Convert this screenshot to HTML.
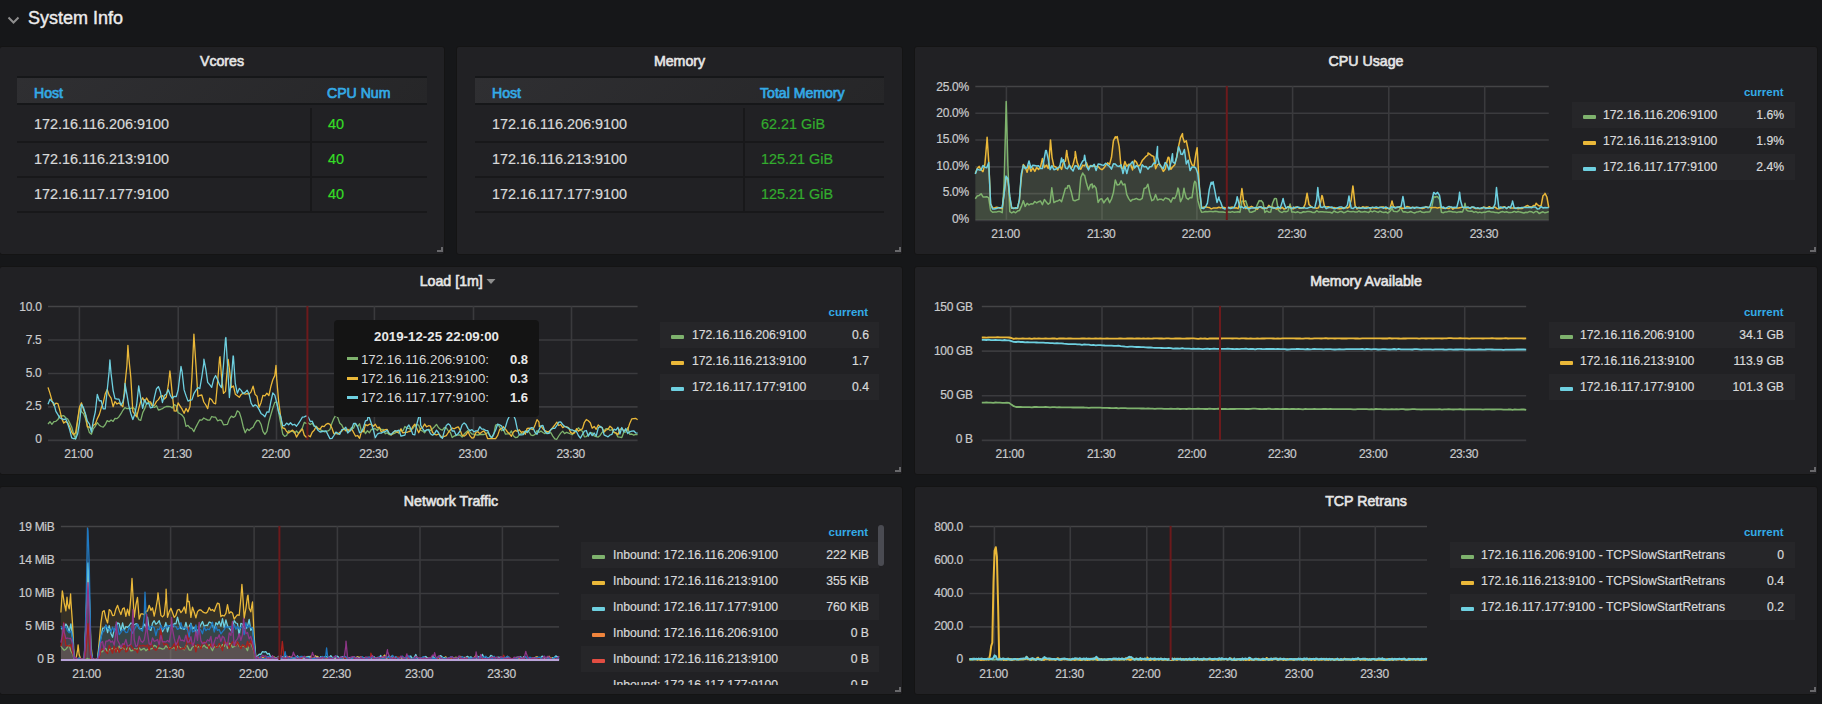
<!DOCTYPE html><html><head><meta charset="utf-8"><style>
*{box-sizing:border-box;margin:0;padding:0}
html,body{width:1822px;height:704px;overflow:hidden;background:#161719;font-family:"Liberation Sans",sans-serif;color:#d8d9da}
.abs{position:absolute}
.panel{position:absolute;background:#212124;border-radius:3px;border:1px solid #141414}
.ptitle{position:absolute;left:0;right:0;text-align:center;font-size:14.2px;font-weight:normal;color:#e6e6e6;-webkit-text-stroke:0.6px #e6e6e6;white-space:nowrap;top:6px;line-height:17px}
.rz{position:absolute;right:1px;bottom:2px;width:6px;height:5px;border-right:2px solid #68686b;border-bottom:2px solid #68686b}
.lbl{position:absolute;font-size:12px;color:#c9cacc;white-space:nowrap;line-height:14px;letter-spacing:-0.3px;-webkit-text-stroke:0.2px #c9cacc}
.yl{text-align:right}
.xl{text-align:center;width:60px}
.leg{position:absolute;font-size:12.2px;color:#d8d9da;white-space:nowrap;-webkit-text-stroke:0.2px #d8d9da}
.lrow{position:absolute;left:0;height:26px;line-height:26px}
.lrow.bg{background:#262629}
.mk{position:absolute;height:4px;top:12.5px;width:13px;border-radius:1px}
.cur{position:absolute;font-size:11.5px;font-weight:bold;color:#34aae6;line-height:14px}
.tbl{position:absolute;font-size:14.4px;color:#d8d9da;-webkit-text-stroke:0.2px currentColor}
</style></head><body>

<svg class="abs" style="left:0;top:0" width="30" height="40"><path d="M8.5,17.5 L13.5,22.5 L18.5,17.5" fill="none" stroke="#8e8e8e" stroke-width="2"/></svg>
<div class="abs" style="left:28px;top:7px;font-size:18px;line-height:22px;color:#ececec;-webkit-text-stroke:0.4px #ececec">System Info</div>
<div class="panel" style="left:-1px;top:46px;width:446px;height:209px">
<div class="ptitle">Vcores</div>
<div class="rz"></div></div>
<div class="abs" style="left:17px;top:76px;width:410px;height:2px;background:#161719"></div>
<div class="abs" style="left:17px;top:78px;width:410px;height:25px;background:linear-gradient(135deg,#2f2f32,#262628)"></div>
<div class="abs" style="left:17px;top:103px;width:410px;height:2px;background:#161719"></div>
<div class="tbl" style="left:34px;top:85px;color:#34aae6;font-weight:normal;font-size:14.1px;line-height:16px;-webkit-text-stroke:0.7px #34aae6">Host</div>
<div class="tbl" style="left:327px;top:85px;color:#34aae6;font-weight:normal;font-size:14.1px;line-height:16px;-webkit-text-stroke:0.7px #34aae6">CPU Num</div>
<div class="tbl" style="left:34px;top:116.0px;line-height:16px">172.16.116.206:9100</div>
<div class="tbl" style="left:328px;top:116px;line-height:16px;color:#35de26">40</div>
<div class="abs" style="left:17px;top:141px;width:410px;height:2px;background:#18181a"></div>
<div class="tbl" style="left:34px;top:151.0px;line-height:16px">172.16.116.213:9100</div>
<div class="tbl" style="left:328px;top:151px;line-height:16px;color:#35de26">40</div>
<div class="abs" style="left:17px;top:176px;width:410px;height:2px;background:#18181a"></div>
<div class="tbl" style="left:34px;top:186.0px;line-height:16px">172.16.117.177:9100</div>
<div class="tbl" style="left:328px;top:186px;line-height:16px;color:#35de26">40</div>
<div class="abs" style="left:17px;top:211px;width:410px;height:2px;background:#18181a"></div>
<div class="abs" style="left:310px;top:108px;width:2px;height:104px;background:#18181a"></div>
<div class="panel" style="left:456px;top:46px;width:447px;height:209px">
<div class="ptitle">Memory</div>
<div class="rz"></div></div>
<div class="abs" style="left:475px;top:76px;width:409px;height:2px;background:#161719"></div>
<div class="abs" style="left:475px;top:78px;width:409px;height:25px;background:linear-gradient(135deg,#2f2f32,#262628)"></div>
<div class="abs" style="left:475px;top:103px;width:409px;height:2px;background:#161719"></div>
<div class="tbl" style="left:492px;top:85px;color:#34aae6;font-weight:normal;font-size:14.1px;line-height:16px;-webkit-text-stroke:0.7px #34aae6">Host</div>
<div class="tbl" style="left:760px;top:85px;color:#34aae6;font-weight:normal;font-size:14.1px;line-height:16px;-webkit-text-stroke:0.7px #34aae6">Total Memory</div>
<div class="tbl" style="left:492px;top:116.0px;line-height:16px">172.16.116.206:9100</div>
<div class="tbl" style="left:761px;top:116px;line-height:16px;color:#33ac2e">62.21 GiB</div>
<div class="abs" style="left:475px;top:141px;width:409px;height:2px;background:#18181a"></div>
<div class="tbl" style="left:492px;top:151.0px;line-height:16px">172.16.116.213:9100</div>
<div class="tbl" style="left:761px;top:151px;line-height:16px;color:#33ac2e">125.21 GiB</div>
<div class="abs" style="left:475px;top:176px;width:409px;height:2px;background:#18181a"></div>
<div class="tbl" style="left:492px;top:186.0px;line-height:16px">172.16.117.177:9100</div>
<div class="tbl" style="left:761px;top:186px;line-height:16px;color:#33ac2e">125.21 GiB</div>
<div class="abs" style="left:475px;top:211px;width:409px;height:2px;background:#18181a"></div>
<div class="abs" style="left:743px;top:108px;width:2px;height:104px;background:#18181a"></div>
<div class="panel" style="left:914px;top:46px;width:904px;height:209px">
<div class="ptitle">CPU Usage</div>
<div class="rz"></div></div>
<svg class="abs" style="left:0;top:0" width="1822" height="704"><line x1="975.3" y1="86.50" x2="1548.8" y2="86.50" stroke="#444446" stroke-width="1.6"/><line x1="975.3" y1="113.28" x2="1548.8" y2="113.28" stroke="#3b3b3e" stroke-width="1.6"/><line x1="975.3" y1="140.06" x2="1548.8" y2="140.06" stroke="#3b3b3e" stroke-width="1.6"/><line x1="975.3" y1="166.84" x2="1548.8" y2="166.84" stroke="#3b3b3e" stroke-width="1.6"/><line x1="975.3" y1="193.62" x2="1548.8" y2="193.62" stroke="#3b3b3e" stroke-width="1.6"/><line x1="975.3" y1="220.40" x2="1548.8" y2="220.40" stroke="#3b3b3e" stroke-width="1.6"/><line x1="1006.40" y1="86.1" x2="1006.40" y2="220.0" stroke="#3a3a3d" stroke-width="1.6"/><line x1="1102.00" y1="86.1" x2="1102.00" y2="220.0" stroke="#3a3a3d" stroke-width="1.6"/><line x1="1196.90" y1="86.1" x2="1196.90" y2="220.0" stroke="#3a3a3d" stroke-width="1.6"/><line x1="1292.60" y1="86.1" x2="1292.60" y2="220.0" stroke="#3a3a3d" stroke-width="1.6"/><line x1="1388.80" y1="86.1" x2="1388.80" y2="220.0" stroke="#3a3a3d" stroke-width="1.6"/><line x1="1484.70" y1="86.1" x2="1484.70" y2="220.0" stroke="#3a3a3d" stroke-width="1.6"/></svg>
<div class="lbl yl" style="left:888.8px;width:80px;top:79.6px">25.0%</div>
<div class="lbl yl" style="left:888.8px;width:80px;top:106.0px">20.0%</div>
<div class="lbl yl" style="left:888.8px;width:80px;top:132.4px">15.0%</div>
<div class="lbl yl" style="left:888.8px;width:80px;top:158.9px">10.0%</div>
<div class="lbl yl" style="left:888.8px;width:80px;top:185.3px">5.0%</div>
<div class="lbl yl" style="left:888.8px;width:80px;top:211.7px">0%</div>
<div class="lbl xl" style="left:975.6px;top:226.5px">21:00</div>
<div class="lbl xl" style="left:1071.2px;top:226.5px">21:30</div>
<div class="lbl xl" style="left:1166.1px;top:226.5px">22:00</div>
<div class="lbl xl" style="left:1261.8px;top:226.5px">22:30</div>
<div class="lbl xl" style="left:1358.0px;top:226.5px">23:00</div>
<div class="lbl xl" style="left:1453.9px;top:226.5px">23:30</div>
<svg class="abs" style="left:0;top:0" width="1822" height="704"><path d="M975.3,198.7 L977.2,196.0 L979.1,195.5 L980.1,194.6 L981.1,193.7 L983.0,196.9 L984.9,197.1 L986.8,196.7 L988.7,197.9 L990.6,210.5 L992.6,212.3 L994.5,212.0 L996.4,212.1 L998.3,211.4 L1000.2,211.6 L1002.2,212.6 L1004.1,183.5 L1006.0,110.4 L1006.2,101.5 L1007.9,166.5 L1009.8,211.6 L1011.7,212.9 L1013.7,211.6 L1015.6,212.8 L1017.5,211.1 L1019.4,210.6 L1021.3,206.4 L1023.3,200.7 L1025.2,206.4 L1027.1,203.3 L1029.0,204.9 L1030.9,203.8 L1032.8,204.1 L1034.8,201.5 L1036.7,202.9 L1038.6,201.7 L1040.5,201.0 L1042.4,204.7 L1044.4,199.4 L1046.3,202.0 L1048.2,204.3 L1050.1,202.6 L1051.8,187.8 L1052.0,189.5 L1053.9,202.6 L1055.9,201.3 L1057.8,201.0 L1059.7,199.7 L1061.6,201.6 L1063.5,195.1 L1065.4,188.3 L1067.4,188.0 L1067.7,185.7 L1069.3,185.6 L1071.2,191.7 L1073.1,200.2 L1075.0,200.8 L1077.0,199.9 L1078.9,199.2 L1080.8,177.5 L1082.7,173.0 L1083.6,174.9 L1084.6,175.2 L1086.5,183.3 L1088.5,189.9 L1090.4,184.8 L1092.3,184.0 L1092.5,187.9 L1094.2,185.6 L1096.1,188.3 L1098.1,202.4 L1100.0,199.3 L1101.9,198.8 L1103.8,202.9 L1105.7,200.0 L1107.6,197.9 L1109.6,202.7 L1111.5,199.0 L1113.4,192.6 L1115.3,179.9 L1117.2,185.1 L1119.2,184.6 L1120.3,182.5 L1121.1,180.9 L1123.0,184.9 L1124.9,184.0 L1126.8,194.7 L1128.7,198.6 L1130.7,201.3 L1132.6,199.4 L1134.5,199.3 L1136.4,198.4 L1138.3,199.6 L1140.3,199.7 L1142.2,198.3 L1144.1,188.5 L1146.0,187.8 L1146.7,186.6 L1147.9,184.2 L1149.8,193.6 L1151.8,200.7 L1153.7,199.7 L1155.6,194.6 L1157.5,200.1 L1159.4,199.2 L1161.4,199.2 L1163.3,200.4 L1165.2,197.9 L1167.1,198.5 L1169.0,199.2 L1170.9,202.1 L1172.9,197.7 L1174.8,198.5 L1176.7,194.2 L1177.9,188.1 L1178.6,189.4 L1180.5,201.7 L1182.5,197.6 L1184.0,188.2 L1184.4,191.1 L1186.3,197.9 L1188.2,199.4 L1190.1,197.5 L1192.0,197.7 L1194.0,183.8 L1194.8,181.2 L1195.9,182.9 L1197.8,200.2 L1199.7,207.4 L1201.6,212.2 L1203.5,212.0 L1205.5,211.5 L1207.4,211.8 L1209.3,211.5 L1211.2,211.4 L1213.1,211.8 L1215.1,211.2 L1217.0,211.5 L1218.9,212.0 L1220.8,212.0 L1222.7,211.9 L1224.6,212.3 L1226.6,212.6 L1228.5,211.9 L1230.4,212.2 L1232.3,211.6 L1234.2,212.2 L1236.2,211.9 L1238.1,211.8 L1240.0,212.2 L1241.9,201.1 L1243.8,201.6 L1244.2,201.4 L1245.7,200.8 L1247.7,207.1 L1249.6,211.9 L1251.5,212.3 L1253.4,211.5 L1255.3,210.8 L1257.3,204.6 L1259.2,200.6 L1260.1,201.1 L1261.1,200.6 L1263.0,202.7 L1264.9,212.5 L1266.8,210.9 L1268.8,212.2 L1270.7,212.0 L1272.6,203.2 L1274.5,198.6 L1275.1,198.4 L1276.4,198.8 L1278.4,210.3 L1280.3,211.9 L1282.2,212.5 L1284.1,211.2 L1286.0,211.8 L1287.9,211.1 L1289.9,204.6 L1290.1,203.9 L1291.8,212.1 L1293.7,212.1 L1295.6,212.6 L1297.5,211.7 L1299.5,212.7 L1301.4,212.7 L1303.3,211.8 L1305.2,212.1 L1307.1,211.5 L1309.0,211.5 L1311.0,211.7 L1312.9,212.6 L1314.8,212.4 L1316.7,210.7 L1318.6,212.0 L1320.6,211.7 L1322.5,211.8 L1324.4,211.9 L1326.3,212.0 L1328.2,212.2 L1330.1,212.2 L1332.1,213.0 L1334.0,211.0 L1335.9,212.0 L1337.8,212.6 L1339.7,211.6 L1341.6,211.5 L1343.6,212.7 L1345.5,212.2 L1347.4,211.1 L1349.3,211.6 L1351.2,211.7 L1353.2,211.4 L1355.1,212.0 L1357.0,212.1 L1358.9,211.0 L1360.8,212.0 L1362.7,212.0 L1364.7,211.6 L1366.6,211.9 L1368.5,212.6 L1370.4,210.9 L1372.3,211.9 L1374.3,210.9 L1376.2,211.6 L1378.1,212.4 L1380.0,211.1 L1381.9,212.0 L1383.8,212.4 L1385.8,211.9 L1387.7,213.1 L1389.6,211.7 L1391.5,209.2 L1392.0,207.8 L1393.4,211.2 L1395.4,211.5 L1397.3,211.7 L1399.2,210.3 L1400.6,206.7 L1401.1,208.5 L1403.0,211.9 L1404.9,211.7 L1406.9,212.4 L1408.8,212.2 L1410.7,211.5 L1412.6,212.4 L1414.5,213.0 L1416.5,212.1 L1418.4,211.8 L1420.3,211.1 L1422.2,212.3 L1424.1,212.4 L1426.0,211.9 L1428.0,212.0 L1429.9,211.8 L1431.8,206.9 L1433.7,196.8 L1435.6,197.2 L1436.0,196.4 L1437.6,196.8 L1439.5,199.2 L1441.4,212.2 L1443.3,212.7 L1445.2,211.9 L1447.1,211.9 L1449.1,211.3 L1451.0,211.4 L1452.9,211.9 L1454.8,211.9 L1456.7,212.5 L1458.7,211.9 L1460.6,211.8 L1462.5,212.1 L1464.4,207.0 L1465.0,203.2 L1466.3,209.9 L1468.2,211.0 L1470.2,211.3 L1472.1,211.1 L1474.0,212.4 L1475.9,211.6 L1477.8,212.7 L1479.7,212.1 L1481.7,212.7 L1483.6,212.3 L1485.5,212.2 L1487.4,211.4 L1489.3,211.3 L1491.3,212.1 L1493.2,212.1 L1495.1,212.4 L1497.0,212.5 L1498.9,212.9 L1500.8,212.0 L1502.8,211.6 L1504.7,212.3 L1506.6,211.7 L1508.5,212.5 L1510.4,212.5 L1512.4,212.2 L1514.3,211.4 L1516.2,212.2 L1518.1,211.5 L1520.0,212.1 L1521.9,212.5 L1523.9,213.0 L1525.8,212.2 L1527.7,212.4 L1529.6,211.4 L1531.5,211.7 L1533.5,212.8 L1535.4,211.5 L1537.3,211.6 L1539.2,213.5 L1541.1,212.5 L1543.0,211.8 L1545.0,212.8 L1546.9,212.3 L1548.8,211.6 L1548.8,220.0 L975.3,220.0 Z" fill="rgba(126,178,109,0.1)" stroke="none"/><path d="M975.3,173.5 L977.2,168.6 L979.1,166.4 L981.1,170.0 L983.0,171.6 L984.9,164.0 L986.8,141.9 L987.1,137.2 L988.7,161.0 L990.6,204.0 L992.6,207.8 L994.5,207.9 L996.4,207.2 L998.3,207.6 L1000.2,208.3 L1002.2,208.4 L1004.1,193.6 L1006.0,177.4 L1007.9,179.7 L1009.8,198.0 L1011.7,208.2 L1013.7,208.1 L1015.6,208.4 L1017.5,208.3 L1019.4,199.7 L1021.3,177.6 L1023.3,164.6 L1025.2,166.9 L1027.1,172.3 L1029.0,165.6 L1030.9,171.3 L1032.8,167.9 L1034.8,171.4 L1036.7,167.4 L1038.6,169.5 L1040.5,166.8 L1042.4,158.6 L1044.4,167.5 L1046.3,165.1 L1048.2,168.4 L1050.1,146.3 L1050.5,139.9 L1052.0,157.3 L1053.9,166.3 L1055.9,167.0 L1057.8,170.0 L1059.7,165.8 L1061.6,169.4 L1063.5,162.2 L1065.4,161.2 L1066.7,150.4 L1067.4,155.9 L1069.3,164.6 L1071.2,168.8 L1073.1,164.5 L1075.0,156.9 L1075.3,151.5 L1077.0,162.1 L1078.9,166.8 L1080.8,169.2 L1082.7,165.1 L1084.6,165.9 L1086.5,162.7 L1088.5,168.1 L1090.4,165.6 L1092.3,165.7 L1094.2,166.3 L1096.1,166.5 L1098.1,166.6 L1100.0,168.6 L1101.9,169.7 L1103.8,168.1 L1105.7,165.4 L1107.6,162.9 L1109.6,164.4 L1111.5,157.3 L1113.4,140.9 L1115.3,136.7 L1115.8,138.1 L1117.2,136.5 L1119.2,146.6 L1121.1,167.8 L1123.0,168.8 L1124.9,161.6 L1126.8,166.2 L1128.7,164.3 L1130.7,164.5 L1132.6,169.9 L1134.5,160.3 L1136.4,162.1 L1138.3,166.3 L1140.3,164.8 L1142.2,160.6 L1144.1,158.4 L1146.0,156.3 L1147.9,155.0 L1148.0,153.0 L1149.8,154.1 L1151.8,155.8 L1153.7,156.4 L1155.6,168.7 L1157.5,164.6 L1159.4,163.7 L1161.4,167.4 L1163.3,171.4 L1165.2,169.1 L1167.1,161.0 L1168.1,157.2 L1169.0,157.5 L1170.9,169.3 L1172.9,166.6 L1174.8,164.8 L1176.7,156.6 L1178.6,146.1 L1180.5,137.6 L1182.5,133.6 L1182.7,137.1 L1184.4,142.2 L1186.3,140.8 L1188.2,149.9 L1190.1,159.8 L1192.0,164.8 L1194.0,166.2 L1195.9,153.4 L1197.1,147.7 L1197.8,159.6 L1199.7,191.5 L1201.6,208.0 L1203.5,207.2 L1205.5,206.8 L1207.4,207.3 L1209.3,207.5 L1211.2,208.9 L1213.1,208.1 L1215.1,208.1 L1217.0,208.0 L1218.9,207.3 L1220.8,207.9 L1222.7,207.2 L1224.6,207.6 L1226.6,207.9 L1228.5,207.6 L1230.4,207.4 L1232.3,207.1 L1234.2,208.0 L1236.2,207.8 L1238.1,208.6 L1240.0,202.5 L1241.9,188.5 L1242.0,189.1 L1243.8,202.9 L1245.7,208.5 L1247.7,207.6 L1249.6,207.5 L1251.5,206.3 L1253.4,207.5 L1255.3,208.2 L1257.3,209.3 L1259.2,206.8 L1261.1,207.6 L1263.0,208.7 L1264.9,207.6 L1266.8,208.7 L1268.8,205.4 L1270.7,207.0 L1272.6,207.3 L1274.5,207.8 L1276.4,209.1 L1278.4,207.8 L1280.3,208.7 L1282.2,207.3 L1284.1,209.1 L1286.0,208.3 L1287.9,206.9 L1289.9,206.6 L1291.8,208.4 L1293.7,208.7 L1295.6,207.1 L1297.5,207.1 L1299.5,208.3 L1301.4,208.1 L1303.3,208.1 L1305.2,204.0 L1307.0,193.7 L1307.1,193.3 L1309.0,204.5 L1311.0,206.4 L1312.9,207.7 L1314.8,207.8 L1316.7,208.3 L1318.6,207.8 L1320.6,202.5 L1321.9,195.4 L1322.5,196.6 L1324.4,206.2 L1326.3,207.1 L1328.2,206.8 L1330.1,207.5 L1332.1,208.1 L1334.0,207.6 L1335.9,207.9 L1337.8,208.4 L1339.7,208.8 L1341.6,208.6 L1343.6,207.7 L1345.5,207.6 L1347.4,208.0 L1349.3,206.8 L1351.2,199.7 L1352.9,185.9 L1353.2,188.0 L1355.1,205.5 L1357.0,208.9 L1358.9,207.2 L1360.8,208.1 L1362.7,206.8 L1364.7,207.5 L1366.6,207.0 L1368.5,207.2 L1370.4,209.0 L1372.3,207.2 L1374.3,208.1 L1376.2,208.2 L1378.1,208.0 L1380.0,207.2 L1381.9,207.1 L1383.8,207.0 L1385.8,208.7 L1387.7,208.1 L1389.6,209.2 L1391.5,203.1 L1392.0,200.9 L1393.4,206.4 L1395.4,207.5 L1397.3,207.5 L1399.2,207.0 L1401.1,208.2 L1403.0,208.2 L1404.9,208.2 L1406.9,206.6 L1408.8,207.0 L1410.7,207.8 L1412.6,207.5 L1414.5,207.6 L1416.5,207.6 L1418.4,207.8 L1420.3,207.9 L1422.2,208.5 L1424.1,208.1 L1426.0,206.6 L1428.0,207.3 L1429.9,207.6 L1431.8,207.8 L1433.7,207.6 L1435.6,207.5 L1437.6,208.1 L1439.5,207.6 L1441.4,207.5 L1443.3,208.2 L1445.2,208.2 L1447.1,208.3 L1449.1,208.4 L1451.0,207.1 L1452.9,209.2 L1454.8,207.9 L1456.7,208.1 L1458.7,208.1 L1460.6,207.6 L1462.5,207.0 L1464.4,207.6 L1466.3,207.8 L1468.2,208.1 L1470.2,207.8 L1472.1,207.1 L1474.0,207.9 L1475.9,208.4 L1477.8,208.5 L1479.7,208.4 L1481.7,208.6 L1483.6,207.0 L1485.5,207.5 L1487.4,207.8 L1489.3,206.7 L1491.3,208.1 L1493.2,207.2 L1495.1,207.2 L1497.0,208.7 L1498.9,208.7 L1500.8,208.3 L1502.8,207.1 L1504.7,206.8 L1506.6,208.5 L1508.5,207.0 L1510.4,207.9 L1512.4,207.9 L1514.3,208.0 L1516.2,207.9 L1518.1,208.8 L1520.0,208.3 L1521.9,208.5 L1523.9,207.4 L1525.8,206.3 L1527.7,205.5 L1529.6,206.8 L1531.5,207.1 L1533.5,205.6 L1535.4,205.3 L1536.1,203.2 L1537.3,204.5 L1539.2,206.0 L1541.1,205.6 L1543.0,195.7 L1545.0,194.0 L1545.0,193.3 L1546.9,197.0 L1548.8,207.7 L1548.8,220.0 L975.3,220.0 Z" fill="rgba(234,184,57,0.1)" stroke="none"/><path d="M975.3,174.1 L977.2,169.0 L979.1,169.9 L981.1,169.9 L983.0,165.5 L984.9,167.3 L986.8,167.7 L988.7,162.4 L990.6,203.5 L992.6,209.0 L994.5,209.1 L996.4,208.6 L998.3,207.8 L1000.2,207.7 L1002.2,207.5 L1004.1,194.1 L1006.0,176.1 L1007.9,178.7 L1009.8,196.4 L1011.7,207.8 L1013.7,208.6 L1015.6,207.7 L1017.5,208.1 L1019.4,200.0 L1021.3,173.9 L1023.3,165.3 L1025.2,168.7 L1027.1,167.5 L1029.0,161.0 L1030.9,168.0 L1032.8,165.3 L1034.8,165.6 L1036.7,165.9 L1038.6,165.7 L1040.5,168.6 L1042.4,168.5 L1044.4,157.5 L1045.7,150.5 L1046.3,150.4 L1048.2,159.1 L1050.1,169.6 L1052.0,165.7 L1053.9,169.8 L1055.9,169.0 L1057.8,167.8 L1059.7,166.8 L1061.6,157.9 L1062.0,161.9 L1063.5,159.7 L1065.4,167.8 L1067.4,168.8 L1069.3,165.2 L1071.2,168.7 L1073.1,170.9 L1075.0,165.7 L1077.0,165.9 L1078.9,169.3 L1080.8,164.7 L1082.7,161.0 L1083.9,160.4 L1084.6,155.2 L1086.5,166.2 L1088.5,170.0 L1090.4,165.7 L1092.3,166.6 L1094.2,164.3 L1096.1,170.6 L1098.1,164.1 L1100.0,164.3 L1101.9,165.0 L1103.8,165.2 L1105.7,163.3 L1107.6,164.9 L1109.6,166.5 L1111.5,169.1 L1113.4,163.8 L1115.3,164.1 L1117.2,166.0 L1119.2,166.4 L1121.1,164.8 L1123.0,173.6 L1124.9,165.9 L1126.8,173.5 L1128.7,166.1 L1130.7,163.8 L1132.6,161.5 L1134.5,168.0 L1136.4,165.5 L1138.3,166.9 L1140.3,172.7 L1142.2,164.7 L1144.1,166.7 L1146.0,166.4 L1147.9,169.2 L1149.8,166.7 L1151.8,166.4 L1153.7,163.1 L1155.6,163.2 L1157.5,146.5 L1157.5,157.0 L1159.4,164.5 L1161.4,166.7 L1163.3,168.7 L1165.2,162.4 L1167.1,164.7 L1169.0,169.9 L1170.9,162.5 L1172.5,153.7 L1172.9,162.0 L1174.8,163.5 L1176.7,157.6 L1178.6,146.7 L1180.5,151.9 L1180.8,154.1 L1182.5,154.5 L1184.4,149.5 L1186.3,163.9 L1188.2,160.2 L1190.1,170.6 L1192.0,166.9 L1194.0,167.0 L1195.9,168.2 L1197.8,173.4 L1199.7,190.6 L1201.6,208.1 L1203.5,208.6 L1205.5,206.8 L1207.4,203.1 L1209.3,189.4 L1211.2,182.3 L1212.0,184.2 L1213.1,181.8 L1215.1,192.2 L1217.0,202.4 L1218.9,197.0 L1219.0,198.8 L1220.8,202.5 L1222.7,208.0 L1224.6,208.9 L1226.6,208.4 L1228.5,207.5 L1230.4,208.5 L1232.3,208.0 L1234.2,207.2 L1236.2,202.4 L1237.2,196.7 L1238.1,200.3 L1240.0,207.6 L1241.9,206.7 L1243.8,208.3 L1245.7,206.6 L1247.7,208.5 L1249.6,208.8 L1251.5,207.9 L1253.4,207.9 L1255.3,207.5 L1257.3,208.0 L1259.2,207.2 L1261.1,206.8 L1263.0,208.1 L1264.9,208.5 L1266.8,207.9 L1268.8,207.1 L1270.7,207.1 L1272.6,207.9 L1274.5,208.3 L1276.4,207.7 L1278.4,207.0 L1280.3,208.1 L1282.2,201.9 L1283.1,198.4 L1284.1,203.3 L1286.0,208.1 L1287.9,206.8 L1289.9,207.6 L1291.8,208.6 L1293.7,207.1 L1295.6,207.9 L1297.5,207.0 L1299.5,207.5 L1301.4,208.1 L1303.3,207.5 L1305.2,208.0 L1307.1,208.2 L1309.0,207.6 L1311.0,207.1 L1312.9,207.6 L1314.8,207.7 L1316.7,199.5 L1317.8,187.5 L1318.6,196.2 L1320.6,207.0 L1322.5,207.4 L1324.4,206.3 L1326.3,208.7 L1328.2,207.7 L1330.1,207.3 L1332.1,207.1 L1334.0,208.7 L1335.9,208.4 L1337.8,207.7 L1339.7,207.0 L1341.6,206.9 L1343.6,208.6 L1345.5,207.6 L1347.4,205.1 L1349.0,195.9 L1349.3,198.3 L1351.2,208.1 L1353.2,208.5 L1355.1,206.9 L1357.0,207.8 L1358.9,207.9 L1360.8,208.2 L1362.7,207.7 L1364.7,208.2 L1366.6,208.3 L1368.5,207.7 L1370.4,207.8 L1372.3,207.4 L1374.3,207.6 L1376.2,206.9 L1378.1,207.7 L1380.0,207.5 L1381.9,207.5 L1383.8,208.2 L1385.8,206.9 L1387.7,208.0 L1389.6,208.7 L1391.5,206.8 L1393.4,207.2 L1395.4,208.0 L1397.3,207.0 L1399.2,207.0 L1401.1,206.3 L1402.9,196.6 L1403.0,196.7 L1404.9,208.3 L1406.9,208.1 L1408.8,208.0 L1410.7,208.2 L1412.6,207.3 L1414.5,208.2 L1416.5,207.3 L1418.4,207.5 L1420.3,208.0 L1422.2,207.5 L1424.1,207.2 L1426.0,206.9 L1428.0,207.8 L1429.9,206.5 L1431.8,200.6 L1433.7,192.4 L1435.6,194.1 L1436.0,193.9 L1437.6,192.4 L1439.5,195.4 L1441.4,207.4 L1443.3,206.9 L1445.2,208.6 L1447.1,207.4 L1449.1,206.4 L1451.0,207.1 L1452.9,207.6 L1454.8,207.3 L1456.7,207.6 L1458.7,199.8 L1459.6,192.3 L1460.6,200.8 L1462.5,207.3 L1464.4,207.5 L1466.3,207.2 L1468.2,207.1 L1470.2,208.4 L1472.1,206.9 L1474.0,207.1 L1475.9,208.4 L1477.8,207.8 L1479.7,208.6 L1481.7,207.8 L1483.6,207.4 L1485.5,208.4 L1487.4,208.2 L1489.3,208.2 L1491.3,208.1 L1493.2,208.2 L1495.1,203.6 L1496.5,187.5 L1497.0,192.8 L1498.9,208.2 L1500.8,207.0 L1502.8,208.0 L1504.7,207.1 L1506.6,208.5 L1508.5,206.7 L1510.4,207.9 L1512.4,202.2 L1512.5,201.0 L1514.3,208.1 L1516.2,208.4 L1518.1,207.5 L1520.0,208.0 L1521.9,207.4 L1523.9,207.6 L1525.8,207.5 L1527.7,207.6 L1529.6,207.2 L1531.5,207.7 L1533.5,206.9 L1535.4,207.0 L1537.3,208.9 L1539.2,208.8 L1541.1,206.6 L1543.0,207.9 L1545.0,207.5 L1546.9,207.7 L1548.8,207.5 L1548.8,220.0 L975.3,220.0 Z" fill="rgba(110,208,224,0.1)" stroke="none"/><path d="M975.3,198.7 L977.2,196.0 L979.1,195.5 L980.1,194.6 L981.1,193.7 L983.0,196.9 L984.9,197.1 L986.8,196.7 L988.7,197.9 L990.6,210.5 L992.6,212.3 L994.5,212.0 L996.4,212.1 L998.3,211.4 L1000.2,211.6 L1002.2,212.6 L1004.1,183.5 L1006.0,110.4 L1006.2,101.5 L1007.9,166.5 L1009.8,211.6 L1011.7,212.9 L1013.7,211.6 L1015.6,212.8 L1017.5,211.1 L1019.4,210.6 L1021.3,206.4 L1023.3,200.7 L1025.2,206.4 L1027.1,203.3 L1029.0,204.9 L1030.9,203.8 L1032.8,204.1 L1034.8,201.5 L1036.7,202.9 L1038.6,201.7 L1040.5,201.0 L1042.4,204.7 L1044.4,199.4 L1046.3,202.0 L1048.2,204.3 L1050.1,202.6 L1051.8,187.8 L1052.0,189.5 L1053.9,202.6 L1055.9,201.3 L1057.8,201.0 L1059.7,199.7 L1061.6,201.6 L1063.5,195.1 L1065.4,188.3 L1067.4,188.0 L1067.7,185.7 L1069.3,185.6 L1071.2,191.7 L1073.1,200.2 L1075.0,200.8 L1077.0,199.9 L1078.9,199.2 L1080.8,177.5 L1082.7,173.0 L1083.6,174.9 L1084.6,175.2 L1086.5,183.3 L1088.5,189.9 L1090.4,184.8 L1092.3,184.0 L1092.5,187.9 L1094.2,185.6 L1096.1,188.3 L1098.1,202.4 L1100.0,199.3 L1101.9,198.8 L1103.8,202.9 L1105.7,200.0 L1107.6,197.9 L1109.6,202.7 L1111.5,199.0 L1113.4,192.6 L1115.3,179.9 L1117.2,185.1 L1119.2,184.6 L1120.3,182.5 L1121.1,180.9 L1123.0,184.9 L1124.9,184.0 L1126.8,194.7 L1128.7,198.6 L1130.7,201.3 L1132.6,199.4 L1134.5,199.3 L1136.4,198.4 L1138.3,199.6 L1140.3,199.7 L1142.2,198.3 L1144.1,188.5 L1146.0,187.8 L1146.7,186.6 L1147.9,184.2 L1149.8,193.6 L1151.8,200.7 L1153.7,199.7 L1155.6,194.6 L1157.5,200.1 L1159.4,199.2 L1161.4,199.2 L1163.3,200.4 L1165.2,197.9 L1167.1,198.5 L1169.0,199.2 L1170.9,202.1 L1172.9,197.7 L1174.8,198.5 L1176.7,194.2 L1177.9,188.1 L1178.6,189.4 L1180.5,201.7 L1182.5,197.6 L1184.0,188.2 L1184.4,191.1 L1186.3,197.9 L1188.2,199.4 L1190.1,197.5 L1192.0,197.7 L1194.0,183.8 L1194.8,181.2 L1195.9,182.9 L1197.8,200.2 L1199.7,207.4 L1201.6,212.2 L1203.5,212.0 L1205.5,211.5 L1207.4,211.8 L1209.3,211.5 L1211.2,211.4 L1213.1,211.8 L1215.1,211.2 L1217.0,211.5 L1218.9,212.0 L1220.8,212.0 L1222.7,211.9 L1224.6,212.3 L1226.6,212.6 L1228.5,211.9 L1230.4,212.2 L1232.3,211.6 L1234.2,212.2 L1236.2,211.9 L1238.1,211.8 L1240.0,212.2 L1241.9,201.1 L1243.8,201.6 L1244.2,201.4 L1245.7,200.8 L1247.7,207.1 L1249.6,211.9 L1251.5,212.3 L1253.4,211.5 L1255.3,210.8 L1257.3,204.6 L1259.2,200.6 L1260.1,201.1 L1261.1,200.6 L1263.0,202.7 L1264.9,212.5 L1266.8,210.9 L1268.8,212.2 L1270.7,212.0 L1272.6,203.2 L1274.5,198.6 L1275.1,198.4 L1276.4,198.8 L1278.4,210.3 L1280.3,211.9 L1282.2,212.5 L1284.1,211.2 L1286.0,211.8 L1287.9,211.1 L1289.9,204.6 L1290.1,203.9 L1291.8,212.1 L1293.7,212.1 L1295.6,212.6 L1297.5,211.7 L1299.5,212.7 L1301.4,212.7 L1303.3,211.8 L1305.2,212.1 L1307.1,211.5 L1309.0,211.5 L1311.0,211.7 L1312.9,212.6 L1314.8,212.4 L1316.7,210.7 L1318.6,212.0 L1320.6,211.7 L1322.5,211.8 L1324.4,211.9 L1326.3,212.0 L1328.2,212.2 L1330.1,212.2 L1332.1,213.0 L1334.0,211.0 L1335.9,212.0 L1337.8,212.6 L1339.7,211.6 L1341.6,211.5 L1343.6,212.7 L1345.5,212.2 L1347.4,211.1 L1349.3,211.6 L1351.2,211.7 L1353.2,211.4 L1355.1,212.0 L1357.0,212.1 L1358.9,211.0 L1360.8,212.0 L1362.7,212.0 L1364.7,211.6 L1366.6,211.9 L1368.5,212.6 L1370.4,210.9 L1372.3,211.9 L1374.3,210.9 L1376.2,211.6 L1378.1,212.4 L1380.0,211.1 L1381.9,212.0 L1383.8,212.4 L1385.8,211.9 L1387.7,213.1 L1389.6,211.7 L1391.5,209.2 L1392.0,207.8 L1393.4,211.2 L1395.4,211.5 L1397.3,211.7 L1399.2,210.3 L1400.6,206.7 L1401.1,208.5 L1403.0,211.9 L1404.9,211.7 L1406.9,212.4 L1408.8,212.2 L1410.7,211.5 L1412.6,212.4 L1414.5,213.0 L1416.5,212.1 L1418.4,211.8 L1420.3,211.1 L1422.2,212.3 L1424.1,212.4 L1426.0,211.9 L1428.0,212.0 L1429.9,211.8 L1431.8,206.9 L1433.7,196.8 L1435.6,197.2 L1436.0,196.4 L1437.6,196.8 L1439.5,199.2 L1441.4,212.2 L1443.3,212.7 L1445.2,211.9 L1447.1,211.9 L1449.1,211.3 L1451.0,211.4 L1452.9,211.9 L1454.8,211.9 L1456.7,212.5 L1458.7,211.9 L1460.6,211.8 L1462.5,212.1 L1464.4,207.0 L1465.0,203.2 L1466.3,209.9 L1468.2,211.0 L1470.2,211.3 L1472.1,211.1 L1474.0,212.4 L1475.9,211.6 L1477.8,212.7 L1479.7,212.1 L1481.7,212.7 L1483.6,212.3 L1485.5,212.2 L1487.4,211.4 L1489.3,211.3 L1491.3,212.1 L1493.2,212.1 L1495.1,212.4 L1497.0,212.5 L1498.9,212.9 L1500.8,212.0 L1502.8,211.6 L1504.7,212.3 L1506.6,211.7 L1508.5,212.5 L1510.4,212.5 L1512.4,212.2 L1514.3,211.4 L1516.2,212.2 L1518.1,211.5 L1520.0,212.1 L1521.9,212.5 L1523.9,213.0 L1525.8,212.2 L1527.7,212.4 L1529.6,211.4 L1531.5,211.7 L1533.5,212.8 L1535.4,211.5 L1537.3,211.6 L1539.2,213.5 L1541.1,212.5 L1543.0,211.8 L1545.0,212.8 L1546.9,212.3 L1548.8,211.6" fill="none" stroke="#7eb26d" stroke-width="1.5" stroke-linejoin="round"/><path d="M975.3,173.5 L977.2,168.6 L979.1,166.4 L981.1,170.0 L983.0,171.6 L984.9,164.0 L986.8,141.9 L987.1,137.2 L988.7,161.0 L990.6,204.0 L992.6,207.8 L994.5,207.9 L996.4,207.2 L998.3,207.6 L1000.2,208.3 L1002.2,208.4 L1004.1,193.6 L1006.0,177.4 L1007.9,179.7 L1009.8,198.0 L1011.7,208.2 L1013.7,208.1 L1015.6,208.4 L1017.5,208.3 L1019.4,199.7 L1021.3,177.6 L1023.3,164.6 L1025.2,166.9 L1027.1,172.3 L1029.0,165.6 L1030.9,171.3 L1032.8,167.9 L1034.8,171.4 L1036.7,167.4 L1038.6,169.5 L1040.5,166.8 L1042.4,158.6 L1044.4,167.5 L1046.3,165.1 L1048.2,168.4 L1050.1,146.3 L1050.5,139.9 L1052.0,157.3 L1053.9,166.3 L1055.9,167.0 L1057.8,170.0 L1059.7,165.8 L1061.6,169.4 L1063.5,162.2 L1065.4,161.2 L1066.7,150.4 L1067.4,155.9 L1069.3,164.6 L1071.2,168.8 L1073.1,164.5 L1075.0,156.9 L1075.3,151.5 L1077.0,162.1 L1078.9,166.8 L1080.8,169.2 L1082.7,165.1 L1084.6,165.9 L1086.5,162.7 L1088.5,168.1 L1090.4,165.6 L1092.3,165.7 L1094.2,166.3 L1096.1,166.5 L1098.1,166.6 L1100.0,168.6 L1101.9,169.7 L1103.8,168.1 L1105.7,165.4 L1107.6,162.9 L1109.6,164.4 L1111.5,157.3 L1113.4,140.9 L1115.3,136.7 L1115.8,138.1 L1117.2,136.5 L1119.2,146.6 L1121.1,167.8 L1123.0,168.8 L1124.9,161.6 L1126.8,166.2 L1128.7,164.3 L1130.7,164.5 L1132.6,169.9 L1134.5,160.3 L1136.4,162.1 L1138.3,166.3 L1140.3,164.8 L1142.2,160.6 L1144.1,158.4 L1146.0,156.3 L1147.9,155.0 L1148.0,153.0 L1149.8,154.1 L1151.8,155.8 L1153.7,156.4 L1155.6,168.7 L1157.5,164.6 L1159.4,163.7 L1161.4,167.4 L1163.3,171.4 L1165.2,169.1 L1167.1,161.0 L1168.1,157.2 L1169.0,157.5 L1170.9,169.3 L1172.9,166.6 L1174.8,164.8 L1176.7,156.6 L1178.6,146.1 L1180.5,137.6 L1182.5,133.6 L1182.7,137.1 L1184.4,142.2 L1186.3,140.8 L1188.2,149.9 L1190.1,159.8 L1192.0,164.8 L1194.0,166.2 L1195.9,153.4 L1197.1,147.7 L1197.8,159.6 L1199.7,191.5 L1201.6,208.0 L1203.5,207.2 L1205.5,206.8 L1207.4,207.3 L1209.3,207.5 L1211.2,208.9 L1213.1,208.1 L1215.1,208.1 L1217.0,208.0 L1218.9,207.3 L1220.8,207.9 L1222.7,207.2 L1224.6,207.6 L1226.6,207.9 L1228.5,207.6 L1230.4,207.4 L1232.3,207.1 L1234.2,208.0 L1236.2,207.8 L1238.1,208.6 L1240.0,202.5 L1241.9,188.5 L1242.0,189.1 L1243.8,202.9 L1245.7,208.5 L1247.7,207.6 L1249.6,207.5 L1251.5,206.3 L1253.4,207.5 L1255.3,208.2 L1257.3,209.3 L1259.2,206.8 L1261.1,207.6 L1263.0,208.7 L1264.9,207.6 L1266.8,208.7 L1268.8,205.4 L1270.7,207.0 L1272.6,207.3 L1274.5,207.8 L1276.4,209.1 L1278.4,207.8 L1280.3,208.7 L1282.2,207.3 L1284.1,209.1 L1286.0,208.3 L1287.9,206.9 L1289.9,206.6 L1291.8,208.4 L1293.7,208.7 L1295.6,207.1 L1297.5,207.1 L1299.5,208.3 L1301.4,208.1 L1303.3,208.1 L1305.2,204.0 L1307.0,193.7 L1307.1,193.3 L1309.0,204.5 L1311.0,206.4 L1312.9,207.7 L1314.8,207.8 L1316.7,208.3 L1318.6,207.8 L1320.6,202.5 L1321.9,195.4 L1322.5,196.6 L1324.4,206.2 L1326.3,207.1 L1328.2,206.8 L1330.1,207.5 L1332.1,208.1 L1334.0,207.6 L1335.9,207.9 L1337.8,208.4 L1339.7,208.8 L1341.6,208.6 L1343.6,207.7 L1345.5,207.6 L1347.4,208.0 L1349.3,206.8 L1351.2,199.7 L1352.9,185.9 L1353.2,188.0 L1355.1,205.5 L1357.0,208.9 L1358.9,207.2 L1360.8,208.1 L1362.7,206.8 L1364.7,207.5 L1366.6,207.0 L1368.5,207.2 L1370.4,209.0 L1372.3,207.2 L1374.3,208.1 L1376.2,208.2 L1378.1,208.0 L1380.0,207.2 L1381.9,207.1 L1383.8,207.0 L1385.8,208.7 L1387.7,208.1 L1389.6,209.2 L1391.5,203.1 L1392.0,200.9 L1393.4,206.4 L1395.4,207.5 L1397.3,207.5 L1399.2,207.0 L1401.1,208.2 L1403.0,208.2 L1404.9,208.2 L1406.9,206.6 L1408.8,207.0 L1410.7,207.8 L1412.6,207.5 L1414.5,207.6 L1416.5,207.6 L1418.4,207.8 L1420.3,207.9 L1422.2,208.5 L1424.1,208.1 L1426.0,206.6 L1428.0,207.3 L1429.9,207.6 L1431.8,207.8 L1433.7,207.6 L1435.6,207.5 L1437.6,208.1 L1439.5,207.6 L1441.4,207.5 L1443.3,208.2 L1445.2,208.2 L1447.1,208.3 L1449.1,208.4 L1451.0,207.1 L1452.9,209.2 L1454.8,207.9 L1456.7,208.1 L1458.7,208.1 L1460.6,207.6 L1462.5,207.0 L1464.4,207.6 L1466.3,207.8 L1468.2,208.1 L1470.2,207.8 L1472.1,207.1 L1474.0,207.9 L1475.9,208.4 L1477.8,208.5 L1479.7,208.4 L1481.7,208.6 L1483.6,207.0 L1485.5,207.5 L1487.4,207.8 L1489.3,206.7 L1491.3,208.1 L1493.2,207.2 L1495.1,207.2 L1497.0,208.7 L1498.9,208.7 L1500.8,208.3 L1502.8,207.1 L1504.7,206.8 L1506.6,208.5 L1508.5,207.0 L1510.4,207.9 L1512.4,207.9 L1514.3,208.0 L1516.2,207.9 L1518.1,208.8 L1520.0,208.3 L1521.9,208.5 L1523.9,207.4 L1525.8,206.3 L1527.7,205.5 L1529.6,206.8 L1531.5,207.1 L1533.5,205.6 L1535.4,205.3 L1536.1,203.2 L1537.3,204.5 L1539.2,206.0 L1541.1,205.6 L1543.0,195.7 L1545.0,194.0 L1545.0,193.3 L1546.9,197.0 L1548.8,207.7" fill="none" stroke="#eab839" stroke-width="1.5" stroke-linejoin="round"/><path d="M975.3,174.1 L977.2,169.0 L979.1,169.9 L981.1,169.9 L983.0,165.5 L984.9,167.3 L986.8,167.7 L988.7,162.4 L990.6,203.5 L992.6,209.0 L994.5,209.1 L996.4,208.6 L998.3,207.8 L1000.2,207.7 L1002.2,207.5 L1004.1,194.1 L1006.0,176.1 L1007.9,178.7 L1009.8,196.4 L1011.7,207.8 L1013.7,208.6 L1015.6,207.7 L1017.5,208.1 L1019.4,200.0 L1021.3,173.9 L1023.3,165.3 L1025.2,168.7 L1027.1,167.5 L1029.0,161.0 L1030.9,168.0 L1032.8,165.3 L1034.8,165.6 L1036.7,165.9 L1038.6,165.7 L1040.5,168.6 L1042.4,168.5 L1044.4,157.5 L1045.7,150.5 L1046.3,150.4 L1048.2,159.1 L1050.1,169.6 L1052.0,165.7 L1053.9,169.8 L1055.9,169.0 L1057.8,167.8 L1059.7,166.8 L1061.6,157.9 L1062.0,161.9 L1063.5,159.7 L1065.4,167.8 L1067.4,168.8 L1069.3,165.2 L1071.2,168.7 L1073.1,170.9 L1075.0,165.7 L1077.0,165.9 L1078.9,169.3 L1080.8,164.7 L1082.7,161.0 L1083.9,160.4 L1084.6,155.2 L1086.5,166.2 L1088.5,170.0 L1090.4,165.7 L1092.3,166.6 L1094.2,164.3 L1096.1,170.6 L1098.1,164.1 L1100.0,164.3 L1101.9,165.0 L1103.8,165.2 L1105.7,163.3 L1107.6,164.9 L1109.6,166.5 L1111.5,169.1 L1113.4,163.8 L1115.3,164.1 L1117.2,166.0 L1119.2,166.4 L1121.1,164.8 L1123.0,173.6 L1124.9,165.9 L1126.8,173.5 L1128.7,166.1 L1130.7,163.8 L1132.6,161.5 L1134.5,168.0 L1136.4,165.5 L1138.3,166.9 L1140.3,172.7 L1142.2,164.7 L1144.1,166.7 L1146.0,166.4 L1147.9,169.2 L1149.8,166.7 L1151.8,166.4 L1153.7,163.1 L1155.6,163.2 L1157.5,146.5 L1157.5,157.0 L1159.4,164.5 L1161.4,166.7 L1163.3,168.7 L1165.2,162.4 L1167.1,164.7 L1169.0,169.9 L1170.9,162.5 L1172.5,153.7 L1172.9,162.0 L1174.8,163.5 L1176.7,157.6 L1178.6,146.7 L1180.5,151.9 L1180.8,154.1 L1182.5,154.5 L1184.4,149.5 L1186.3,163.9 L1188.2,160.2 L1190.1,170.6 L1192.0,166.9 L1194.0,167.0 L1195.9,168.2 L1197.8,173.4 L1199.7,190.6 L1201.6,208.1 L1203.5,208.6 L1205.5,206.8 L1207.4,203.1 L1209.3,189.4 L1211.2,182.3 L1212.0,184.2 L1213.1,181.8 L1215.1,192.2 L1217.0,202.4 L1218.9,197.0 L1219.0,198.8 L1220.8,202.5 L1222.7,208.0 L1224.6,208.9 L1226.6,208.4 L1228.5,207.5 L1230.4,208.5 L1232.3,208.0 L1234.2,207.2 L1236.2,202.4 L1237.2,196.7 L1238.1,200.3 L1240.0,207.6 L1241.9,206.7 L1243.8,208.3 L1245.7,206.6 L1247.7,208.5 L1249.6,208.8 L1251.5,207.9 L1253.4,207.9 L1255.3,207.5 L1257.3,208.0 L1259.2,207.2 L1261.1,206.8 L1263.0,208.1 L1264.9,208.5 L1266.8,207.9 L1268.8,207.1 L1270.7,207.1 L1272.6,207.9 L1274.5,208.3 L1276.4,207.7 L1278.4,207.0 L1280.3,208.1 L1282.2,201.9 L1283.1,198.4 L1284.1,203.3 L1286.0,208.1 L1287.9,206.8 L1289.9,207.6 L1291.8,208.6 L1293.7,207.1 L1295.6,207.9 L1297.5,207.0 L1299.5,207.5 L1301.4,208.1 L1303.3,207.5 L1305.2,208.0 L1307.1,208.2 L1309.0,207.6 L1311.0,207.1 L1312.9,207.6 L1314.8,207.7 L1316.7,199.5 L1317.8,187.5 L1318.6,196.2 L1320.6,207.0 L1322.5,207.4 L1324.4,206.3 L1326.3,208.7 L1328.2,207.7 L1330.1,207.3 L1332.1,207.1 L1334.0,208.7 L1335.9,208.4 L1337.8,207.7 L1339.7,207.0 L1341.6,206.9 L1343.6,208.6 L1345.5,207.6 L1347.4,205.1 L1349.0,195.9 L1349.3,198.3 L1351.2,208.1 L1353.2,208.5 L1355.1,206.9 L1357.0,207.8 L1358.9,207.9 L1360.8,208.2 L1362.7,207.7 L1364.7,208.2 L1366.6,208.3 L1368.5,207.7 L1370.4,207.8 L1372.3,207.4 L1374.3,207.6 L1376.2,206.9 L1378.1,207.7 L1380.0,207.5 L1381.9,207.5 L1383.8,208.2 L1385.8,206.9 L1387.7,208.0 L1389.6,208.7 L1391.5,206.8 L1393.4,207.2 L1395.4,208.0 L1397.3,207.0 L1399.2,207.0 L1401.1,206.3 L1402.9,196.6 L1403.0,196.7 L1404.9,208.3 L1406.9,208.1 L1408.8,208.0 L1410.7,208.2 L1412.6,207.3 L1414.5,208.2 L1416.5,207.3 L1418.4,207.5 L1420.3,208.0 L1422.2,207.5 L1424.1,207.2 L1426.0,206.9 L1428.0,207.8 L1429.9,206.5 L1431.8,200.6 L1433.7,192.4 L1435.6,194.1 L1436.0,193.9 L1437.6,192.4 L1439.5,195.4 L1441.4,207.4 L1443.3,206.9 L1445.2,208.6 L1447.1,207.4 L1449.1,206.4 L1451.0,207.1 L1452.9,207.6 L1454.8,207.3 L1456.7,207.6 L1458.7,199.8 L1459.6,192.3 L1460.6,200.8 L1462.5,207.3 L1464.4,207.5 L1466.3,207.2 L1468.2,207.1 L1470.2,208.4 L1472.1,206.9 L1474.0,207.1 L1475.9,208.4 L1477.8,207.8 L1479.7,208.6 L1481.7,207.8 L1483.6,207.4 L1485.5,208.4 L1487.4,208.2 L1489.3,208.2 L1491.3,208.1 L1493.2,208.2 L1495.1,203.6 L1496.5,187.5 L1497.0,192.8 L1498.9,208.2 L1500.8,207.0 L1502.8,208.0 L1504.7,207.1 L1506.6,208.5 L1508.5,206.7 L1510.4,207.9 L1512.4,202.2 L1512.5,201.0 L1514.3,208.1 L1516.2,208.4 L1518.1,207.5 L1520.0,208.0 L1521.9,207.4 L1523.9,207.6 L1525.8,207.5 L1527.7,207.6 L1529.6,207.2 L1531.5,207.7 L1533.5,206.9 L1535.4,207.0 L1537.3,208.9 L1539.2,208.8 L1541.1,206.6 L1543.0,207.9 L1545.0,207.5 L1546.9,207.7 L1548.8,207.5" fill="none" stroke="#6ed0e0" stroke-width="1.5" stroke-linejoin="round"/></svg>
<svg class="abs" style="left:0;top:0" width="1822" height="704"><line x1="1226.8" y1="86" x2="1226.8" y2="220" stroke="#6c1a1c" stroke-width="2"/></svg>
<div class="cur" style="left:1572.0px;top:84.5px;width:211.5px;text-align:right">current</div>
<div class="leg" style="left:1572px;top:102px;width:223px;height:26px">
<div class="lrow bg" style="width:223px"></div>
<div class="mk" style="left:11px;background:#7eb26d"></div>
<div class="abs" style="left:31px;top:0;line-height:26px">172.16.116.206:9100</div>
<div class="abs" style="right:11px;top:0;line-height:26px;text-align:right">1.6%</div>
</div>
<div class="leg" style="left:1572px;top:128px;width:223px;height:26px">
<div class="lrow" style="width:223px"></div>
<div class="mk" style="left:11px;background:#eab839"></div>
<div class="abs" style="left:31px;top:0;line-height:26px">172.16.116.213:9100</div>
<div class="abs" style="right:11px;top:0;line-height:26px;text-align:right">1.9%</div>
</div>
<div class="leg" style="left:1572px;top:154px;width:223px;height:26px">
<div class="lrow bg" style="width:223px"></div>
<div class="mk" style="left:11px;background:#6ed0e0"></div>
<div class="abs" style="left:31px;top:0;line-height:26px">172.16.117.177:9100</div>
<div class="abs" style="right:11px;top:0;line-height:26px;text-align:right">2.4%</div>
</div>
<div class="panel" style="left:-1px;top:266px;width:904px;height:209px">
<div class="ptitle"><span style="margin-left:16px">Load [1m]</span><svg width="12" height="10" style="margin-left:3.5px;vertical-align:middle;position:relative;top:-1.5px"><path d="M0.5,3 L9.5,3 L5,8 Z" fill="#8e8e8e"/></svg></div>
<div class="rz"></div></div>
<svg class="abs" style="left:0;top:0" width="1822" height="704"><line x1="48.0" y1="306.50" x2="637.6" y2="306.50" stroke="#444446" stroke-width="1.6"/><line x1="48.0" y1="339.98" x2="637.6" y2="339.98" stroke="#3b3b3e" stroke-width="1.6"/><line x1="48.0" y1="373.45" x2="637.6" y2="373.45" stroke="#3b3b3e" stroke-width="1.6"/><line x1="48.0" y1="406.92" x2="637.6" y2="406.92" stroke="#3b3b3e" stroke-width="1.6"/><line x1="48.0" y1="440.40" x2="637.6" y2="440.40" stroke="#3b3b3e" stroke-width="1.6"/><line x1="79.40" y1="306.1" x2="79.40" y2="440.0" stroke="#3a3a3d" stroke-width="1.6"/><line x1="178.20" y1="306.1" x2="178.20" y2="440.0" stroke="#3a3a3d" stroke-width="1.6"/><line x1="276.50" y1="306.1" x2="276.50" y2="440.0" stroke="#3a3a3d" stroke-width="1.6"/><line x1="374.40" y1="306.1" x2="374.40" y2="440.0" stroke="#3a3a3d" stroke-width="1.6"/><line x1="473.50" y1="306.1" x2="473.50" y2="440.0" stroke="#3a3a3d" stroke-width="1.6"/><line x1="571.50" y1="306.1" x2="571.50" y2="440.0" stroke="#3a3a3d" stroke-width="1.6"/></svg>
<div class="lbl yl" style="left:-38.5px;width:80px;top:299.6px">10.0</div>
<div class="lbl yl" style="left:-38.5px;width:80px;top:332.6px">7.5</div>
<div class="lbl yl" style="left:-38.5px;width:80px;top:365.7px">5.0</div>
<div class="lbl yl" style="left:-38.5px;width:80px;top:398.7px">2.5</div>
<div class="lbl yl" style="left:-38.5px;width:80px;top:431.7px">0</div>
<div class="lbl xl" style="left:48.6px;top:446.5px">21:00</div>
<div class="lbl xl" style="left:147.4px;top:446.5px">21:30</div>
<div class="lbl xl" style="left:245.7px;top:446.5px">22:00</div>
<div class="lbl xl" style="left:343.6px;top:446.5px">22:30</div>
<div class="lbl xl" style="left:442.7px;top:446.5px">23:00</div>
<div class="lbl xl" style="left:540.7px;top:446.5px">23:30</div>
<svg class="abs" style="left:0;top:0" width="1822" height="704"><path d="M48.0,424.0 L50.0,421.7 L51.9,424.3 L53.9,421.7 L55.9,421.3 L57.9,419.6 L59.8,415.9 L61.8,416.0 L63.8,415.6 L65.7,417.7 L67.7,419.0 L69.7,422.9 L71.7,427.0 L73.6,433.7 L75.6,439.3 L77.6,421.5 L79.6,407.5 L81.5,411.7 L83.5,413.6 L85.5,418.6 L87.4,426.4 L89.4,432.6 L91.4,434.2 L93.4,428.6 L95.3,426.3 L97.3,422.6 L99.3,425.2 L101.2,426.5 L103.2,427.1 L105.2,424.8 L107.2,420.6 L109.1,421.7 L111.1,419.9 L113.1,421.4 L115.0,418.4 L117.0,418.6 L119.0,416.7 L121.0,413.7 L122.9,410.3 L124.9,407.7 L126.9,408.6 L128.8,408.4 L130.8,408.5 L132.8,407.4 L134.8,409.3 L136.7,414.8 L138.7,419.6 L140.7,420.4 L142.7,412.8 L144.6,408.9 L146.6,403.6 L148.6,402.2 L150.5,403.6 L152.5,406.6 L154.5,407.4 L156.5,405.7 L158.4,410.0 L160.4,409.5 L162.4,408.7 L164.3,407.3 L166.3,406.5 L168.3,406.5 L170.3,406.6 L172.2,408.0 L174.2,404.7 L176.2,405.6 L178.1,412.6 L180.1,413.7 L182.1,415.1 L184.1,417.9 L186.0,426.4 L188.0,425.3 L190.0,427.8 L191.9,428.5 L193.9,431.6 L195.9,427.1 L197.9,423.2 L199.8,419.9 L201.8,420.1 L203.8,418.0 L205.8,419.2 L207.7,420.2 L209.7,420.2 L211.7,416.5 L213.6,417.2 L215.6,417.2 L217.6,420.8 L219.6,420.0 L221.5,420.4 L223.5,424.8 L225.5,424.6 L227.4,424.4 L229.4,418.9 L231.4,416.1 L233.4,417.4 L235.3,416.0 L237.3,410.8 L239.3,412.2 L241.2,418.1 L243.2,426.7 L245.2,432.8 L247.2,429.0 L249.1,430.6 L251.1,428.5 L253.1,427.2 L255.1,423.1 L257.0,420.5 L259.0,420.6 L261.0,424.2 L262.9,431.3 L264.9,434.4 L266.9,431.3 L268.9,421.7 L270.8,415.0 L272.8,408.1 L274.8,402.4 L276.7,402.0 L278.7,412.9 L280.7,423.4 L282.7,434.0 L284.6,436.3 L286.6,435.5 L288.6,430.7 L290.5,431.5 L292.5,431.0 L294.5,433.1 L296.5,431.0 L298.4,433.4 L300.4,430.7 L302.4,427.9 L304.3,422.4 L306.3,423.5 L308.3,422.9 L310.3,424.5 L312.2,423.2 L314.2,426.3 L316.2,426.5 L318.2,428.7 L320.1,429.7 L322.1,430.6 L324.1,431.8 L326.0,431.5 L328.0,430.9 L330.0,429.4 L332.0,422.9 L333.9,418.3 L335.9,415.1 L337.9,417.9 L339.8,423.2 L341.8,425.0 L343.8,429.6 L345.8,429.6 L347.7,431.4 L349.7,429.7 L351.7,427.4 L353.6,428.3 L355.6,423.5 L357.6,426.5 L359.6,423.8 L361.5,431.6 L363.5,429.4 L365.5,433.6 L367.4,430.7 L369.4,432.8 L371.4,429.4 L373.4,429.0 L375.3,428.6 L377.3,430.5 L379.3,428.0 L381.3,429.6 L383.2,429.3 L385.2,433.8 L387.2,432.7 L389.1,434.6 L391.1,434.5 L393.1,433.8 L395.1,433.1 L397.0,431.5 L399.0,433.5 L401.0,429.8 L402.9,430.9 L404.9,426.5 L406.9,428.3 L408.9,428.3 L410.8,429.8 L412.8,428.6 L414.8,425.5 L416.7,424.7 L418.7,425.2 L420.7,430.2 L422.7,431.1 L424.6,432.9 L426.6,430.0 L428.6,429.4 L430.5,430.6 L432.5,428.8 L434.5,426.7 L436.5,424.4 L438.4,427.5 L440.4,429.4 L442.4,430.1 L444.4,427.5 L446.3,427.8 L448.3,431.0 L450.3,432.3 L452.2,437.5 L454.2,436.0 L456.2,435.5 L458.2,434.9 L460.1,435.0 L462.1,437.0 L464.1,434.2 L466.0,432.2 L468.0,430.5 L470.0,432.0 L472.0,434.1 L473.9,434.2 L475.9,434.9 L477.9,435.0 L479.8,434.5 L481.8,434.4 L483.8,434.5 L485.8,433.8 L487.7,432.4 L489.7,434.9 L491.7,438.4 L493.7,434.7 L495.6,425.2 L497.6,424.4 L499.6,426.7 L501.5,430.7 L503.5,429.5 L505.5,434.2 L507.5,433.8 L509.4,433.8 L511.4,430.9 L513.4,435.8 L515.3,437.5 L517.3,437.3 L519.3,434.8 L521.3,433.2 L523.2,433.7 L525.2,431.4 L527.2,430.6 L529.1,432.1 L531.1,435.1 L533.1,435.5 L535.1,434.4 L537.0,430.6 L539.0,432.4 L541.0,431.0 L542.9,432.5 L544.9,433.6 L546.9,431.7 L548.9,433.3 L550.8,432.5 L552.8,436.1 L554.8,438.9 L556.8,439.3 L558.7,436.0 L560.7,433.1 L562.7,431.1 L564.6,433.6 L566.6,432.3 L568.6,433.2 L570.6,434.0 L572.5,434.6 L574.5,431.2 L576.5,430.4 L578.4,427.8 L580.4,430.1 L582.4,431.2 L584.4,436.9 L586.3,436.6 L588.3,434.8 L590.3,432.6 L592.2,432.9 L594.2,435.9 L596.2,436.6 L598.2,437.1 L600.1,435.4 L602.1,432.4 L604.1,430.6 L606.0,428.7 L608.0,428.6 L610.0,430.4 L612.0,429.6 L613.9,431.7 L615.9,433.3 L617.9,436.9 L619.9,437.2 L621.8,437.6 L623.8,432.2 L625.8,432.2 L627.7,427.7 L629.7,434.3 L631.7,434.0 L633.7,435.1 L635.6,434.3 L637.6,434.7" fill="none" stroke="#7eb26d" stroke-width="1.3" stroke-linejoin="round"/><path d="M48.0,387.4 L50.0,393.4 L51.9,400.2 L53.9,405.6 L55.9,403.2 L57.9,403.6 L59.8,410.2 L61.8,418.9 L63.8,423.1 L65.7,421.6 L67.7,422.9 L69.7,426.6 L71.7,432.2 L73.6,434.8 L75.6,432.8 L77.6,419.7 L79.6,406.9 L81.5,402.9 L83.5,409.6 L85.5,414.7 L87.4,426.8 L89.4,427.0 L91.4,429.6 L93.4,425.3 L95.3,424.1 L97.3,418.6 L99.3,414.6 L101.2,408.1 L103.2,402.9 L105.2,394.1 L107.2,389.5 L109.1,395.1 L111.1,398.1 L113.1,406.7 L115.0,401.6 L117.0,404.0 L119.0,402.9 L121.0,405.1 L122.9,406.7 L124.9,385.1 L126.9,365.7 L127.9,345.4 L128.8,357.5 L130.8,377.4 L132.8,411.3 L134.8,414.5 L136.7,416.8 L138.7,408.6 L140.7,401.4 L142.7,397.7 L144.6,401.7 L146.6,398.0 L148.6,401.6 L150.5,401.9 L152.5,405.6 L154.5,405.2 L156.5,401.4 L158.4,399.6 L160.4,396.4 L162.4,395.6 L164.3,399.0 L166.3,397.0 L168.3,385.2 L169.9,371.0 L170.3,374.0 L172.2,393.6 L174.2,410.9 L176.2,411.1 L178.1,402.9 L180.1,406.1 L182.1,409.2 L184.1,413.3 L186.0,408.4 L188.0,411.8 L190.0,406.5 L191.9,377.7 L193.9,334.1 L194.1,337.3 L195.9,364.5 L197.9,396.5 L199.8,395.3 L201.8,395.0 L203.8,402.0 L205.8,405.0 L207.7,408.6 L209.7,398.2 L211.7,399.8 L213.6,403.0 L215.6,403.8 L217.6,381.7 L219.6,357.8 L220.0,356.7 L221.5,376.2 L223.5,393.4 L225.5,391.4 L227.4,367.3 L228.2,359.5 L229.4,368.8 L231.4,387.6 L233.4,385.9 L235.3,394.2 L237.3,395.7 L239.3,397.3 L241.2,394.4 L243.2,392.9 L245.2,394.2 L247.2,393.7 L249.1,394.2 L251.1,391.8 L253.1,386.1 L255.1,394.4 L257.0,396.2 L259.0,407.4 L261.0,402.7 L262.9,395.3 L264.9,395.8 L266.9,393.2 L268.9,395.5 L270.8,386.8 L272.8,379.8 L274.8,375.6 L276.0,365.4 L276.7,378.9 L278.7,401.9 L280.7,417.0 L282.7,428.0 L284.6,428.4 L286.6,431.5 L288.6,433.1 L290.5,431.5 L292.5,430.1 L294.5,432.0 L296.5,437.1 L298.4,433.9 L300.4,431.3 L302.4,428.9 L304.3,435.3 L306.3,437.3 L308.3,435.5 L310.3,436.8 L312.2,432.2 L314.2,430.3 L316.2,426.4 L318.2,428.7 L320.1,429.2 L322.1,426.2 L324.1,426.7 L326.0,424.4 L328.0,423.4 L330.0,424.4 L332.0,428.3 L333.9,433.7 L335.9,433.5 L337.9,434.2 L339.8,432.2 L341.8,431.1 L343.8,428.3 L345.8,430.9 L347.7,429.2 L349.7,431.2 L351.7,428.9 L353.6,432.5 L355.6,436.2 L357.6,435.5 L359.6,438.3 L361.5,431.4 L363.5,431.9 L365.5,424.6 L367.4,425.6 L369.4,424.2 L371.4,424.6 L373.4,426.2 L375.3,424.3 L377.3,427.8 L379.3,427.1 L381.3,432.1 L383.2,430.6 L385.2,429.7 L387.2,429.4 L389.1,433.5 L391.1,435.1 L393.1,433.1 L395.1,430.6 L397.0,432.4 L399.0,431.8 L401.0,428.8 L401.8,431.2 L402.9,432.8 L404.9,432.3 L406.9,432.3 L408.9,431.5 L410.8,431.0 L412.8,426.6 L414.8,424.1 L416.7,428.2 L418.7,432.7 L420.7,428.4 L422.7,427.5 L424.6,424.0 L426.6,426.8 L428.6,425.7 L430.5,426.2 L432.5,432.3 L434.5,434.4 L436.5,434.9 L438.4,434.0 L440.4,435.6 L442.4,437.5 L444.4,436.3 L446.3,435.7 L448.3,432.5 L450.3,430.0 L452.2,428.0 L454.2,428.8 L456.2,427.6 L458.2,426.8 L460.1,430.1 L462.1,435.2 L464.1,436.2 L466.0,434.8 L468.0,431.6 L470.0,435.9 L472.0,438.1 L473.9,437.6 L475.9,432.4 L477.9,431.7 L479.8,433.7 L481.8,432.0 L483.8,430.9 L485.8,433.7 L487.7,438.7 L489.7,438.7 L491.7,438.7 L493.7,438.6 L495.6,438.7 L497.6,435.7 L499.6,429.6 L501.5,428.7 L503.5,426.8 L505.5,429.2 L507.5,432.0 L509.4,433.7 L511.4,436.3 L513.4,431.9 L515.3,430.4 L517.3,431.3 L519.3,429.8 L521.3,432.4 L523.2,431.7 L525.2,434.2 L527.2,428.3 L529.1,428.1 L531.1,428.8 L533.1,429.6 L535.1,424.9 L537.0,419.6 L539.0,422.1 L539.3,426.7 L541.0,426.2 L542.9,428.7 L544.9,430.7 L546.9,431.6 L548.9,431.5 L550.8,430.0 L552.8,427.5 L554.8,425.0 L556.8,422.1 L558.7,425.5 L560.7,424.5 L562.7,427.6 L564.6,426.4 L566.6,426.9 L568.6,427.5 L570.6,432.4 L572.5,433.6 L574.5,432.9 L576.5,428.7 L578.4,431.2 L580.4,429.7 L582.4,428.9 L584.4,422.3 L586.3,419.5 L588.3,420.8 L590.3,422.8 L592.2,428.2 L594.2,426.4 L596.2,429.3 L598.2,424.9 L600.1,426.8 L602.1,427.6 L604.1,432.1 L606.0,430.0 L608.0,429.4 L610.0,426.2 L612.0,427.9 L613.9,432.6 L615.9,432.8 L617.9,434.7 L619.9,429.2 L621.8,429.0 L623.8,430.5 L625.8,430.4 L627.7,429.9 L629.7,423.4 L631.7,418.9 L633.7,418.6 L635.6,418.3 L637.6,419.7" fill="none" stroke="#eab839" stroke-width="1.3" stroke-linejoin="round"/><path d="M48.0,404.2 L50.0,399.2 L51.9,401.6 L53.9,403.3 L55.9,411.4 L57.9,414.7 L59.8,417.8 L61.8,418.7 L63.8,419.6 L65.7,418.8 L67.7,423.7 L69.7,429.9 L71.7,437.8 L73.6,438.7 L75.6,438.7 L77.6,434.1 L79.6,421.8 L81.5,404.3 L83.5,407.6 L85.5,413.9 L87.4,421.1 L89.4,423.9 L91.4,432.1 L93.4,420.2 L95.3,412.0 L97.3,394.4 L99.3,400.8 L101.2,400.6 L103.2,408.9 L105.2,408.9 L107.2,390.2 L109.1,371.9 L109.9,360.0 L111.1,373.9 L113.1,390.3 L115.0,398.7 L117.0,399.0 L119.0,399.1 L121.0,405.1 L122.9,401.8 L124.9,392.4 L125.0,383.5 L126.9,394.3 L128.8,405.6 L130.8,413.5 L132.8,419.5 L134.8,414.2 L136.7,404.7 L138.7,385.9 L139.1,388.3 L140.7,398.1 L142.7,408.4 L144.6,399.7 L146.6,404.1 L148.6,403.0 L150.5,407.9 L152.5,407.3 L154.5,396.8 L156.5,388.7 L158.4,386.6 L160.4,392.0 L162.4,402.5 L164.3,395.6 L166.3,394.1 L168.3,389.8 L170.3,395.4 L172.2,398.5 L174.2,396.3 L176.2,396.7 L178.1,390.3 L180.1,374.2 L181.0,366.3 L182.1,371.8 L184.1,389.9 L186.0,395.6 L188.0,401.1 L190.0,400.2 L191.9,399.9 L193.9,393.7 L195.9,390.4 L197.9,387.7 L199.8,388.6 L201.8,377.0 L203.8,363.2 L203.9,359.2 L205.8,369.2 L207.7,382.3 L209.7,384.7 L211.7,387.4 L213.6,379.3 L215.6,375.5 L217.6,379.8 L219.6,384.9 L221.5,387.6 L223.5,364.8 L225.5,338.8 L225.9,337.5 L227.4,363.5 L229.4,397.5 L231.4,378.3 L233.1,356.0 L233.4,356.4 L235.3,383.5 L237.3,393.2 L239.3,388.4 L241.2,390.4 L243.2,393.8 L245.2,392.4 L247.2,390.2 L249.1,394.3 L251.1,403.1 L253.1,406.5 L255.1,404.7 L257.0,406.0 L259.0,409.4 L261.0,413.4 L262.9,414.8 L264.9,416.7 L266.9,412.0 L268.9,412.2 L270.8,401.9 L272.8,393.0 L274.8,395.1 L276.7,402.5 L278.7,412.1 L280.7,416.6 L282.7,425.6 L284.6,425.6 L286.6,423.1 L288.6,424.8 L290.5,422.7 L292.5,425.0 L294.5,424.3 L296.5,426.2 L298.4,423.7 L300.4,420.5 L302.4,417.2 L304.3,416.8 L306.3,415.8 L308.3,417.3 L310.3,421.6 L312.2,421.2 L314.2,425.7 L316.2,427.3 L318.2,430.6 L320.1,432.0 L322.1,431.5 L324.1,431.1 L326.0,430.8 L328.0,434.9 L330.0,438.7 L332.0,438.4 L333.9,435.5 L335.9,432.1 L337.9,433.3 L339.8,434.3 L341.8,429.7 L343.8,429.3 L345.8,427.3 L347.7,433.0 L349.7,431.0 L351.7,429.0 L353.6,423.5 L355.6,423.5 L357.6,426.8 L359.6,432.8 L361.5,431.7 L363.5,427.4 L365.5,420.8 L367.4,420.1 L368.0,416.3 L369.4,417.8 L371.4,423.7 L373.4,430.2 L375.3,437.7 L377.3,434.2 L379.3,433.2 L381.3,433.1 L383.2,432.0 L385.2,431.6 L387.2,430.2 L389.1,433.3 L391.1,434.6 L393.1,432.2 L395.1,430.8 L397.0,430.8 L399.0,430.1 L401.0,436.2 L402.9,435.7 L404.9,435.2 L406.9,427.5 L408.9,425.0 L410.8,428.7 L412.8,434.4 L414.8,434.9 L416.7,424.5 L418.7,417.0 L420.1,415.6 L420.7,425.2 L422.7,428.7 L424.6,431.3 L426.6,429.8 L428.6,429.7 L430.5,433.8 L432.5,435.2 L434.5,433.9 L436.5,430.1 L438.4,432.5 L440.4,436.7 L442.4,438.3 L444.4,430.9 L446.3,425.4 L448.3,423.8 L450.3,425.6 L452.2,431.0 L454.2,430.8 L456.2,435.4 L458.2,433.5 L460.1,430.9 L462.1,424.9 L464.1,422.9 L466.0,424.6 L468.0,428.6 L470.0,430.7 L472.0,429.7 L473.9,431.9 L475.9,430.9 L477.9,430.7 L479.8,426.8 L481.8,429.1 L483.8,429.2 L485.8,430.6 L487.7,430.6 L489.7,435.8 L491.7,437.6 L493.7,433.9 L495.6,430.3 L497.6,424.2 L499.6,424.9 L501.5,425.8 L503.5,430.5 L505.5,426.7 L507.5,420.1 L509.4,416.3 L509.9,415.5 L511.4,413.3 L513.4,414.9 L515.3,419.5 L517.3,429.1 L519.3,434.9 L521.3,434.9 L523.2,434.7 L525.2,431.0 L527.2,432.5 L529.1,430.0 L531.1,427.6 L533.1,427.9 L535.1,432.5 L537.0,434.2 L539.0,429.7 L541.0,425.9 L542.9,425.5 L544.9,431.5 L546.9,433.5 L548.9,433.3 L550.8,429.5 L552.8,428.4 L554.8,428.4 L556.8,425.7 L558.7,422.2 L560.7,421.8 L562.3,424.0 L562.7,424.5 L564.6,426.5 L566.6,427.1 L568.6,428.4 L570.6,429.8 L572.5,430.0 L574.5,431.0 L576.5,431.5 L578.4,435.5 L580.4,438.1 L582.4,434.5 L584.4,431.1 L586.3,430.5 L588.3,436.2 L590.3,432.4 L592.2,435.6 L594.2,433.0 L596.2,436.0 L598.2,428.1 L600.1,426.4 L602.1,427.6 L604.1,434.9 L606.0,435.8 L608.0,436.9 L610.0,435.0 L612.0,434.3 L613.9,429.1 L615.9,430.1 L617.9,427.3 L619.9,434.0 L621.8,427.5 L623.8,431.8 L625.8,428.5 L627.7,433.6 L629.7,431.8 L631.7,431.1 L633.7,430.8 L635.6,432.8 L637.6,433.2" fill="none" stroke="#6ed0e0" stroke-width="1.3" stroke-linejoin="round"/></svg>
<svg class="abs" style="left:0;top:0" width="1822" height="704"><line x1="307.4" y1="306" x2="307.4" y2="440" stroke="#6c1a1c" stroke-width="2"/></svg>
<div class="cur" style="left:660.0px;top:304.5px;width:208.2px;text-align:right">current</div>
<div class="leg" style="left:660px;top:322px;width:219px;height:26px">
<div class="lrow bg" style="width:219px"></div>
<div class="mk" style="left:11px;background:#7eb26d"></div>
<div class="abs" style="left:32px;top:0;line-height:26px">172.16.116.206:9100</div>
<div class="abs" style="right:10px;top:0;line-height:26px;text-align:right">0.6</div>
</div>
<div class="leg" style="left:660px;top:348px;width:219px;height:26px">
<div class="lrow" style="width:219px"></div>
<div class="mk" style="left:11px;background:#eab839"></div>
<div class="abs" style="left:32px;top:0;line-height:26px">172.16.116.213:9100</div>
<div class="abs" style="right:10px;top:0;line-height:26px;text-align:right">1.7</div>
</div>
<div class="leg" style="left:660px;top:374px;width:219px;height:26px">
<div class="lrow bg" style="width:219px"></div>
<div class="mk" style="left:11px;background:#6ed0e0"></div>
<div class="abs" style="left:32px;top:0;line-height:26px">172.16.117.177:9100</div>
<div class="abs" style="right:10px;top:0;line-height:26px;text-align:right">0.4</div>
</div>
<div class="abs" style="left:334px;top:320px;width:205px;height:97px;background:#141414;border-radius:4px"></div>
<div class="abs" style="left:334px;top:327.5px;width:205px;text-align:center;font-size:13.3px;font-weight:bold;color:#e9e9e9;line-height:18px">2019-12-25 22:09:00</div>
<div class="abs" style="left:347px;top:357.4px;width:11px;height:3px;background:#7eb26d"></div>
<div class="abs" style="left:361px;top:350.6px;font-size:13.25px;color:#d8d9da;line-height:18px;white-space:nowrap">172.16.116.206:9100:</div>
<div class="abs" style="left:480px;width:48px;text-align:right;top:350.6px;font-size:13px;font-weight:bold;color:#e9e9e9;line-height:18px">0.8</div>
<div class="abs" style="left:347px;top:376.5px;width:11px;height:3px;background:#eab839"></div>
<div class="abs" style="left:361px;top:369.7px;font-size:13.25px;color:#d8d9da;line-height:18px;white-space:nowrap">172.16.116.213:9100:</div>
<div class="abs" style="left:480px;width:48px;text-align:right;top:369.7px;font-size:13px;font-weight:bold;color:#e9e9e9;line-height:18px">0.3</div>
<div class="abs" style="left:347px;top:395.5px;width:11px;height:3px;background:#6ed0e0"></div>
<div class="abs" style="left:361px;top:388.7px;font-size:13.25px;color:#d8d9da;line-height:18px;white-space:nowrap">172.16.117.177:9100:</div>
<div class="abs" style="left:480px;width:48px;text-align:right;top:388.7px;font-size:13px;font-weight:bold;color:#e9e9e9;line-height:18px">1.6</div>
<div class="panel" style="left:914px;top:266px;width:904px;height:209px">
<div class="ptitle">Memory Available</div>
<div class="rz"></div></div>
<svg class="abs" style="left:0;top:0" width="1822" height="704"><line x1="981.8" y1="306.50" x2="1526.2" y2="306.50" stroke="#444446" stroke-width="1.6"/><line x1="981.8" y1="351.13" x2="1526.2" y2="351.13" stroke="#3b3b3e" stroke-width="1.6"/><line x1="981.8" y1="395.77" x2="1526.2" y2="395.77" stroke="#3b3b3e" stroke-width="1.6"/><line x1="981.8" y1="440.40" x2="1526.2" y2="440.40" stroke="#3b3b3e" stroke-width="1.6"/><line x1="1010.60" y1="306.1" x2="1010.60" y2="440.0" stroke="#3a3a3d" stroke-width="1.6"/><line x1="1102.00" y1="306.1" x2="1102.00" y2="440.0" stroke="#3a3a3d" stroke-width="1.6"/><line x1="1192.60" y1="306.1" x2="1192.60" y2="440.0" stroke="#3a3a3d" stroke-width="1.6"/><line x1="1283.00" y1="306.1" x2="1283.00" y2="440.0" stroke="#3a3a3d" stroke-width="1.6"/><line x1="1374.00" y1="306.1" x2="1374.00" y2="440.0" stroke="#3a3a3d" stroke-width="1.6"/><line x1="1464.70" y1="306.1" x2="1464.70" y2="440.0" stroke="#3a3a3d" stroke-width="1.6"/></svg>
<div class="lbl yl" style="left:892.8px;width:80px;top:299.6px">150 GB</div>
<div class="lbl yl" style="left:892.8px;width:80px;top:343.6px">100 GB</div>
<div class="lbl yl" style="left:892.8px;width:80px;top:387.7px">50 GB</div>
<div class="lbl yl" style="left:892.8px;width:80px;top:431.7px">0 B</div>
<div class="lbl xl" style="left:979.8px;top:446.5px">21:00</div>
<div class="lbl xl" style="left:1071.2px;top:446.5px">21:30</div>
<div class="lbl xl" style="left:1161.8px;top:446.5px">22:00</div>
<div class="lbl xl" style="left:1252.2px;top:446.5px">22:30</div>
<div class="lbl xl" style="left:1343.2px;top:446.5px">23:00</div>
<div class="lbl xl" style="left:1433.9px;top:446.5px">23:30</div>
<svg class="abs" style="left:0;top:0" width="1822" height="704"><path d="M981.8,402.6 L984.1,402.6 L986.4,402.5 L988.6,402.6 L990.9,402.7 L993.2,402.8 L995.5,402.5 L997.7,402.6 L1000.0,402.7 L1002.3,402.8 L1004.6,402.9 L1006.9,402.7 L1009.1,402.9 L1011.4,404.6 L1013.7,406.2 L1016.0,407.0 L1018.2,407.0 L1020.5,406.9 L1022.8,407.1 L1025.1,407.1 L1027.4,407.2 L1029.6,407.2 L1031.9,407.3 L1034.2,407.0 L1036.5,407.0 L1038.7,407.2 L1041.0,407.2 L1043.3,407.2 L1045.6,406.9 L1047.9,407.1 L1050.1,407.3 L1052.4,407.2 L1054.7,407.1 L1057.0,407.4 L1059.2,407.2 L1061.5,407.3 L1063.8,407.3 L1066.1,407.3 L1068.4,407.3 L1070.6,407.4 L1072.9,407.5 L1075.2,407.4 L1077.5,407.5 L1079.7,407.5 L1082.0,407.3 L1084.3,407.5 L1086.6,407.6 L1088.9,407.8 L1091.1,407.6 L1093.4,407.7 L1095.7,407.7 L1098.0,407.7 L1100.2,407.7 L1102.5,407.8 L1104.8,407.9 L1107.1,407.9 L1109.4,408.0 L1111.6,408.1 L1113.9,408.1 L1116.2,408.0 L1118.5,408.3 L1120.7,408.2 L1123.0,408.2 L1125.3,408.2 L1127.6,408.3 L1129.9,408.3 L1132.1,408.3 L1134.4,408.4 L1136.7,408.4 L1139.0,408.4 L1141.2,408.5 L1143.5,408.5 L1145.8,408.6 L1148.1,408.3 L1150.4,408.6 L1152.6,408.7 L1154.9,408.8 L1157.2,408.7 L1159.5,408.7 L1161.7,408.7 L1164.0,408.9 L1166.3,408.9 L1168.6,408.9 L1170.9,408.7 L1173.1,408.9 L1175.4,408.8 L1177.7,408.6 L1180.0,409.0 L1182.2,408.8 L1184.5,408.8 L1186.8,409.0 L1189.1,408.7 L1191.4,408.8 L1193.6,408.8 L1195.9,408.8 L1198.2,408.7 L1200.5,408.9 L1202.7,408.9 L1205.0,409.0 L1207.3,409.0 L1209.6,408.7 L1211.9,408.9 L1214.1,409.0 L1216.4,408.8 L1218.7,408.7 L1221.0,409.0 L1223.2,408.9 L1225.5,409.0 L1227.8,409.1 L1230.1,408.9 L1232.4,409.0 L1234.6,409.0 L1236.9,408.9 L1239.2,408.9 L1241.5,408.9 L1243.7,408.8 L1246.0,409.0 L1248.3,409.0 L1250.6,408.9 L1252.9,408.7 L1255.1,408.7 L1257.4,408.9 L1259.7,409.0 L1262.0,409.1 L1264.3,408.8 L1266.5,409.0 L1268.8,408.7 L1271.1,409.0 L1273.4,409.2 L1275.6,408.9 L1277.9,409.0 L1280.2,409.1 L1282.5,409.0 L1284.8,409.0 L1287.0,409.0 L1289.3,409.2 L1291.6,409.0 L1293.9,409.0 L1296.1,409.2 L1298.4,408.9 L1300.7,409.1 L1303.0,409.3 L1305.3,408.9 L1307.5,409.1 L1309.8,409.1 L1312.1,409.1 L1314.4,408.9 L1316.6,409.1 L1318.9,409.2 L1321.2,409.2 L1323.5,409.0 L1325.8,409.0 L1328.0,409.2 L1330.3,409.0 L1332.6,409.2 L1334.9,409.1 L1337.1,409.1 L1339.4,409.1 L1341.7,409.1 L1344.0,409.1 L1346.3,409.2 L1348.5,409.1 L1350.8,409.1 L1353.1,409.3 L1355.4,409.3 L1357.6,409.1 L1359.9,409.2 L1362.2,409.2 L1364.5,409.1 L1366.8,409.2 L1369.0,409.3 L1371.3,409.2 L1373.6,409.3 L1375.9,409.0 L1378.1,409.1 L1380.4,409.2 L1382.7,409.3 L1385.0,409.2 L1387.3,409.3 L1389.5,409.3 L1391.8,409.2 L1394.1,409.3 L1396.4,409.2 L1398.6,409.3 L1400.9,409.1 L1403.2,409.1 L1405.5,409.5 L1407.8,409.5 L1410.0,409.4 L1412.3,409.1 L1414.6,409.2 L1416.9,409.3 L1419.1,409.3 L1421.4,409.5 L1423.7,409.3 L1426.0,409.4 L1428.3,409.3 L1430.5,409.4 L1432.8,409.4 L1435.1,409.4 L1437.4,409.3 L1439.6,409.2 L1441.9,409.6 L1444.2,409.3 L1446.5,409.4 L1448.8,409.2 L1451.0,409.3 L1453.3,409.5 L1455.6,409.4 L1457.9,409.3 L1460.1,409.2 L1462.4,409.5 L1464.7,409.5 L1467.0,409.4 L1469.3,409.3 L1471.5,409.3 L1473.8,409.4 L1476.1,409.4 L1478.4,409.4 L1480.6,409.4 L1482.9,409.6 L1485.2,409.4 L1487.5,409.4 L1489.8,409.4 L1492.0,409.5 L1494.3,409.5 L1496.6,409.4 L1498.9,409.4 L1501.1,409.3 L1503.4,409.6 L1505.7,409.6 L1508.0,409.5 L1510.3,409.3 L1512.5,409.8 L1514.8,409.4 L1517.1,409.6 L1519.4,409.7 L1521.6,409.5 L1523.9,409.5 L1526.2,409.9" fill="none" stroke="#7eb26d" stroke-width="1.8" stroke-linejoin="round"/><path d="M981.8,337.5 L984.1,337.5 L986.4,337.6 L988.6,337.4 L990.9,337.4 L993.2,337.4 L995.5,337.4 L997.7,337.2 L1000.0,337.3 L1002.3,337.3 L1004.6,337.4 L1006.9,337.4 L1009.1,337.5 L1011.4,338.0 L1013.7,338.9 L1016.0,338.4 L1018.2,338.6 L1020.5,338.6 L1022.8,338.5 L1025.1,338.6 L1027.4,338.6 L1029.6,338.5 L1031.9,338.8 L1034.2,338.4 L1036.5,338.6 L1038.7,338.5 L1041.0,338.7 L1043.3,338.6 L1045.6,338.4 L1047.9,338.6 L1050.1,338.6 L1052.4,338.5 L1054.7,338.4 L1057.0,338.8 L1059.2,338.4 L1061.5,338.5 L1063.8,338.5 L1066.1,338.7 L1068.4,338.5 L1070.6,338.4 L1072.9,338.6 L1075.2,338.6 L1077.5,338.6 L1079.7,338.6 L1082.0,338.5 L1084.3,338.5 L1086.6,338.6 L1088.9,338.5 L1091.1,338.7 L1093.4,338.7 L1095.7,338.3 L1098.0,338.6 L1100.2,338.4 L1102.5,338.6 L1104.8,338.6 L1107.1,338.5 L1109.4,338.6 L1111.6,338.6 L1113.9,338.6 L1116.2,338.6 L1118.5,338.5 L1120.7,338.3 L1123.0,338.7 L1125.3,338.6 L1127.6,338.4 L1129.9,338.5 L1132.1,338.4 L1134.4,338.6 L1136.7,338.5 L1139.0,338.5 L1141.2,338.7 L1143.5,338.5 L1145.8,338.7 L1148.1,338.5 L1150.4,338.6 L1152.6,338.5 L1154.9,338.3 L1157.2,338.3 L1159.5,338.5 L1161.7,338.5 L1164.0,338.6 L1166.3,338.4 L1168.6,338.4 L1170.9,338.6 L1173.1,338.7 L1175.4,338.5 L1177.7,338.5 L1180.0,338.4 L1182.2,338.6 L1184.5,338.6 L1186.8,338.5 L1189.1,338.5 L1191.4,338.4 L1193.6,338.4 L1195.9,338.6 L1198.2,338.8 L1200.5,338.5 L1202.7,338.6 L1205.0,338.5 L1207.3,338.8 L1209.6,338.5 L1211.9,338.5 L1214.1,338.5 L1216.4,338.4 L1218.7,338.5 L1221.0,338.5 L1223.2,338.3 L1225.5,338.3 L1227.8,338.3 L1230.1,338.4 L1232.4,338.5 L1234.6,338.4 L1236.9,338.4 L1239.2,338.6 L1241.5,338.4 L1243.7,338.4 L1246.0,338.5 L1248.3,338.6 L1250.6,338.4 L1252.9,338.6 L1255.1,338.6 L1257.4,338.5 L1259.7,338.6 L1262.0,338.4 L1264.3,338.5 L1266.5,338.4 L1268.8,338.3 L1271.1,338.3 L1273.4,338.5 L1275.6,338.7 L1277.9,338.5 L1280.2,338.6 L1282.5,338.3 L1284.8,338.3 L1287.0,338.4 L1289.3,338.4 L1291.6,338.4 L1293.9,338.4 L1296.1,338.5 L1298.4,338.3 L1300.7,338.5 L1303.0,338.6 L1305.3,338.4 L1307.5,338.3 L1309.8,338.5 L1312.1,338.6 L1314.4,338.3 L1316.6,338.4 L1318.9,338.4 L1321.2,338.5 L1323.5,338.4 L1325.8,338.2 L1328.0,338.5 L1330.3,338.3 L1332.6,338.4 L1334.9,338.5 L1337.1,338.4 L1339.4,338.4 L1341.7,338.5 L1344.0,338.3 L1346.3,338.5 L1348.5,338.3 L1350.8,338.3 L1353.1,338.4 L1355.4,338.5 L1357.6,338.5 L1359.9,338.7 L1362.2,338.4 L1364.5,338.4 L1366.8,338.3 L1369.0,338.3 L1371.3,338.4 L1373.6,338.4 L1375.9,338.3 L1378.1,338.4 L1380.4,338.4 L1382.7,338.5 L1385.0,338.3 L1387.3,338.5 L1389.5,338.2 L1391.8,338.5 L1394.1,338.4 L1396.4,338.4 L1398.6,338.5 L1400.9,338.6 L1403.2,338.5 L1405.5,338.5 L1407.8,338.4 L1410.0,338.3 L1412.3,338.3 L1414.6,338.3 L1416.9,338.3 L1419.1,338.6 L1421.4,338.4 L1423.7,338.4 L1426.0,338.5 L1428.3,338.3 L1430.5,338.4 L1432.8,338.5 L1435.1,338.3 L1437.4,338.4 L1439.6,338.4 L1441.9,338.5 L1444.2,338.3 L1446.5,338.4 L1448.8,338.2 L1451.0,338.1 L1453.3,338.3 L1455.6,338.4 L1457.9,338.4 L1460.1,338.2 L1462.4,338.4 L1464.7,338.3 L1467.0,338.3 L1469.3,338.7 L1471.5,338.3 L1473.8,338.3 L1476.1,338.3 L1478.4,338.4 L1480.6,338.3 L1482.9,338.5 L1485.2,338.3 L1487.5,338.4 L1489.8,338.3 L1492.0,338.2 L1494.3,338.3 L1496.6,338.5 L1498.9,338.3 L1501.1,338.5 L1503.4,338.3 L1505.7,338.2 L1508.0,338.5 L1510.3,338.3 L1512.5,338.4 L1514.8,338.3 L1517.1,338.3 L1519.4,338.3 L1521.6,338.4 L1523.9,338.5 L1526.2,338.4" fill="none" stroke="#eab839" stroke-width="1.8" stroke-linejoin="round"/><path d="M981.8,339.8 L984.1,339.8 L986.4,340.0 L988.6,339.7 L990.9,340.2 L993.2,340.1 L995.5,340.0 L997.7,340.1 L1000.0,340.1 L1002.3,340.4 L1004.6,340.0 L1006.9,340.4 L1009.1,340.4 L1011.4,341.1 L1013.7,341.8 L1016.0,342.0 L1018.2,341.7 L1020.5,342.0 L1022.8,342.0 L1025.1,342.4 L1027.4,342.1 L1029.6,342.3 L1031.9,342.3 L1034.2,342.4 L1036.5,342.5 L1038.7,342.6 L1041.0,342.6 L1043.3,342.7 L1045.6,342.8 L1047.9,342.9 L1050.1,343.1 L1052.4,343.1 L1054.7,343.4 L1057.0,343.1 L1059.2,343.3 L1061.5,343.3 L1063.8,343.7 L1066.1,343.9 L1068.4,344.1 L1070.6,344.1 L1072.9,344.1 L1075.2,344.2 L1077.5,344.3 L1079.7,344.3 L1082.0,344.8 L1084.3,344.3 L1086.6,344.7 L1088.9,344.7 L1091.1,345.1 L1093.4,344.9 L1095.7,345.3 L1098.0,345.1 L1100.2,345.2 L1102.5,345.3 L1104.8,345.5 L1107.1,345.6 L1109.4,345.7 L1111.6,345.6 L1113.9,345.9 L1116.2,345.9 L1118.5,345.7 L1120.7,346.2 L1123.0,346.4 L1125.3,346.7 L1127.6,346.8 L1129.9,346.6 L1132.1,346.6 L1134.4,346.9 L1136.7,347.0 L1139.0,347.0 L1141.2,347.1 L1143.5,347.1 L1145.8,347.3 L1148.1,347.5 L1150.4,347.4 L1152.6,347.7 L1154.9,347.9 L1157.2,347.9 L1159.5,347.9 L1161.7,348.0 L1164.0,348.1 L1166.3,348.1 L1168.6,347.9 L1170.9,348.2 L1173.1,348.6 L1175.4,348.5 L1177.7,348.4 L1180.0,348.6 L1182.2,348.2 L1184.5,348.6 L1186.8,348.7 L1189.1,348.6 L1191.4,348.8 L1193.6,348.7 L1195.9,348.8 L1198.2,348.7 L1200.5,348.9 L1202.7,349.2 L1205.0,348.8 L1207.3,348.6 L1209.6,349.0 L1211.9,348.9 L1214.1,348.7 L1216.4,348.9 L1218.7,348.9 L1221.0,348.9 L1223.2,348.8 L1225.5,348.9 L1227.8,348.6 L1230.1,348.9 L1232.4,349.0 L1234.6,349.1 L1236.9,348.9 L1239.2,349.1 L1241.5,348.9 L1243.7,348.9 L1246.0,348.6 L1248.3,349.1 L1250.6,349.0 L1252.9,348.9 L1255.1,349.3 L1257.4,348.9 L1259.7,348.8 L1262.0,349.0 L1264.3,349.1 L1266.5,348.9 L1268.8,349.0 L1271.1,349.0 L1273.4,349.0 L1275.6,349.2 L1277.9,348.8 L1280.2,349.2 L1282.5,349.1 L1284.8,349.2 L1287.0,349.5 L1289.3,349.4 L1291.6,349.2 L1293.9,349.1 L1296.1,349.0 L1298.4,348.8 L1300.7,349.1 L1303.0,349.2 L1305.3,349.3 L1307.5,349.0 L1309.8,349.3 L1312.1,349.2 L1314.4,349.0 L1316.6,349.2 L1318.9,349.2 L1321.2,349.2 L1323.5,349.4 L1325.8,349.2 L1328.0,349.2 L1330.3,349.2 L1332.6,349.3 L1334.9,349.5 L1337.1,349.3 L1339.4,349.1 L1341.7,349.3 L1344.0,349.4 L1346.3,349.2 L1348.5,349.2 L1350.8,349.2 L1353.1,349.2 L1355.4,349.1 L1357.6,349.2 L1359.9,349.2 L1362.2,349.0 L1364.5,349.4 L1366.8,349.0 L1369.0,349.2 L1371.3,349.4 L1373.6,349.2 L1375.9,349.2 L1378.1,349.5 L1380.4,349.3 L1382.7,349.2 L1385.0,349.2 L1387.3,349.3 L1389.5,349.5 L1391.8,349.3 L1394.1,349.0 L1396.4,349.5 L1398.6,348.9 L1400.9,349.3 L1403.2,349.4 L1405.5,349.4 L1407.8,349.3 L1410.0,349.3 L1412.3,349.5 L1414.6,349.1 L1416.9,349.2 L1419.1,349.3 L1421.4,349.6 L1423.7,349.4 L1426.0,349.4 L1428.3,349.3 L1430.5,349.4 L1432.8,349.6 L1435.1,349.4 L1437.4,349.4 L1439.6,349.4 L1441.9,349.3 L1444.2,349.5 L1446.5,349.6 L1448.8,349.3 L1451.0,349.3 L1453.3,349.6 L1455.6,349.3 L1457.9,349.5 L1460.1,349.4 L1462.4,349.4 L1464.7,349.6 L1467.0,349.6 L1469.3,349.5 L1471.5,349.7 L1473.8,349.6 L1476.1,349.6 L1478.4,349.5 L1480.6,349.5 L1482.9,349.6 L1485.2,349.5 L1487.5,349.3 L1489.8,349.4 L1492.0,349.5 L1494.3,349.6 L1496.6,349.6 L1498.9,349.7 L1501.1,349.6 L1503.4,349.8 L1505.7,349.6 L1508.0,349.6 L1510.3,349.6 L1512.5,349.6 L1514.8,349.7 L1517.1,349.5 L1519.4,349.5 L1521.6,349.4 L1523.9,349.5 L1526.2,349.6" fill="none" stroke="#6ed0e0" stroke-width="1.8" stroke-linejoin="round"/></svg>
<svg class="abs" style="left:0;top:0" width="1822" height="704"><line x1="1220.0" y1="306" x2="1220.0" y2="440" stroke="#6c1a1c" stroke-width="2"/></svg>
<div class="cur" style="left:1549.0px;top:304.5px;width:234.5px;text-align:right">current</div>
<div class="leg" style="left:1549px;top:322px;width:246px;height:26px">
<div class="lrow bg" style="width:246px"></div>
<div class="mk" style="left:11px;background:#7eb26d"></div>
<div class="abs" style="left:31px;top:0;line-height:26px">172.16.116.206:9100</div>
<div class="abs" style="right:11px;top:0;line-height:26px;text-align:right">34.1 GB</div>
</div>
<div class="leg" style="left:1549px;top:348px;width:246px;height:26px">
<div class="lrow" style="width:246px"></div>
<div class="mk" style="left:11px;background:#eab839"></div>
<div class="abs" style="left:31px;top:0;line-height:26px">172.16.116.213:9100</div>
<div class="abs" style="right:11px;top:0;line-height:26px;text-align:right">113.9 GB</div>
</div>
<div class="leg" style="left:1549px;top:374px;width:246px;height:26px">
<div class="lrow bg" style="width:246px"></div>
<div class="mk" style="left:11px;background:#6ed0e0"></div>
<div class="abs" style="left:31px;top:0;line-height:26px">172.16.117.177:9100</div>
<div class="abs" style="right:11px;top:0;line-height:26px;text-align:right">101.3 GB</div>
</div>
<div class="panel" style="left:-1px;top:486px;width:904px;height:209px">
<div class="ptitle">Network Traffic</div>
<div class="rz"></div></div>
<svg class="abs" style="left:0;top:0" width="1822" height="704"><line x1="60.9" y1="526.50" x2="559.1" y2="526.50" stroke="#444446" stroke-width="1.6"/><line x1="60.9" y1="559.98" x2="559.1" y2="559.98" stroke="#3b3b3e" stroke-width="1.6"/><line x1="60.9" y1="593.45" x2="559.1" y2="593.45" stroke="#3b3b3e" stroke-width="1.6"/><line x1="60.9" y1="626.92" x2="559.1" y2="626.92" stroke="#3b3b3e" stroke-width="1.6"/><line x1="60.9" y1="660.40" x2="559.1" y2="660.40" stroke="#3b3b3e" stroke-width="1.6"/><line x1="87.40" y1="526.1" x2="87.40" y2="660.0" stroke="#3a3a3d" stroke-width="1.6"/><line x1="170.60" y1="526.1" x2="170.60" y2="660.0" stroke="#3a3a3d" stroke-width="1.6"/><line x1="254.10" y1="526.1" x2="254.10" y2="660.0" stroke="#3a3a3d" stroke-width="1.6"/><line x1="337.40" y1="526.1" x2="337.40" y2="660.0" stroke="#3a3a3d" stroke-width="1.6"/><line x1="420.00" y1="526.1" x2="420.00" y2="660.0" stroke="#3a3a3d" stroke-width="1.6"/><line x1="502.40" y1="526.1" x2="502.40" y2="660.0" stroke="#3a3a3d" stroke-width="1.6"/></svg>
<div class="lbl yl" style="left:-25.6px;width:80px;top:519.6px">19 MiB</div>
<div class="lbl yl" style="left:-25.6px;width:80px;top:552.6px">14 MiB</div>
<div class="lbl yl" style="left:-25.6px;width:80px;top:585.6px">10 MiB</div>
<div class="lbl yl" style="left:-25.6px;width:80px;top:618.7px">5 MiB</div>
<div class="lbl yl" style="left:-25.6px;width:80px;top:651.7px">0 B</div>
<div class="lbl xl" style="left:56.6px;top:666.5px">21:00</div>
<div class="lbl xl" style="left:139.8px;top:666.5px">21:30</div>
<div class="lbl xl" style="left:223.3px;top:666.5px">22:00</div>
<div class="lbl xl" style="left:306.6px;top:666.5px">22:30</div>
<div class="lbl xl" style="left:389.2px;top:666.5px">23:00</div>
<div class="lbl xl" style="left:471.6px;top:666.5px">23:30</div>
<svg class="abs" style="left:0;top:0" width="1822" height="704"><path d="M60.9,612.5 L62.3,590.9 L62.6,592.2 L64.2,602.9 L65.9,610.8 L67.0,597.2 L67.6,603.6 L69.2,608.9 L70.6,594.0 L70.9,601.1 L72.6,624.7 L74.2,659.6 L75.9,658.8 L77.6,650.2 L78.1,644.9 L79.2,654.7 L80.9,659.4 L82.6,659.6 L84.2,659.6 L85.9,623.9 L87.6,573.3 L88.0,574.2 L89.2,592.9 L90.9,645.1 L92.6,659.0 L94.2,659.6 L95.9,659.5 L97.6,659.5 L99.2,641.6 L100.9,623.1 L102.6,611.7 L104.2,610.6 L105.9,618.6 L107.6,622.9 L109.2,609.6 L110.9,611.1 L112.6,615.6 L114.2,615.4 L115.9,609.0 L117.6,605.4 L119.2,610.4 L120.9,614.5 L122.6,608.9 L124.2,607.9 L125.9,616.4 L127.5,609.2 L129.2,615.6 L130.9,596.7 L132.0,578.5 L132.5,587.5 L134.2,617.1 L135.9,605.0 L137.0,599.7 L137.5,597.5 L139.2,619.1 L140.9,613.9 L142.5,613.8 L144.2,614.6 L145.9,611.2 L147.5,611.1 L149.2,605.3 L150.9,610.3 L152.5,607.9 L154.2,616.2 L155.9,608.1 L157.5,599.0 L158.0,592.8 L159.2,602.5 L160.9,615.4 L162.5,616.9 L164.2,614.9 L165.9,598.9 L166.1,589.2 L167.5,617.3 L169.2,611.9 L170.9,608.3 L172.5,612.6 L174.2,617.4 L175.9,615.3 L177.5,610.0 L179.2,609.3 L180.9,612.6 L182.5,610.8 L184.2,606.9 L185.9,613.3 L187.5,594.0 L187.9,601.7 L189.2,601.5 L190.9,617.4 L192.5,607.1 L194.2,612.0 L195.9,617.8 L197.5,611.6 L199.2,610.0 L200.9,609.9 L202.5,611.6 L204.2,612.7 L205.9,613.2 L207.5,611.7 L209.2,607.5 L210.9,610.3 L212.5,609.5 L214.2,611.4 L215.9,606.8 L217.5,603.1 L219.2,603.8 L220.9,616.6 L222.5,615.3 L224.2,616.0 L225.9,613.4 L227.5,604.7 L229.2,613.4 L230.9,611.7 L232.5,612.9 L234.2,619.2 L235.9,616.6 L237.5,614.8 L239.2,615.3 L240.9,598.0 L241.9,584.3 L242.5,591.4 L244.2,618.2 L245.9,608.3 L247.5,596.3 L248.0,595.1 L249.2,608.2 L250.8,611.8 L251.9,605.2 L252.5,602.0 L254.2,637.3 L255.8,656.9 L257.5,656.5 L259.2,659.1 L260.8,658.9 L262.5,657.4 L264.2,658.4 L265.8,658.5 L267.5,658.3 L269.2,657.5 L270.8,659.2 L272.5,657.9 L274.2,656.9 L275.8,658.4 L277.5,658.3 L279.2,657.5 L280.8,657.1 L282.5,657.1 L284.2,657.5 L285.8,656.5 L287.5,658.5 L289.2,656.5 L290.8,657.4 L292.5,658.2 L294.2,659.3 L295.8,656.6 L297.5,657.7 L299.2,657.5 L300.8,656.6 L302.5,658.4 L304.2,657.3 L305.8,657.2 L307.5,656.5 L309.2,657.7 L310.8,656.3 L312.5,658.5 L314.2,658.0 L315.5,655.8 L315.8,656.7 L317.5,656.5 L319.2,657.8 L320.8,658.1 L322.5,657.9 L324.2,657.9 L325.8,659.4 L327.5,658.5 L329.2,657.7 L330.8,659.2 L332.5,658.3 L334.2,658.4 L335.8,659.0 L337.5,659.3 L339.2,658.6 L340.8,657.9 L342.5,657.6 L344.2,659.5 L345.8,658.0 L347.5,657.6 L349.2,659.6 L350.8,659.3 L352.5,657.6 L354.2,657.5 L355.8,657.6 L357.5,656.7 L359.2,657.5 L360.8,656.9 L362.5,658.1 L364.2,658.1 L365.8,659.0 L367.5,658.0 L369.2,658.5 L370.8,658.7 L372.5,657.6 L374.1,657.8 L375.8,658.6 L377.5,658.0 L379.1,657.9 L380.8,657.8 L382.5,658.8 L384.1,655.5 L384.7,655.1 L385.8,657.1 L387.5,658.7 L389.1,656.3 L390.8,659.5 L392.5,657.3 L394.1,659.1 L395.8,656.7 L397.5,659.4 L399.1,657.6 L400.8,658.4 L402.5,657.4 L404.1,659.4 L405.8,658.5 L407.5,657.8 L409.1,657.5 L410.8,658.8 L412.5,659.6 L414.1,658.6 L415.8,658.9 L417.5,658.2 L419.1,658.7 L420.8,659.2 L422.5,658.5 L424.1,657.0 L425.8,657.8 L427.5,658.6 L429.1,657.7 L430.8,659.6 L432.5,658.8 L434.1,658.4 L435.8,658.7 L437.5,658.9 L439.1,658.3 L440.8,656.7 L442.5,658.4 L444.1,658.0 L445.8,656.8 L447.5,659.6 L449.1,658.6 L450.8,657.5 L452.5,659.6 L454.1,658.7 L455.8,657.1 L457.5,658.3 L459.1,658.2 L460.8,656.4 L462.5,659.6 L464.1,657.3 L465.8,659.5 L467.5,658.0 L469.1,657.8 L470.8,658.3 L472.5,658.6 L474.1,657.6 L475.8,655.7 L476.1,654.8 L477.5,657.5 L479.1,657.8 L480.8,656.8 L482.5,658.8 L484.1,659.6 L485.8,659.6 L487.5,658.6 L489.1,659.6 L490.8,658.8 L492.5,658.3 L494.1,657.0 L495.8,659.6 L497.4,658.0 L499.1,659.6 L500.8,657.6 L502.4,659.6 L504.1,657.0 L505.8,658.7 L507.4,656.4 L509.1,658.3 L510.8,659.3 L512.4,658.9 L514.1,659.1 L515.8,658.2 L517.4,657.3 L519.1,658.2 L520.8,658.8 L522.4,658.7 L524.1,656.9 L525.8,659.4 L527.4,657.8 L529.1,659.3 L530.8,659.2 L532.4,657.9 L534.1,659.6 L535.8,657.0 L537.4,657.0 L539.1,659.4 L540.8,659.6 L542.4,658.7 L544.1,658.8 L545.8,659.2 L547.4,657.6 L549.1,656.3 L550.8,658.7 L552.4,657.9 L554.1,658.9 L555.8,658.6 L557.4,659.1 L559.1,658.7 L559.1,660.0 L60.9,660.0 Z" fill="rgba(234,184,57,0.1)" stroke="none"/><path d="M60.9,628.8 L62.6,628.4 L64.2,627.7 L65.9,624.0 L67.6,626.7 L69.2,631.4 L70.9,623.8 L72.6,638.1 L74.2,659.5 L75.9,659.2 L77.6,659.0 L79.2,658.1 L80.9,658.6 L82.6,659.2 L84.2,659.6 L85.9,625.5 L87.6,563.9 L88.0,562.8 L89.2,588.9 L90.9,652.7 L92.6,658.7 L94.2,659.6 L95.9,659.6 L97.6,658.0 L99.2,646.4 L100.9,637.1 L102.6,628.1 L104.2,628.2 L105.9,625.7 L107.6,632.6 L109.2,625.7 L110.9,633.4 L112.6,637.2 L114.2,629.0 L115.9,629.8 L117.6,622.8 L119.2,623.6 L120.9,630.9 L122.6,622.9 L124.2,630.1 L125.9,626.5 L127.5,627.3 L129.2,625.7 L130.9,623.0 L132.5,623.7 L134.2,624.8 L135.9,623.7 L137.5,624.3 L139.2,628.6 L140.9,629.0 L142.5,628.0 L144.2,624.2 L145.9,627.1 L147.5,617.1 L149.2,629.3 L150.9,630.4 L152.5,623.2 L154.2,620.7 L155.9,624.2 L157.5,622.9 L159.2,620.6 L160.9,626.5 L162.5,631.7 L164.2,628.2 L165.9,622.5 L167.5,631.8 L169.2,626.0 L170.9,625.2 L172.5,627.4 L174.2,623.4 L175.9,623.9 L177.5,617.2 L179.2,623.8 L180.9,628.5 L182.5,628.4 L184.2,629.4 L185.9,622.5 L187.5,628.4 L189.2,626.4 L190.9,623.3 L192.5,629.0 L194.2,627.3 L195.9,633.3 L197.5,630.4 L199.2,628.4 L200.9,624.6 L202.5,621.5 L204.2,626.2 L205.9,625.2 L207.5,625.5 L209.2,622.0 L210.9,622.7 L212.5,625.1 L214.2,630.1 L215.9,622.7 L217.5,624.7 L219.2,621.4 L220.9,626.3 L222.5,618.6 L224.2,627.6 L225.9,620.0 L227.5,625.7 L229.2,628.2 L230.9,630.5 L232.5,626.8 L234.2,620.7 L235.9,623.0 L237.5,623.5 L239.2,635.4 L240.9,623.4 L242.5,624.0 L244.2,628.3 L245.9,628.6 L247.5,626.2 L249.2,619.5 L250.8,630.3 L252.5,627.8 L254.2,641.5 L255.8,657.2 L257.5,655.9 L259.2,654.2 L260.8,654.4 L262.5,651.7 L264.2,652.2 L265.8,651.7 L267.5,654.2 L269.2,653.4 L270.8,657.2 L272.5,656.4 L274.2,659.3 L275.8,658.0 L277.5,657.5 L279.2,656.0 L280.8,659.6 L282.5,656.8 L284.2,657.3 L285.8,656.3 L287.5,657.1 L289.2,657.8 L290.8,658.4 L292.5,659.2 L294.2,657.7 L295.8,658.1 L297.5,655.8 L299.2,658.5 L300.8,657.5 L302.5,659.5 L304.2,658.3 L305.8,657.6 L307.5,657.0 L309.2,656.4 L310.8,657.9 L312.5,659.1 L314.2,657.4 L315.8,657.3 L317.5,657.4 L319.2,658.6 L320.8,656.7 L322.5,657.8 L324.2,657.1 L325.8,656.5 L327.5,657.2 L329.2,657.6 L330.8,655.6 L332.5,657.6 L334.2,658.2 L335.8,657.8 L337.5,656.3 L339.2,657.8 L340.8,657.3 L342.5,656.6 L344.2,658.4 L345.8,659.6 L347.5,657.6 L349.2,657.6 L350.8,658.5 L352.5,657.0 L354.2,657.2 L355.8,658.9 L357.5,657.3 L359.2,658.1 L360.8,659.5 L362.5,657.4 L364.2,657.9 L365.8,658.7 L367.5,657.3 L369.2,657.4 L370.8,658.5 L372.5,657.5 L374.1,656.8 L375.8,658.6 L377.5,657.5 L379.1,657.9 L380.8,655.5 L382.5,659.6 L384.1,657.2 L385.8,658.2 L387.5,658.0 L389.1,655.9 L390.8,657.9 L392.5,655.5 L394.1,658.4 L395.8,657.5 L397.5,658.4 L399.1,658.6 L400.8,657.8 L402.5,658.2 L404.1,657.7 L405.8,659.6 L407.5,655.8 L409.1,658.1 L410.8,656.0 L412.5,659.0 L414.1,657.6 L415.8,654.5 L417.5,658.8 L419.1,659.5 L420.8,658.5 L422.5,657.4 L424.1,657.2 L425.8,656.5 L427.5,658.2 L429.1,659.6 L430.8,658.3 L432.5,656.6 L434.1,657.4 L435.8,659.6 L437.5,657.9 L439.1,656.4 L440.8,655.6 L442.5,657.3 L444.1,657.6 L445.8,659.2 L447.5,658.8 L449.1,657.8 L450.8,657.4 L452.5,657.3 L454.1,658.4 L455.8,659.1 L457.5,658.7 L459.1,659.1 L460.8,657.2 L462.5,659.6 L464.1,658.2 L465.8,657.4 L467.5,656.3 L469.1,657.8 L470.8,656.8 L472.5,658.3 L474.1,658.7 L475.8,658.6 L477.5,656.3 L479.1,656.8 L480.8,657.4 L482.5,654.4 L484.1,657.9 L485.8,657.2 L487.5,657.6 L489.1,658.1 L490.8,655.4 L492.5,656.3 L494.1,659.4 L495.8,658.3 L497.4,657.4 L499.1,657.1 L500.8,659.3 L502.4,659.6 L504.1,659.6 L505.8,658.0 L507.4,658.0 L509.1,657.5 L510.8,658.7 L512.4,659.2 L514.1,659.6 L515.8,657.5 L517.4,657.5 L519.1,656.8 L520.8,657.0 L522.4,658.1 L524.1,656.5 L525.8,658.0 L527.4,658.6 L529.1,658.4 L530.8,658.5 L532.4,659.6 L534.1,657.7 L535.8,657.6 L537.4,658.3 L539.1,658.6 L540.8,657.5 L542.4,656.1 L544.1,657.8 L545.8,658.4 L547.4,658.5 L549.1,658.0 L550.8,659.2 L552.4,658.0 L554.1,657.8 L555.8,655.9 L557.4,656.9 L559.1,656.8 L559.1,660.0 L60.9,660.0 Z" fill="rgba(110,208,224,0.1)" stroke="none"/><path d="M60.9,626.2 L62.6,628.9 L64.2,627.6 L65.9,626.7 L67.6,631.1 L69.2,632.7 L70.9,631.0 L72.6,638.1 L74.2,658.5 L75.9,659.5 L77.6,659.6 L79.2,658.2 L80.9,659.6 L82.6,659.6 L84.2,659.6 L85.9,611.6 L87.6,528.1 L88.0,530.8 L89.2,563.5 L90.9,650.1 L92.6,659.6 L94.2,659.6 L95.9,659.4 L97.6,659.6 L99.2,649.8 L100.9,638.1 L102.6,632.3 L104.2,630.7 L105.9,624.8 L107.6,628.2 L109.2,629.1 L110.9,632.0 L112.6,627.1 L114.2,631.6 L115.9,624.6 L117.6,625.6 L119.2,634.6 L120.9,632.3 L122.6,629.5 L124.2,630.1 L125.9,632.5 L127.5,632.4 L129.2,626.9 L130.9,630.4 L132.5,633.2 L134.2,629.7 L135.9,626.2 L137.5,624.1 L139.2,628.7 L140.9,629.8 L142.5,631.1 L144.2,616.2 L145.0,592.1 L145.9,611.4 L147.5,625.3 L149.2,629.5 L150.9,626.3 L152.5,626.7 L154.2,627.5 L155.9,635.7 L157.5,629.0 L159.2,629.6 L160.9,625.0 L162.5,629.6 L164.2,627.5 L165.9,628.0 L167.5,625.2 L169.2,626.6 L170.9,625.8 L172.5,624.5 L174.2,626.0 L175.9,626.5 L177.5,629.4 L179.2,628.4 L180.9,622.6 L182.5,628.6 L184.2,627.2 L185.9,628.8 L187.5,629.4 L189.2,637.1 L190.9,623.8 L192.5,631.9 L194.2,630.9 L195.9,624.8 L197.5,635.2 L199.2,628.5 L200.9,630.1 L202.5,633.7 L204.2,626.8 L205.9,630.7 L207.5,628.8 L209.2,629.7 L210.9,626.7 L212.5,622.1 L214.2,632.0 L215.9,626.1 L217.5,630.4 L219.2,629.5 L220.9,633.8 L222.5,631.7 L224.2,629.7 L225.9,626.1 L227.5,627.7 L229.2,626.8 L230.9,626.3 L232.5,632.3 L234.2,624.3 L235.9,629.3 L237.5,626.4 L239.2,628.9 L240.9,627.6 L242.5,626.5 L244.2,634.7 L245.9,622.6 L247.5,627.8 L249.2,625.2 L250.8,627.7 L252.5,628.0 L254.2,645.7 L255.8,658.3 L257.5,659.6 L259.2,658.0 L260.8,656.2 L262.5,659.6 L264.2,658.6 L265.8,658.3 L267.5,656.7 L269.2,656.6 L270.8,657.8 L272.5,657.8 L274.2,658.1 L275.8,658.4 L277.5,658.4 L279.2,658.4 L280.8,658.1 L282.5,657.8 L284.2,656.7 L285.1,651.6 L285.8,655.4 L287.5,657.4 L289.2,659.4 L290.8,658.7 L292.5,657.8 L294.2,657.6 L295.8,658.1 L297.5,656.3 L299.2,658.2 L300.8,656.4 L302.5,656.5 L304.2,657.2 L305.8,657.5 L307.5,657.4 L309.2,658.1 L310.8,659.1 L312.5,658.5 L314.2,658.6 L315.8,658.4 L317.5,658.7 L319.2,659.1 L320.8,657.8 L322.5,656.5 L324.2,658.9 L325.8,655.3 L326.6,648.0 L327.5,655.5 L329.2,659.1 L330.8,659.3 L332.5,658.1 L334.2,657.4 L335.8,655.6 L337.5,659.2 L339.2,659.5 L340.8,658.2 L342.5,658.1 L344.2,656.3 L345.8,656.6 L347.5,658.7 L349.2,659.6 L350.8,657.4 L352.5,658.5 L354.2,656.6 L355.8,658.1 L357.5,658.2 L359.2,659.3 L360.8,658.1 L362.5,656.8 L364.2,658.9 L365.8,657.8 L367.5,658.6 L369.2,657.1 L370.8,658.1 L372.5,657.4 L374.1,657.7 L375.8,659.0 L377.5,659.2 L379.1,656.6 L380.8,658.4 L382.5,659.1 L384.1,658.7 L385.8,656.3 L387.5,657.9 L389.1,656.9 L390.8,659.6 L392.5,655.6 L394.1,658.0 L395.8,656.6 L397.5,658.4 L399.1,658.1 L400.8,657.1 L402.5,656.1 L404.1,657.9 L405.8,658.8 L407.5,657.0 L409.1,655.8 L410.8,659.5 L412.5,659.0 L414.1,657.4 L415.8,658.5 L417.5,659.6 L419.1,658.1 L420.8,657.8 L422.5,657.3 L424.1,656.6 L425.8,659.5 L427.5,658.6 L429.1,658.1 L430.8,657.6 L432.5,658.9 L434.1,658.1 L435.8,658.9 L437.5,657.2 L439.1,656.8 L440.8,658.9 L442.5,657.5 L444.1,659.2 L445.8,657.7 L447.5,659.6 L449.1,657.8 L450.8,656.9 L452.5,657.1 L454.1,659.6 L455.8,658.0 L457.5,658.5 L459.1,656.6 L460.8,657.7 L462.5,656.6 L464.1,658.7 L465.8,659.3 L467.5,659.6 L469.1,657.8 L470.8,658.4 L472.5,657.8 L474.1,658.3 L475.8,657.9 L477.5,656.6 L479.1,659.4 L480.8,657.6 L482.5,656.8 L484.1,657.6 L485.8,656.2 L487.5,658.5 L489.1,658.0 L490.8,658.5 L492.5,658.5 L494.1,656.3 L495.8,659.6 L497.4,658.8 L499.1,658.7 L500.8,658.1 L502.4,658.5 L504.1,657.5 L505.8,657.6 L507.4,656.2 L509.1,657.2 L510.8,659.1 L512.4,659.6 L514.1,658.6 L515.8,658.8 L517.4,658.4 L519.1,656.8 L520.8,657.8 L522.4,659.6 L524.1,659.0 L525.8,656.5 L527.4,659.5 L529.1,657.4 L530.8,657.3 L532.4,659.5 L534.1,659.6 L535.8,657.9 L537.4,657.9 L539.1,657.1 L540.8,657.6 L542.4,659.3 L544.1,656.3 L545.8,658.0 L547.4,658.1 L549.1,658.0 L550.8,659.6 L552.4,659.1 L554.1,657.4 L555.8,657.5 L557.4,658.8 L559.1,658.1 L559.1,660.0 L60.9,660.0 Z" fill="rgba(31,120,193,0.1)" stroke="none"/><path d="M60.9,642.6 L62.6,633.6 L63.7,623.3 L64.2,632.2 L65.9,638.7 L67.6,638.0 L69.2,638.5 L70.9,638.5 L72.6,643.9 L74.2,658.2 L75.9,657.5 L77.6,659.6 L79.2,659.6 L80.9,658.7 L82.6,659.6 L84.2,659.6 L85.9,634.0 L87.6,592.8 L88.0,582.6 L89.2,613.2 L90.9,654.6 L92.6,659.4 L94.2,659.0 L95.9,659.6 L97.6,659.6 L99.2,655.3 L100.9,642.8 L102.6,641.6 L104.2,650.1 L105.9,641.2 L107.6,641.2 L109.2,639.7 L110.9,642.2 L112.6,641.0 L114.2,645.1 L115.9,632.3 L116.3,621.8 L117.6,640.3 L119.2,643.3 L120.9,647.5 L122.6,643.7 L124.2,644.4 L125.9,639.4 L127.5,646.1 L129.2,645.5 L130.9,644.1 L132.5,619.5 L132.9,609.6 L134.2,639.5 L135.9,646.7 L137.5,645.2 L139.2,636.1 L140.9,640.9 L142.5,642.3 L144.2,640.0 L145.9,630.7 L146.7,614.3 L147.5,632.5 L149.2,643.9 L150.9,644.8 L152.5,637.9 L154.2,641.3 L155.9,640.6 L157.5,639.5 L159.2,644.7 L160.9,635.3 L162.5,641.9 L164.2,641.7 L165.9,641.9 L167.5,640.4 L169.2,642.1 L170.9,632.2 L171.6,617.4 L172.5,629.2 L174.2,638.2 L175.9,644.9 L177.5,642.0 L179.2,635.7 L180.9,640.6 L182.5,640.1 L184.2,641.3 L185.9,635.1 L187.5,642.0 L189.2,642.0 L190.9,636.7 L192.5,645.9 L194.2,641.9 L195.9,631.4 L197.5,640.3 L199.2,622.4 L199.3,629.5 L200.9,640.6 L202.5,643.6 L204.2,642.6 L205.9,642.8 L207.5,639.7 L209.2,641.0 L210.9,636.4 L212.5,647.9 L214.2,642.2 L215.9,637.3 L217.5,638.5 L219.2,634.8 L220.9,641.4 L222.5,636.2 L224.2,637.8 L225.9,644.0 L227.5,645.8 L229.2,632.9 L230.9,635.5 L232.5,621.3 L232.5,624.8 L234.2,645.7 L235.9,640.6 L237.5,639.0 L239.2,633.7 L240.9,640.4 L242.5,634.6 L243.6,618.4 L244.2,623.7 L245.9,633.6 L247.5,632.5 L249.2,638.9 L250.8,636.3 L252.5,642.4 L254.2,650.1 L255.8,658.4 L257.5,656.8 L259.2,659.6 L260.8,657.8 L262.5,655.2 L264.2,656.4 L265.8,655.9 L267.5,658.7 L269.2,657.5 L270.8,659.2 L272.5,655.6 L274.2,658.4 L275.8,658.5 L277.5,659.3 L279.2,657.5 L280.8,655.8 L282.5,657.9 L284.2,658.1 L285.8,658.6 L287.5,656.3 L289.2,657.7 L290.8,657.2 L292.5,655.8 L293.4,652.1 L294.2,654.4 L295.8,657.0 L297.5,659.6 L299.2,658.0 L300.8,658.2 L302.5,657.3 L304.2,656.2 L305.8,658.9 L307.5,658.9 L309.2,659.6 L310.8,658.8 L312.5,652.3 L312.8,653.9 L314.2,656.1 L315.8,657.9 L317.5,658.2 L319.2,657.8 L320.8,658.6 L322.5,657.4 L324.2,657.9 L325.8,659.6 L327.5,659.0 L329.2,657.2 L330.8,658.3 L332.5,659.6 L334.2,656.5 L335.8,656.0 L337.5,659.6 L339.2,658.0 L340.8,656.9 L342.5,657.3 L344.2,657.1 L345.8,646.0 L346.0,641.1 L347.5,657.0 L349.2,658.7 L350.8,657.3 L352.5,656.6 L354.2,656.8 L355.8,659.0 L357.5,657.5 L359.2,659.6 L360.8,656.8 L362.5,659.2 L364.2,659.1 L365.8,656.9 L367.5,657.7 L369.2,659.1 L370.8,657.1 L372.5,655.5 L374.1,659.6 L375.8,657.8 L377.5,657.8 L379.1,657.7 L380.8,657.8 L382.5,656.6 L384.1,656.9 L385.8,657.8 L387.5,649.7 L387.5,651.5 L389.1,655.5 L390.8,658.0 L392.5,658.3 L394.1,657.2 L395.8,659.4 L397.5,659.6 L399.1,659.1 L400.8,656.1 L402.5,657.1 L404.1,659.0 L405.8,657.2 L406.9,653.8 L407.5,656.7 L409.1,658.7 L410.8,659.4 L412.5,659.6 L414.1,659.2 L415.8,656.3 L417.5,657.3 L419.1,658.4 L420.8,657.6 L422.5,659.6 L424.1,657.6 L425.8,658.3 L427.5,658.7 L429.1,657.5 L430.8,658.3 L432.5,655.1 L434.1,655.5 L434.6,652.7 L435.8,657.1 L437.5,658.2 L439.1,655.7 L440.8,657.8 L442.5,659.6 L444.1,659.1 L445.8,659.6 L447.5,658.0 L449.1,658.6 L450.8,657.2 L452.5,656.8 L454.1,659.3 L455.8,657.9 L457.5,658.1 L459.1,655.9 L460.8,657.9 L462.5,658.6 L464.1,658.7 L465.8,657.4 L467.5,659.6 L469.1,659.4 L470.8,659.5 L472.5,659.6 L474.1,657.3 L475.8,657.2 L476.1,651.8 L477.5,659.6 L479.1,659.3 L480.8,654.5 L482.5,659.6 L484.1,658.8 L485.8,658.3 L487.5,659.6 L489.1,658.7 L490.8,657.9 L492.5,657.1 L494.1,658.3 L495.8,657.2 L497.4,657.5 L499.1,659.6 L500.8,656.7 L502.4,657.3 L504.1,658.3 L505.8,658.5 L507.4,658.1 L509.1,658.0 L510.8,658.7 L512.4,659.5 L514.1,657.1 L515.8,658.1 L517.4,657.5 L519.1,656.5 L520.8,659.5 L522.4,657.5 L524.1,658.4 L525.8,651.4 L525.9,652.1 L527.4,656.4 L529.1,659.6 L530.8,658.6 L532.4,658.0 L534.1,657.9 L535.8,658.0 L537.4,659.6 L539.1,659.6 L540.8,659.6 L542.4,659.0 L544.1,656.1 L545.8,658.7 L547.4,656.4 L549.1,656.9 L550.8,659.1 L552.4,659.6 L554.1,659.6 L555.8,659.3 L557.4,658.2 L559.1,656.2 L559.1,660.0 L60.9,660.0 Z" fill="rgba(186,67,169,0.1)" stroke="none"/><path d="M60.9,646.4 L62.6,638.4 L63.7,622.5 L64.2,632.1 L65.9,645.5 L67.6,645.7 L69.2,646.2 L70.9,644.5 L72.6,652.5 L74.2,658.4 L75.9,658.5 L77.6,659.4 L79.2,658.7 L80.9,658.5 L82.6,659.6 L84.2,659.6 L85.9,650.8 L87.6,631.4 L88.0,623.6 L89.2,639.3 L90.9,659.6 L92.6,659.6 L94.2,659.3 L95.9,659.1 L97.6,659.0 L99.2,657.7 L100.9,650.7 L102.6,648.7 L104.2,649.3 L105.9,651.7 L107.6,653.6 L109.2,645.4 L110.9,649.2 L112.6,653.2 L114.2,645.9 L115.9,652.3 L117.6,647.3 L119.2,652.5 L120.9,649.5 L122.6,649.2 L124.2,643.4 L125.9,651.9 L127.5,650.8 L129.2,645.2 L130.9,645.0 L132.5,647.9 L134.2,649.9 L135.9,649.8 L137.5,652.7 L139.2,645.3 L140.9,646.0 L142.5,645.5 L144.2,645.5 L145.9,646.4 L147.5,644.9 L149.2,650.3 L150.9,642.1 L152.5,646.5 L154.2,649.3 L155.9,650.3 L157.5,647.9 L159.2,644.3 L160.5,628.0 L160.9,630.3 L162.5,640.7 L164.2,645.0 L165.9,643.9 L167.5,644.6 L169.2,649.3 L170.9,648.1 L172.5,647.3 L174.2,643.7 L175.9,650.3 L177.5,640.0 L179.2,648.6 L180.9,649.2 L182.5,648.1 L184.2,649.2 L185.9,645.9 L187.5,638.6 L188.2,626.8 L189.2,643.1 L190.9,642.9 L192.5,643.9 L194.2,644.7 L195.9,651.8 L197.5,644.5 L199.2,645.2 L200.9,648.7 L202.5,643.3 L204.2,641.8 L205.9,643.4 L207.5,645.4 L209.2,648.5 L210.9,643.7 L212.5,647.6 L214.2,643.9 L215.9,647.6 L217.5,647.4 L219.2,643.5 L220.9,646.4 L222.5,650.6 L224.2,641.5 L225.9,643.2 L227.5,642.5 L229.2,648.4 L230.9,644.3 L232.5,641.9 L234.2,643.0 L235.9,645.7 L237.5,641.7 L239.2,645.1 L240.9,648.6 L242.5,644.7 L244.2,645.7 L245.9,647.5 L247.5,641.3 L249.2,646.9 L250.8,640.3 L252.5,645.9 L254.2,652.2 L255.8,659.1 L257.5,658.4 L259.2,659.3 L260.8,658.9 L262.5,658.7 L264.2,659.5 L265.8,659.5 L267.5,659.6 L269.2,659.6 L270.8,657.5 L272.5,659.5 L274.2,658.5 L275.8,659.6 L277.5,657.6 L279.2,658.5 L280.8,658.0 L282.3,641.4 L282.5,642.8 L284.2,659.6 L285.8,659.6 L287.5,657.9 L289.2,658.2 L290.8,658.6 L292.5,659.1 L294.2,659.3 L295.8,659.6 L297.5,659.2 L299.2,658.8 L300.8,658.1 L302.5,659.0 L304.2,659.6 L305.8,659.6 L307.5,659.6 L309.2,659.6 L310.8,658.3 L312.5,657.9 L314.2,658.2 L315.8,659.5 L317.5,659.6 L319.2,658.2 L320.8,659.6 L322.5,659.3 L324.2,659.6 L325.8,659.3 L327.5,659.5 L329.2,658.1 L330.8,659.6 L332.5,659.3 L334.2,659.3 L335.8,659.6 L337.5,659.2 L339.2,659.6 L340.8,659.6 L342.5,659.1 L344.2,658.8 L345.8,658.2 L347.5,658.2 L349.2,658.8 L350.8,659.2 L352.5,659.6 L354.2,658.5 L355.8,659.6 L357.5,658.5 L359.2,659.6 L360.8,659.0 L362.5,657.9 L364.2,659.6 L365.8,658.6 L367.5,659.2 L369.2,659.5 L370.8,655.1 L370.9,653.1 L372.5,657.8 L374.1,659.4 L375.8,659.6 L377.5,658.8 L379.1,659.6 L380.8,659.3 L382.5,658.9 L384.1,658.1 L385.8,659.5 L387.5,659.4 L389.1,658.7 L390.8,659.6 L392.5,659.2 L394.1,658.5 L395.8,659.1 L397.5,657.0 L399.1,657.2 L400.8,659.6 L402.5,659.1 L404.1,659.2 L405.8,659.6 L407.5,659.6 L409.1,657.9 L410.8,659.1 L412.5,659.1 L414.1,657.4 L415.8,658.6 L417.5,659.6 L419.1,659.6 L420.8,659.6 L422.5,658.9 L424.1,659.4 L425.8,658.3 L427.5,659.3 L429.1,658.4 L430.8,657.3 L432.5,659.5 L434.1,659.2 L435.8,659.0 L437.5,657.6 L439.1,659.6 L440.8,659.6 L442.5,659.6 L444.1,658.9 L445.8,659.6 L447.5,659.6 L449.1,657.9 L450.8,659.4 L452.5,658.7 L454.1,658.7 L455.8,658.6 L457.5,659.3 L459.1,659.6 L460.8,657.1 L462.5,659.1 L464.1,659.0 L465.8,658.6 L467.5,658.1 L469.1,659.6 L470.8,659.6 L472.5,657.9 L474.1,658.1 L475.8,659.3 L477.5,659.6 L479.1,658.5 L480.8,658.2 L482.5,659.6 L484.1,658.5 L485.8,659.0 L487.5,658.6 L489.1,658.7 L490.8,658.3 L492.5,659.2 L494.1,658.5 L495.8,658.7 L497.4,657.9 L499.1,658.8 L500.8,659.4 L502.4,659.2 L503.7,655.2 L504.1,656.3 L505.8,659.0 L507.4,659.0 L509.1,658.9 L510.8,658.0 L512.4,659.6 L514.1,657.9 L515.8,658.0 L517.4,659.4 L519.1,659.5 L520.8,659.5 L522.4,659.1 L524.1,659.2 L525.8,658.3 L527.4,657.5 L529.1,659.6 L530.8,658.7 L532.4,658.3 L534.1,659.6 L535.8,658.5 L537.4,658.1 L539.1,658.5 L540.8,659.6 L542.4,658.4 L544.1,659.1 L545.8,659.4 L547.4,658.6 L549.1,659.1 L550.8,658.4 L552.4,659.6 L554.1,659.6 L555.8,658.6 L557.4,659.3 L559.1,657.7 L559.1,660.0 L60.9,660.0 Z" fill="rgba(226,77,66,0.12)" stroke="none"/><path d="M60.9,646.0 L62.6,648.5 L64.2,650.3 L65.9,649.2 L67.6,647.0 L69.2,645.2 L70.9,651.0 L72.6,653.9 L74.2,659.4 L75.9,659.6 L77.6,659.6 L79.2,658.7 L80.9,659.5 L82.6,659.6 L84.2,659.0 L85.9,659.6 L87.6,658.4 L89.2,659.6 L90.9,658.4 L92.6,658.8 L94.2,659.6 L95.9,659.6 L97.6,659.6 L99.2,655.5 L100.9,651.7 L102.6,651.6 L104.2,648.4 L105.9,648.5 L107.6,652.4 L109.2,649.4 L110.9,649.3 L112.6,648.4 L114.2,649.5 L115.9,648.6 L117.6,650.9 L119.2,646.0 L120.9,648.4 L122.6,647.6 L124.2,648.7 L125.9,650.0 L127.5,647.8 L129.2,647.9 L130.9,650.9 L132.5,650.5 L134.2,649.0 L135.9,649.2 L137.5,648.8 L139.2,647.7 L140.9,650.1 L142.5,649.1 L144.2,648.4 L145.9,650.7 L147.5,649.3 L149.2,648.9 L150.9,648.9 L152.5,648.4 L154.2,645.4 L155.9,646.1 L157.5,648.1 L159.2,648.0 L160.9,648.3 L162.5,649.1 L164.2,648.7 L165.9,645.7 L167.5,647.5 L169.2,648.0 L170.9,648.1 L172.5,648.2 L174.2,647.5 L175.9,649.4 L177.5,646.2 L179.2,646.7 L180.9,648.1 L182.5,648.3 L184.2,649.8 L185.9,645.4 L187.5,646.2 L189.2,650.0 L190.9,650.1 L192.5,646.8 L194.2,646.2 L195.9,645.8 L197.5,647.6 L199.2,646.3 L200.9,646.6 L202.5,646.9 L204.2,645.3 L205.9,647.3 L207.5,648.1 L209.2,644.6 L210.9,647.5 L212.5,650.6 L214.2,646.3 L215.9,647.1 L217.5,646.7 L219.2,644.9 L220.9,647.4 L222.5,644.5 L224.2,646.4 L225.9,642.8 L227.5,648.3 L229.2,643.2 L230.9,644.1 L232.5,647.5 L234.2,646.4 L235.9,645.7 L237.5,642.3 L239.2,646.4 L240.9,646.8 L242.5,646.1 L244.2,646.0 L245.9,647.5 L247.5,650.6 L249.2,644.1 L250.8,643.0 L252.5,647.6 L254.2,652.4 L255.8,658.9 L257.5,659.6 L259.2,659.6 L260.8,658.1 L262.5,659.2 L264.2,659.3 L265.8,659.3 L267.5,659.6 L269.2,659.6 L270.8,659.3 L272.5,659.5 L274.2,659.2 L275.8,658.6 L277.5,659.6 L279.2,659.6 L280.8,658.5 L282.5,659.2 L284.2,659.2 L285.8,658.8 L287.5,658.9 L289.2,658.7 L290.8,659.3 L292.5,658.5 L294.2,659.4 L295.8,659.0 L297.5,659.5 L299.2,658.9 L300.8,659.6 L302.5,657.6 L304.2,659.6 L305.8,659.6 L307.5,659.6 L309.2,659.6 L310.8,659.6 L312.5,659.3 L314.2,659.4 L315.8,658.9 L317.5,658.8 L319.2,659.6 L320.8,659.6 L322.5,659.6 L324.2,659.6 L325.8,659.4 L327.5,659.6 L329.2,659.6 L330.8,658.7 L332.5,659.5 L334.2,658.7 L335.8,658.7 L337.5,659.3 L339.2,659.5 L340.8,658.9 L342.5,659.6 L344.2,658.6 L345.8,659.0 L347.5,658.8 L349.2,658.9 L350.8,658.8 L352.5,658.8 L354.2,659.4 L355.8,658.7 L357.5,659.6 L359.2,659.6 L360.8,659.6 L362.5,659.2 L364.2,659.6 L365.8,658.8 L367.5,659.5 L369.2,659.0 L370.8,658.8 L372.5,659.4 L374.1,658.9 L375.8,659.3 L377.5,659.2 L379.1,659.6 L380.8,659.5 L382.5,659.3 L384.1,659.6 L385.8,658.2 L387.5,659.1 L389.1,659.1 L390.8,659.4 L392.5,659.3 L394.1,658.4 L395.8,659.6 L397.5,658.7 L399.1,658.3 L400.8,658.3 L402.5,659.4 L404.1,659.3 L405.8,659.6 L407.5,659.2 L409.1,658.7 L410.8,658.9 L412.5,658.3 L414.1,659.6 L415.8,658.8 L417.5,659.6 L419.1,658.4 L420.8,659.6 L422.5,658.3 L424.1,658.7 L425.8,659.6 L427.5,658.1 L429.1,658.7 L430.8,659.2 L432.5,659.1 L434.1,659.1 L435.8,659.6 L437.5,658.2 L439.1,659.1 L440.8,658.8 L442.5,659.5 L444.1,659.6 L445.8,658.6 L447.5,659.4 L449.1,659.6 L450.8,659.0 L452.5,659.2 L454.1,659.3 L455.8,659.2 L457.5,659.4 L459.1,659.6 L460.8,659.6 L462.5,659.4 L464.1,659.6 L465.8,658.7 L467.5,658.5 L469.1,659.6 L470.8,659.6 L472.5,659.4 L474.1,659.5 L475.8,658.5 L477.5,659.6 L479.1,658.1 L480.8,659.4 L482.5,659.2 L484.1,659.2 L485.8,659.6 L487.5,658.7 L489.1,659.6 L490.8,659.2 L492.5,659.4 L494.1,659.4 L495.8,659.1 L497.4,658.7 L499.1,659.2 L500.8,659.4 L502.4,659.4 L504.1,659.5 L505.8,659.6 L507.4,658.8 L509.1,658.7 L510.8,659.6 L512.4,659.1 L514.1,658.6 L515.8,659.5 L517.4,659.6 L519.1,658.8 L520.8,659.0 L522.4,659.4 L524.1,659.6 L525.8,659.6 L527.4,659.4 L529.1,659.5 L530.8,659.1 L532.4,659.6 L534.1,659.0 L535.8,658.5 L537.4,658.6 L539.1,659.6 L540.8,659.0 L542.4,659.4 L544.1,658.2 L545.8,659.3 L547.4,659.6 L549.1,658.7 L550.8,658.8 L552.4,659.6 L554.1,659.6 L555.8,659.3 L557.4,659.6 L559.1,659.3 L559.1,660.0 L60.9,660.0 Z" fill="rgba(126,178,109,0.12)" stroke="none"/><path d="M60.9,646.0 L62.6,648.5 L64.2,650.3 L65.9,649.2 L67.6,647.0 L69.2,645.2 L70.9,651.0 L72.6,653.9 L74.2,659.4 L75.9,659.6 L77.6,659.6 L79.2,658.7 L80.9,659.5 L82.6,659.6 L84.2,659.0 L85.9,659.6 L87.6,658.4 L89.2,659.6 L90.9,658.4 L92.6,658.8 L94.2,659.6 L95.9,659.6 L97.6,659.6 L99.2,655.5 L100.9,651.7 L102.6,651.6 L104.2,648.4 L105.9,648.5 L107.6,652.4 L109.2,649.4 L110.9,649.3 L112.6,648.4 L114.2,649.5 L115.9,648.6 L117.6,650.9 L119.2,646.0 L120.9,648.4 L122.6,647.6 L124.2,648.7 L125.9,650.0 L127.5,647.8 L129.2,647.9 L130.9,650.9 L132.5,650.5 L134.2,649.0 L135.9,649.2 L137.5,648.8 L139.2,647.7 L140.9,650.1 L142.5,649.1 L144.2,648.4 L145.9,650.7 L147.5,649.3 L149.2,648.9 L150.9,648.9 L152.5,648.4 L154.2,645.4 L155.9,646.1 L157.5,648.1 L159.2,648.0 L160.9,648.3 L162.5,649.1 L164.2,648.7 L165.9,645.7 L167.5,647.5 L169.2,648.0 L170.9,648.1 L172.5,648.2 L174.2,647.5 L175.9,649.4 L177.5,646.2 L179.2,646.7 L180.9,648.1 L182.5,648.3 L184.2,649.8 L185.9,645.4 L187.5,646.2 L189.2,650.0 L190.9,650.1 L192.5,646.8 L194.2,646.2 L195.9,645.8 L197.5,647.6 L199.2,646.3 L200.9,646.6 L202.5,646.9 L204.2,645.3 L205.9,647.3 L207.5,648.1 L209.2,644.6 L210.9,647.5 L212.5,650.6 L214.2,646.3 L215.9,647.1 L217.5,646.7 L219.2,644.9 L220.9,647.4 L222.5,644.5 L224.2,646.4 L225.9,642.8 L227.5,648.3 L229.2,643.2 L230.9,644.1 L232.5,647.5 L234.2,646.4 L235.9,645.7 L237.5,642.3 L239.2,646.4 L240.9,646.8 L242.5,646.1 L244.2,646.0 L245.9,647.5 L247.5,650.6 L249.2,644.1 L250.8,643.0 L252.5,647.6 L254.2,652.4 L255.8,658.9 L257.5,659.6 L259.2,659.6 L260.8,658.1 L262.5,659.2 L264.2,659.3 L265.8,659.3 L267.5,659.6 L269.2,659.6 L270.8,659.3 L272.5,659.5 L274.2,659.2 L275.8,658.6 L277.5,659.6 L279.2,659.6 L280.8,658.5 L282.5,659.2 L284.2,659.2 L285.8,658.8 L287.5,658.9 L289.2,658.7 L290.8,659.3 L292.5,658.5 L294.2,659.4 L295.8,659.0 L297.5,659.5 L299.2,658.9 L300.8,659.6 L302.5,657.6 L304.2,659.6 L305.8,659.6 L307.5,659.6 L309.2,659.6 L310.8,659.6 L312.5,659.3 L314.2,659.4 L315.8,658.9 L317.5,658.8 L319.2,659.6 L320.8,659.6 L322.5,659.6 L324.2,659.6 L325.8,659.4 L327.5,659.6 L329.2,659.6 L330.8,658.7 L332.5,659.5 L334.2,658.7 L335.8,658.7 L337.5,659.3 L339.2,659.5 L340.8,658.9 L342.5,659.6 L344.2,658.6 L345.8,659.0 L347.5,658.8 L349.2,658.9 L350.8,658.8 L352.5,658.8 L354.2,659.4 L355.8,658.7 L357.5,659.6 L359.2,659.6 L360.8,659.6 L362.5,659.2 L364.2,659.6 L365.8,658.8 L367.5,659.5 L369.2,659.0 L370.8,658.8 L372.5,659.4 L374.1,658.9 L375.8,659.3 L377.5,659.2 L379.1,659.6 L380.8,659.5 L382.5,659.3 L384.1,659.6 L385.8,658.2 L387.5,659.1 L389.1,659.1 L390.8,659.4 L392.5,659.3 L394.1,658.4 L395.8,659.6 L397.5,658.7 L399.1,658.3 L400.8,658.3 L402.5,659.4 L404.1,659.3 L405.8,659.6 L407.5,659.2 L409.1,658.7 L410.8,658.9 L412.5,658.3 L414.1,659.6 L415.8,658.8 L417.5,659.6 L419.1,658.4 L420.8,659.6 L422.5,658.3 L424.1,658.7 L425.8,659.6 L427.5,658.1 L429.1,658.7 L430.8,659.2 L432.5,659.1 L434.1,659.1 L435.8,659.6 L437.5,658.2 L439.1,659.1 L440.8,658.8 L442.5,659.5 L444.1,659.6 L445.8,658.6 L447.5,659.4 L449.1,659.6 L450.8,659.0 L452.5,659.2 L454.1,659.3 L455.8,659.2 L457.5,659.4 L459.1,659.6 L460.8,659.6 L462.5,659.4 L464.1,659.6 L465.8,658.7 L467.5,658.5 L469.1,659.6 L470.8,659.6 L472.5,659.4 L474.1,659.5 L475.8,658.5 L477.5,659.6 L479.1,658.1 L480.8,659.4 L482.5,659.2 L484.1,659.2 L485.8,659.6 L487.5,658.7 L489.1,659.6 L490.8,659.2 L492.5,659.4 L494.1,659.4 L495.8,659.1 L497.4,658.7 L499.1,659.2 L500.8,659.4 L502.4,659.4 L504.1,659.5 L505.8,659.6 L507.4,658.8 L509.1,658.7 L510.8,659.6 L512.4,659.1 L514.1,658.6 L515.8,659.5 L517.4,659.6 L519.1,658.8 L520.8,659.0 L522.4,659.4 L524.1,659.6 L525.8,659.6 L527.4,659.4 L529.1,659.5 L530.8,659.1 L532.4,659.6 L534.1,659.0 L535.8,658.5 L537.4,658.6 L539.1,659.6 L540.8,659.0 L542.4,659.4 L544.1,658.2 L545.8,659.3 L547.4,659.6 L549.1,658.7 L550.8,658.8 L552.4,659.6 L554.1,659.6 L555.8,659.3 L557.4,659.6 L559.1,659.3" fill="none" stroke="#7eb26d" stroke-width="1.3" stroke-linejoin="round"/><path d="M60.9,612.5 L62.3,590.9 L62.6,592.2 L64.2,602.9 L65.9,610.8 L67.0,597.2 L67.6,603.6 L69.2,608.9 L70.6,594.0 L70.9,601.1 L72.6,624.7 L74.2,659.6 L75.9,658.8 L77.6,650.2 L78.1,644.9 L79.2,654.7 L80.9,659.4 L82.6,659.6 L84.2,659.6 L85.9,623.9 L87.6,573.3 L88.0,574.2 L89.2,592.9 L90.9,645.1 L92.6,659.0 L94.2,659.6 L95.9,659.5 L97.6,659.5 L99.2,641.6 L100.9,623.1 L102.6,611.7 L104.2,610.6 L105.9,618.6 L107.6,622.9 L109.2,609.6 L110.9,611.1 L112.6,615.6 L114.2,615.4 L115.9,609.0 L117.6,605.4 L119.2,610.4 L120.9,614.5 L122.6,608.9 L124.2,607.9 L125.9,616.4 L127.5,609.2 L129.2,615.6 L130.9,596.7 L132.0,578.5 L132.5,587.5 L134.2,617.1 L135.9,605.0 L137.0,599.7 L137.5,597.5 L139.2,619.1 L140.9,613.9 L142.5,613.8 L144.2,614.6 L145.9,611.2 L147.5,611.1 L149.2,605.3 L150.9,610.3 L152.5,607.9 L154.2,616.2 L155.9,608.1 L157.5,599.0 L158.0,592.8 L159.2,602.5 L160.9,615.4 L162.5,616.9 L164.2,614.9 L165.9,598.9 L166.1,589.2 L167.5,617.3 L169.2,611.9 L170.9,608.3 L172.5,612.6 L174.2,617.4 L175.9,615.3 L177.5,610.0 L179.2,609.3 L180.9,612.6 L182.5,610.8 L184.2,606.9 L185.9,613.3 L187.5,594.0 L187.9,601.7 L189.2,601.5 L190.9,617.4 L192.5,607.1 L194.2,612.0 L195.9,617.8 L197.5,611.6 L199.2,610.0 L200.9,609.9 L202.5,611.6 L204.2,612.7 L205.9,613.2 L207.5,611.7 L209.2,607.5 L210.9,610.3 L212.5,609.5 L214.2,611.4 L215.9,606.8 L217.5,603.1 L219.2,603.8 L220.9,616.6 L222.5,615.3 L224.2,616.0 L225.9,613.4 L227.5,604.7 L229.2,613.4 L230.9,611.7 L232.5,612.9 L234.2,619.2 L235.9,616.6 L237.5,614.8 L239.2,615.3 L240.9,598.0 L241.9,584.3 L242.5,591.4 L244.2,618.2 L245.9,608.3 L247.5,596.3 L248.0,595.1 L249.2,608.2 L250.8,611.8 L251.9,605.2 L252.5,602.0 L254.2,637.3 L255.8,656.9 L257.5,656.5 L259.2,659.1 L260.8,658.9 L262.5,657.4 L264.2,658.4 L265.8,658.5 L267.5,658.3 L269.2,657.5 L270.8,659.2 L272.5,657.9 L274.2,656.9 L275.8,658.4 L277.5,658.3 L279.2,657.5 L280.8,657.1 L282.5,657.1 L284.2,657.5 L285.8,656.5 L287.5,658.5 L289.2,656.5 L290.8,657.4 L292.5,658.2 L294.2,659.3 L295.8,656.6 L297.5,657.7 L299.2,657.5 L300.8,656.6 L302.5,658.4 L304.2,657.3 L305.8,657.2 L307.5,656.5 L309.2,657.7 L310.8,656.3 L312.5,658.5 L314.2,658.0 L315.5,655.8 L315.8,656.7 L317.5,656.5 L319.2,657.8 L320.8,658.1 L322.5,657.9 L324.2,657.9 L325.8,659.4 L327.5,658.5 L329.2,657.7 L330.8,659.2 L332.5,658.3 L334.2,658.4 L335.8,659.0 L337.5,659.3 L339.2,658.6 L340.8,657.9 L342.5,657.6 L344.2,659.5 L345.8,658.0 L347.5,657.6 L349.2,659.6 L350.8,659.3 L352.5,657.6 L354.2,657.5 L355.8,657.6 L357.5,656.7 L359.2,657.5 L360.8,656.9 L362.5,658.1 L364.2,658.1 L365.8,659.0 L367.5,658.0 L369.2,658.5 L370.8,658.7 L372.5,657.6 L374.1,657.8 L375.8,658.6 L377.5,658.0 L379.1,657.9 L380.8,657.8 L382.5,658.8 L384.1,655.5 L384.7,655.1 L385.8,657.1 L387.5,658.7 L389.1,656.3 L390.8,659.5 L392.5,657.3 L394.1,659.1 L395.8,656.7 L397.5,659.4 L399.1,657.6 L400.8,658.4 L402.5,657.4 L404.1,659.4 L405.8,658.5 L407.5,657.8 L409.1,657.5 L410.8,658.8 L412.5,659.6 L414.1,658.6 L415.8,658.9 L417.5,658.2 L419.1,658.7 L420.8,659.2 L422.5,658.5 L424.1,657.0 L425.8,657.8 L427.5,658.6 L429.1,657.7 L430.8,659.6 L432.5,658.8 L434.1,658.4 L435.8,658.7 L437.5,658.9 L439.1,658.3 L440.8,656.7 L442.5,658.4 L444.1,658.0 L445.8,656.8 L447.5,659.6 L449.1,658.6 L450.8,657.5 L452.5,659.6 L454.1,658.7 L455.8,657.1 L457.5,658.3 L459.1,658.2 L460.8,656.4 L462.5,659.6 L464.1,657.3 L465.8,659.5 L467.5,658.0 L469.1,657.8 L470.8,658.3 L472.5,658.6 L474.1,657.6 L475.8,655.7 L476.1,654.8 L477.5,657.5 L479.1,657.8 L480.8,656.8 L482.5,658.8 L484.1,659.6 L485.8,659.6 L487.5,658.6 L489.1,659.6 L490.8,658.8 L492.5,658.3 L494.1,657.0 L495.8,659.6 L497.4,658.0 L499.1,659.6 L500.8,657.6 L502.4,659.6 L504.1,657.0 L505.8,658.7 L507.4,656.4 L509.1,658.3 L510.8,659.3 L512.4,658.9 L514.1,659.1 L515.8,658.2 L517.4,657.3 L519.1,658.2 L520.8,658.8 L522.4,658.7 L524.1,656.9 L525.8,659.4 L527.4,657.8 L529.1,659.3 L530.8,659.2 L532.4,657.9 L534.1,659.6 L535.8,657.0 L537.4,657.0 L539.1,659.4 L540.8,659.6 L542.4,658.7 L544.1,658.8 L545.8,659.2 L547.4,657.6 L549.1,656.3 L550.8,658.7 L552.4,657.9 L554.1,658.9 L555.8,658.6 L557.4,659.1 L559.1,658.7" fill="none" stroke="#eab839" stroke-width="1.3" stroke-linejoin="round"/><path d="M60.9,628.8 L62.6,628.4 L64.2,627.7 L65.9,624.0 L67.6,626.7 L69.2,631.4 L70.9,623.8 L72.6,638.1 L74.2,659.5 L75.9,659.2 L77.6,659.0 L79.2,658.1 L80.9,658.6 L82.6,659.2 L84.2,659.6 L85.9,625.5 L87.6,563.9 L88.0,562.8 L89.2,588.9 L90.9,652.7 L92.6,658.7 L94.2,659.6 L95.9,659.6 L97.6,658.0 L99.2,646.4 L100.9,637.1 L102.6,628.1 L104.2,628.2 L105.9,625.7 L107.6,632.6 L109.2,625.7 L110.9,633.4 L112.6,637.2 L114.2,629.0 L115.9,629.8 L117.6,622.8 L119.2,623.6 L120.9,630.9 L122.6,622.9 L124.2,630.1 L125.9,626.5 L127.5,627.3 L129.2,625.7 L130.9,623.0 L132.5,623.7 L134.2,624.8 L135.9,623.7 L137.5,624.3 L139.2,628.6 L140.9,629.0 L142.5,628.0 L144.2,624.2 L145.9,627.1 L147.5,617.1 L149.2,629.3 L150.9,630.4 L152.5,623.2 L154.2,620.7 L155.9,624.2 L157.5,622.9 L159.2,620.6 L160.9,626.5 L162.5,631.7 L164.2,628.2 L165.9,622.5 L167.5,631.8 L169.2,626.0 L170.9,625.2 L172.5,627.4 L174.2,623.4 L175.9,623.9 L177.5,617.2 L179.2,623.8 L180.9,628.5 L182.5,628.4 L184.2,629.4 L185.9,622.5 L187.5,628.4 L189.2,626.4 L190.9,623.3 L192.5,629.0 L194.2,627.3 L195.9,633.3 L197.5,630.4 L199.2,628.4 L200.9,624.6 L202.5,621.5 L204.2,626.2 L205.9,625.2 L207.5,625.5 L209.2,622.0 L210.9,622.7 L212.5,625.1 L214.2,630.1 L215.9,622.7 L217.5,624.7 L219.2,621.4 L220.9,626.3 L222.5,618.6 L224.2,627.6 L225.9,620.0 L227.5,625.7 L229.2,628.2 L230.9,630.5 L232.5,626.8 L234.2,620.7 L235.9,623.0 L237.5,623.5 L239.2,635.4 L240.9,623.4 L242.5,624.0 L244.2,628.3 L245.9,628.6 L247.5,626.2 L249.2,619.5 L250.8,630.3 L252.5,627.8 L254.2,641.5 L255.8,657.2 L257.5,655.9 L259.2,654.2 L260.8,654.4 L262.5,651.7 L264.2,652.2 L265.8,651.7 L267.5,654.2 L269.2,653.4 L270.8,657.2 L272.5,656.4 L274.2,659.3 L275.8,658.0 L277.5,657.5 L279.2,656.0 L280.8,659.6 L282.5,656.8 L284.2,657.3 L285.8,656.3 L287.5,657.1 L289.2,657.8 L290.8,658.4 L292.5,659.2 L294.2,657.7 L295.8,658.1 L297.5,655.8 L299.2,658.5 L300.8,657.5 L302.5,659.5 L304.2,658.3 L305.8,657.6 L307.5,657.0 L309.2,656.4 L310.8,657.9 L312.5,659.1 L314.2,657.4 L315.8,657.3 L317.5,657.4 L319.2,658.6 L320.8,656.7 L322.5,657.8 L324.2,657.1 L325.8,656.5 L327.5,657.2 L329.2,657.6 L330.8,655.6 L332.5,657.6 L334.2,658.2 L335.8,657.8 L337.5,656.3 L339.2,657.8 L340.8,657.3 L342.5,656.6 L344.2,658.4 L345.8,659.6 L347.5,657.6 L349.2,657.6 L350.8,658.5 L352.5,657.0 L354.2,657.2 L355.8,658.9 L357.5,657.3 L359.2,658.1 L360.8,659.5 L362.5,657.4 L364.2,657.9 L365.8,658.7 L367.5,657.3 L369.2,657.4 L370.8,658.5 L372.5,657.5 L374.1,656.8 L375.8,658.6 L377.5,657.5 L379.1,657.9 L380.8,655.5 L382.5,659.6 L384.1,657.2 L385.8,658.2 L387.5,658.0 L389.1,655.9 L390.8,657.9 L392.5,655.5 L394.1,658.4 L395.8,657.5 L397.5,658.4 L399.1,658.6 L400.8,657.8 L402.5,658.2 L404.1,657.7 L405.8,659.6 L407.5,655.8 L409.1,658.1 L410.8,656.0 L412.5,659.0 L414.1,657.6 L415.8,654.5 L417.5,658.8 L419.1,659.5 L420.8,658.5 L422.5,657.4 L424.1,657.2 L425.8,656.5 L427.5,658.2 L429.1,659.6 L430.8,658.3 L432.5,656.6 L434.1,657.4 L435.8,659.6 L437.5,657.9 L439.1,656.4 L440.8,655.6 L442.5,657.3 L444.1,657.6 L445.8,659.2 L447.5,658.8 L449.1,657.8 L450.8,657.4 L452.5,657.3 L454.1,658.4 L455.8,659.1 L457.5,658.7 L459.1,659.1 L460.8,657.2 L462.5,659.6 L464.1,658.2 L465.8,657.4 L467.5,656.3 L469.1,657.8 L470.8,656.8 L472.5,658.3 L474.1,658.7 L475.8,658.6 L477.5,656.3 L479.1,656.8 L480.8,657.4 L482.5,654.4 L484.1,657.9 L485.8,657.2 L487.5,657.6 L489.1,658.1 L490.8,655.4 L492.5,656.3 L494.1,659.4 L495.8,658.3 L497.4,657.4 L499.1,657.1 L500.8,659.3 L502.4,659.6 L504.1,659.6 L505.8,658.0 L507.4,658.0 L509.1,657.5 L510.8,658.7 L512.4,659.2 L514.1,659.6 L515.8,657.5 L517.4,657.5 L519.1,656.8 L520.8,657.0 L522.4,658.1 L524.1,656.5 L525.8,658.0 L527.4,658.6 L529.1,658.4 L530.8,658.5 L532.4,659.6 L534.1,657.7 L535.8,657.6 L537.4,658.3 L539.1,658.6 L540.8,657.5 L542.4,656.1 L544.1,657.8 L545.8,658.4 L547.4,658.5 L549.1,658.0 L550.8,659.2 L552.4,658.0 L554.1,657.8 L555.8,655.9 L557.4,656.9 L559.1,656.8" fill="none" stroke="#6ed0e0" stroke-width="1.3" stroke-linejoin="round"/><path d="M60.9,646.4 L62.6,638.4 L63.7,622.5 L64.2,632.1 L65.9,645.5 L67.6,645.7 L69.2,646.2 L70.9,644.5 L72.6,652.5 L74.2,658.4 L75.9,658.5 L77.6,659.4 L79.2,658.7 L80.9,658.5 L82.6,659.6 L84.2,659.6 L85.9,650.8 L87.6,631.4 L88.0,623.6 L89.2,639.3 L90.9,659.6 L92.6,659.6 L94.2,659.3 L95.9,659.1 L97.6,659.0 L99.2,657.7 L100.9,650.7 L102.6,648.7 L104.2,649.3 L105.9,651.7 L107.6,653.6 L109.2,645.4 L110.9,649.2 L112.6,653.2 L114.2,645.9 L115.9,652.3 L117.6,647.3 L119.2,652.5 L120.9,649.5 L122.6,649.2 L124.2,643.4 L125.9,651.9 L127.5,650.8 L129.2,645.2 L130.9,645.0 L132.5,647.9 L134.2,649.9 L135.9,649.8 L137.5,652.7 L139.2,645.3 L140.9,646.0 L142.5,645.5 L144.2,645.5 L145.9,646.4 L147.5,644.9 L149.2,650.3 L150.9,642.1 L152.5,646.5 L154.2,649.3 L155.9,650.3 L157.5,647.9 L159.2,644.3 L160.5,628.0 L160.9,630.3 L162.5,640.7 L164.2,645.0 L165.9,643.9 L167.5,644.6 L169.2,649.3 L170.9,648.1 L172.5,647.3 L174.2,643.7 L175.9,650.3 L177.5,640.0 L179.2,648.6 L180.9,649.2 L182.5,648.1 L184.2,649.2 L185.9,645.9 L187.5,638.6 L188.2,626.8 L189.2,643.1 L190.9,642.9 L192.5,643.9 L194.2,644.7 L195.9,651.8 L197.5,644.5 L199.2,645.2 L200.9,648.7 L202.5,643.3 L204.2,641.8 L205.9,643.4 L207.5,645.4 L209.2,648.5 L210.9,643.7 L212.5,647.6 L214.2,643.9 L215.9,647.6 L217.5,647.4 L219.2,643.5 L220.9,646.4 L222.5,650.6 L224.2,641.5 L225.9,643.2 L227.5,642.5 L229.2,648.4 L230.9,644.3 L232.5,641.9 L234.2,643.0 L235.9,645.7 L237.5,641.7 L239.2,645.1 L240.9,648.6 L242.5,644.7 L244.2,645.7 L245.9,647.5 L247.5,641.3 L249.2,646.9 L250.8,640.3 L252.5,645.9 L254.2,652.2 L255.8,659.1 L257.5,658.4 L259.2,659.3 L260.8,658.9 L262.5,658.7 L264.2,659.5 L265.8,659.5 L267.5,659.6 L269.2,659.6 L270.8,657.5 L272.5,659.5 L274.2,658.5 L275.8,659.6 L277.5,657.6 L279.2,658.5 L280.8,658.0 L282.3,641.4 L282.5,642.8 L284.2,659.6 L285.8,659.6 L287.5,657.9 L289.2,658.2 L290.8,658.6 L292.5,659.1 L294.2,659.3 L295.8,659.6 L297.5,659.2 L299.2,658.8 L300.8,658.1 L302.5,659.0 L304.2,659.6 L305.8,659.6 L307.5,659.6 L309.2,659.6 L310.8,658.3 L312.5,657.9 L314.2,658.2 L315.8,659.5 L317.5,659.6 L319.2,658.2 L320.8,659.6 L322.5,659.3 L324.2,659.6 L325.8,659.3 L327.5,659.5 L329.2,658.1 L330.8,659.6 L332.5,659.3 L334.2,659.3 L335.8,659.6 L337.5,659.2 L339.2,659.6 L340.8,659.6 L342.5,659.1 L344.2,658.8 L345.8,658.2 L347.5,658.2 L349.2,658.8 L350.8,659.2 L352.5,659.6 L354.2,658.5 L355.8,659.6 L357.5,658.5 L359.2,659.6 L360.8,659.0 L362.5,657.9 L364.2,659.6 L365.8,658.6 L367.5,659.2 L369.2,659.5 L370.8,655.1 L370.9,653.1 L372.5,657.8 L374.1,659.4 L375.8,659.6 L377.5,658.8 L379.1,659.6 L380.8,659.3 L382.5,658.9 L384.1,658.1 L385.8,659.5 L387.5,659.4 L389.1,658.7 L390.8,659.6 L392.5,659.2 L394.1,658.5 L395.8,659.1 L397.5,657.0 L399.1,657.2 L400.8,659.6 L402.5,659.1 L404.1,659.2 L405.8,659.6 L407.5,659.6 L409.1,657.9 L410.8,659.1 L412.5,659.1 L414.1,657.4 L415.8,658.6 L417.5,659.6 L419.1,659.6 L420.8,659.6 L422.5,658.9 L424.1,659.4 L425.8,658.3 L427.5,659.3 L429.1,658.4 L430.8,657.3 L432.5,659.5 L434.1,659.2 L435.8,659.0 L437.5,657.6 L439.1,659.6 L440.8,659.6 L442.5,659.6 L444.1,658.9 L445.8,659.6 L447.5,659.6 L449.1,657.9 L450.8,659.4 L452.5,658.7 L454.1,658.7 L455.8,658.6 L457.5,659.3 L459.1,659.6 L460.8,657.1 L462.5,659.1 L464.1,659.0 L465.8,658.6 L467.5,658.1 L469.1,659.6 L470.8,659.6 L472.5,657.9 L474.1,658.1 L475.8,659.3 L477.5,659.6 L479.1,658.5 L480.8,658.2 L482.5,659.6 L484.1,658.5 L485.8,659.0 L487.5,658.6 L489.1,658.7 L490.8,658.3 L492.5,659.2 L494.1,658.5 L495.8,658.7 L497.4,657.9 L499.1,658.8 L500.8,659.4 L502.4,659.2 L503.7,655.2 L504.1,656.3 L505.8,659.0 L507.4,659.0 L509.1,658.9 L510.8,658.0 L512.4,659.6 L514.1,657.9 L515.8,658.0 L517.4,659.4 L519.1,659.5 L520.8,659.5 L522.4,659.1 L524.1,659.2 L525.8,658.3 L527.4,657.5 L529.1,659.6 L530.8,658.7 L532.4,658.3 L534.1,659.6 L535.8,658.5 L537.4,658.1 L539.1,658.5 L540.8,659.6 L542.4,658.4 L544.1,659.1 L545.8,659.4 L547.4,658.6 L549.1,659.1 L550.8,658.4 L552.4,659.6 L554.1,659.6 L555.8,658.6 L557.4,659.3 L559.1,657.7" fill="none" stroke="#a8201c" stroke-width="1.3" stroke-linejoin="round"/><path d="M60.9,626.2 L62.6,628.9 L64.2,627.6 L65.9,626.7 L67.6,631.1 L69.2,632.7 L70.9,631.0 L72.6,638.1 L74.2,658.5 L75.9,659.5 L77.6,659.6 L79.2,658.2 L80.9,659.6 L82.6,659.6 L84.2,659.6 L85.9,611.6 L87.6,528.1 L88.0,530.8 L89.2,563.5 L90.9,650.1 L92.6,659.6 L94.2,659.6 L95.9,659.4 L97.6,659.6 L99.2,649.8 L100.9,638.1 L102.6,632.3 L104.2,630.7 L105.9,624.8 L107.6,628.2 L109.2,629.1 L110.9,632.0 L112.6,627.1 L114.2,631.6 L115.9,624.6 L117.6,625.6 L119.2,634.6 L120.9,632.3 L122.6,629.5 L124.2,630.1 L125.9,632.5 L127.5,632.4 L129.2,626.9 L130.9,630.4 L132.5,633.2 L134.2,629.7 L135.9,626.2 L137.5,624.1 L139.2,628.7 L140.9,629.8 L142.5,631.1 L144.2,616.2 L145.0,592.1 L145.9,611.4 L147.5,625.3 L149.2,629.5 L150.9,626.3 L152.5,626.7 L154.2,627.5 L155.9,635.7 L157.5,629.0 L159.2,629.6 L160.9,625.0 L162.5,629.6 L164.2,627.5 L165.9,628.0 L167.5,625.2 L169.2,626.6 L170.9,625.8 L172.5,624.5 L174.2,626.0 L175.9,626.5 L177.5,629.4 L179.2,628.4 L180.9,622.6 L182.5,628.6 L184.2,627.2 L185.9,628.8 L187.5,629.4 L189.2,637.1 L190.9,623.8 L192.5,631.9 L194.2,630.9 L195.9,624.8 L197.5,635.2 L199.2,628.5 L200.9,630.1 L202.5,633.7 L204.2,626.8 L205.9,630.7 L207.5,628.8 L209.2,629.7 L210.9,626.7 L212.5,622.1 L214.2,632.0 L215.9,626.1 L217.5,630.4 L219.2,629.5 L220.9,633.8 L222.5,631.7 L224.2,629.7 L225.9,626.1 L227.5,627.7 L229.2,626.8 L230.9,626.3 L232.5,632.3 L234.2,624.3 L235.9,629.3 L237.5,626.4 L239.2,628.9 L240.9,627.6 L242.5,626.5 L244.2,634.7 L245.9,622.6 L247.5,627.8 L249.2,625.2 L250.8,627.7 L252.5,628.0 L254.2,645.7 L255.8,658.3 L257.5,659.6 L259.2,658.0 L260.8,656.2 L262.5,659.6 L264.2,658.6 L265.8,658.3 L267.5,656.7 L269.2,656.6 L270.8,657.8 L272.5,657.8 L274.2,658.1 L275.8,658.4 L277.5,658.4 L279.2,658.4 L280.8,658.1 L282.5,657.8 L284.2,656.7 L285.1,651.6 L285.8,655.4 L287.5,657.4 L289.2,659.4 L290.8,658.7 L292.5,657.8 L294.2,657.6 L295.8,658.1 L297.5,656.3 L299.2,658.2 L300.8,656.4 L302.5,656.5 L304.2,657.2 L305.8,657.5 L307.5,657.4 L309.2,658.1 L310.8,659.1 L312.5,658.5 L314.2,658.6 L315.8,658.4 L317.5,658.7 L319.2,659.1 L320.8,657.8 L322.5,656.5 L324.2,658.9 L325.8,655.3 L326.6,648.0 L327.5,655.5 L329.2,659.1 L330.8,659.3 L332.5,658.1 L334.2,657.4 L335.8,655.6 L337.5,659.2 L339.2,659.5 L340.8,658.2 L342.5,658.1 L344.2,656.3 L345.8,656.6 L347.5,658.7 L349.2,659.6 L350.8,657.4 L352.5,658.5 L354.2,656.6 L355.8,658.1 L357.5,658.2 L359.2,659.3 L360.8,658.1 L362.5,656.8 L364.2,658.9 L365.8,657.8 L367.5,658.6 L369.2,657.1 L370.8,658.1 L372.5,657.4 L374.1,657.7 L375.8,659.0 L377.5,659.2 L379.1,656.6 L380.8,658.4 L382.5,659.1 L384.1,658.7 L385.8,656.3 L387.5,657.9 L389.1,656.9 L390.8,659.6 L392.5,655.6 L394.1,658.0 L395.8,656.6 L397.5,658.4 L399.1,658.1 L400.8,657.1 L402.5,656.1 L404.1,657.9 L405.8,658.8 L407.5,657.0 L409.1,655.8 L410.8,659.5 L412.5,659.0 L414.1,657.4 L415.8,658.5 L417.5,659.6 L419.1,658.1 L420.8,657.8 L422.5,657.3 L424.1,656.6 L425.8,659.5 L427.5,658.6 L429.1,658.1 L430.8,657.6 L432.5,658.9 L434.1,658.1 L435.8,658.9 L437.5,657.2 L439.1,656.8 L440.8,658.9 L442.5,657.5 L444.1,659.2 L445.8,657.7 L447.5,659.6 L449.1,657.8 L450.8,656.9 L452.5,657.1 L454.1,659.6 L455.8,658.0 L457.5,658.5 L459.1,656.6 L460.8,657.7 L462.5,656.6 L464.1,658.7 L465.8,659.3 L467.5,659.6 L469.1,657.8 L470.8,658.4 L472.5,657.8 L474.1,658.3 L475.8,657.9 L477.5,656.6 L479.1,659.4 L480.8,657.6 L482.5,656.8 L484.1,657.6 L485.8,656.2 L487.5,658.5 L489.1,658.0 L490.8,658.5 L492.5,658.5 L494.1,656.3 L495.8,659.6 L497.4,658.8 L499.1,658.7 L500.8,658.1 L502.4,658.5 L504.1,657.5 L505.8,657.6 L507.4,656.2 L509.1,657.2 L510.8,659.1 L512.4,659.6 L514.1,658.6 L515.8,658.8 L517.4,658.4 L519.1,656.8 L520.8,657.8 L522.4,659.6 L524.1,659.0 L525.8,656.5 L527.4,659.5 L529.1,657.4 L530.8,657.3 L532.4,659.5 L534.1,659.6 L535.8,657.9 L537.4,657.9 L539.1,657.1 L540.8,657.6 L542.4,659.3 L544.1,656.3 L545.8,658.0 L547.4,658.1 L549.1,658.0 L550.8,659.6 L552.4,659.1 L554.1,657.4 L555.8,657.5 L557.4,658.8 L559.1,658.1" fill="none" stroke="#1f78c1" stroke-width="1.3" stroke-linejoin="round"/><path d="M60.9,642.6 L62.6,633.6 L63.7,623.3 L64.2,632.2 L65.9,638.7 L67.6,638.0 L69.2,638.5 L70.9,638.5 L72.6,643.9 L74.2,658.2 L75.9,657.5 L77.6,659.6 L79.2,659.6 L80.9,658.7 L82.6,659.6 L84.2,659.6 L85.9,634.0 L87.6,592.8 L88.0,582.6 L89.2,613.2 L90.9,654.6 L92.6,659.4 L94.2,659.0 L95.9,659.6 L97.6,659.6 L99.2,655.3 L100.9,642.8 L102.6,641.6 L104.2,650.1 L105.9,641.2 L107.6,641.2 L109.2,639.7 L110.9,642.2 L112.6,641.0 L114.2,645.1 L115.9,632.3 L116.3,621.8 L117.6,640.3 L119.2,643.3 L120.9,647.5 L122.6,643.7 L124.2,644.4 L125.9,639.4 L127.5,646.1 L129.2,645.5 L130.9,644.1 L132.5,619.5 L132.9,609.6 L134.2,639.5 L135.9,646.7 L137.5,645.2 L139.2,636.1 L140.9,640.9 L142.5,642.3 L144.2,640.0 L145.9,630.7 L146.7,614.3 L147.5,632.5 L149.2,643.9 L150.9,644.8 L152.5,637.9 L154.2,641.3 L155.9,640.6 L157.5,639.5 L159.2,644.7 L160.9,635.3 L162.5,641.9 L164.2,641.7 L165.9,641.9 L167.5,640.4 L169.2,642.1 L170.9,632.2 L171.6,617.4 L172.5,629.2 L174.2,638.2 L175.9,644.9 L177.5,642.0 L179.2,635.7 L180.9,640.6 L182.5,640.1 L184.2,641.3 L185.9,635.1 L187.5,642.0 L189.2,642.0 L190.9,636.7 L192.5,645.9 L194.2,641.9 L195.9,631.4 L197.5,640.3 L199.2,622.4 L199.3,629.5 L200.9,640.6 L202.5,643.6 L204.2,642.6 L205.9,642.8 L207.5,639.7 L209.2,641.0 L210.9,636.4 L212.5,647.9 L214.2,642.2 L215.9,637.3 L217.5,638.5 L219.2,634.8 L220.9,641.4 L222.5,636.2 L224.2,637.8 L225.9,644.0 L227.5,645.8 L229.2,632.9 L230.9,635.5 L232.5,621.3 L232.5,624.8 L234.2,645.7 L235.9,640.6 L237.5,639.0 L239.2,633.7 L240.9,640.4 L242.5,634.6 L243.6,618.4 L244.2,623.7 L245.9,633.6 L247.5,632.5 L249.2,638.9 L250.8,636.3 L252.5,642.4 L254.2,650.1 L255.8,658.4 L257.5,656.8 L259.2,659.6 L260.8,657.8 L262.5,655.2 L264.2,656.4 L265.8,655.9 L267.5,658.7 L269.2,657.5 L270.8,659.2 L272.5,655.6 L274.2,658.4 L275.8,658.5 L277.5,659.3 L279.2,657.5 L280.8,655.8 L282.5,657.9 L284.2,658.1 L285.8,658.6 L287.5,656.3 L289.2,657.7 L290.8,657.2 L292.5,655.8 L293.4,652.1 L294.2,654.4 L295.8,657.0 L297.5,659.6 L299.2,658.0 L300.8,658.2 L302.5,657.3 L304.2,656.2 L305.8,658.9 L307.5,658.9 L309.2,659.6 L310.8,658.8 L312.5,652.3 L312.8,653.9 L314.2,656.1 L315.8,657.9 L317.5,658.2 L319.2,657.8 L320.8,658.6 L322.5,657.4 L324.2,657.9 L325.8,659.6 L327.5,659.0 L329.2,657.2 L330.8,658.3 L332.5,659.6 L334.2,656.5 L335.8,656.0 L337.5,659.6 L339.2,658.0 L340.8,656.9 L342.5,657.3 L344.2,657.1 L345.8,646.0 L346.0,641.1 L347.5,657.0 L349.2,658.7 L350.8,657.3 L352.5,656.6 L354.2,656.8 L355.8,659.0 L357.5,657.5 L359.2,659.6 L360.8,656.8 L362.5,659.2 L364.2,659.1 L365.8,656.9 L367.5,657.7 L369.2,659.1 L370.8,657.1 L372.5,655.5 L374.1,659.6 L375.8,657.8 L377.5,657.8 L379.1,657.7 L380.8,657.8 L382.5,656.6 L384.1,656.9 L385.8,657.8 L387.5,649.7 L387.5,651.5 L389.1,655.5 L390.8,658.0 L392.5,658.3 L394.1,657.2 L395.8,659.4 L397.5,659.6 L399.1,659.1 L400.8,656.1 L402.5,657.1 L404.1,659.0 L405.8,657.2 L406.9,653.8 L407.5,656.7 L409.1,658.7 L410.8,659.4 L412.5,659.6 L414.1,659.2 L415.8,656.3 L417.5,657.3 L419.1,658.4 L420.8,657.6 L422.5,659.6 L424.1,657.6 L425.8,658.3 L427.5,658.7 L429.1,657.5 L430.8,658.3 L432.5,655.1 L434.1,655.5 L434.6,652.7 L435.8,657.1 L437.5,658.2 L439.1,655.7 L440.8,657.8 L442.5,659.6 L444.1,659.1 L445.8,659.6 L447.5,658.0 L449.1,658.6 L450.8,657.2 L452.5,656.8 L454.1,659.3 L455.8,657.9 L457.5,658.1 L459.1,655.9 L460.8,657.9 L462.5,658.6 L464.1,658.7 L465.8,657.4 L467.5,659.6 L469.1,659.4 L470.8,659.5 L472.5,659.6 L474.1,657.3 L475.8,657.2 L476.1,651.8 L477.5,659.6 L479.1,659.3 L480.8,654.5 L482.5,659.6 L484.1,658.8 L485.8,658.3 L487.5,659.6 L489.1,658.7 L490.8,657.9 L492.5,657.1 L494.1,658.3 L495.8,657.2 L497.4,657.5 L499.1,659.6 L500.8,656.7 L502.4,657.3 L504.1,658.3 L505.8,658.5 L507.4,658.1 L509.1,658.0 L510.8,658.7 L512.4,659.5 L514.1,657.1 L515.8,658.1 L517.4,657.5 L519.1,656.5 L520.8,659.5 L522.4,657.5 L524.1,658.4 L525.8,651.4 L525.9,652.1 L527.4,656.4 L529.1,659.6 L530.8,658.6 L532.4,658.0 L534.1,657.9 L535.8,658.0 L537.4,659.6 L539.1,659.6 L540.8,659.6 L542.4,659.0 L544.1,656.1 L545.8,658.7 L547.4,656.4 L549.1,656.9 L550.8,659.1 L552.4,659.6 L554.1,659.6 L555.8,659.3 L557.4,658.2 L559.1,656.2" fill="none" stroke="#8e3688" stroke-width="1.3" stroke-linejoin="round"/><line x1="60.9" y1="660.0" x2="559.1" y2="660.0" stroke="#b9a3d9" stroke-width="2.2"/></svg>
<svg class="abs" style="left:0;top:0" width="1822" height="704"><line x1="279.4" y1="526" x2="279.4" y2="660" stroke="#6c1a1c" stroke-width="2"/></svg>
<div class="abs" style="left:581px;top:524px;width:298px;height:161px;overflow:hidden">
<div class="cur" style="left:0.0px;top:0.5px;width:287.2px;text-align:right">current</div>
<div class="leg" style="left:0px;top:18px;width:298px;height:26px">
<div class="lrow bg" style="width:298px"></div>
<div class="mk" style="left:11px;background:#7eb26d"></div>
<div class="abs" style="left:32px;top:0;line-height:26px">Inbound: 172.16.116.206:9100</div>
<div class="abs" style="right:10px;top:0;line-height:26px;text-align:right">222 KiB</div>
</div>
<div class="leg" style="left:0px;top:44px;width:298px;height:26px">
<div class="lrow" style="width:298px"></div>
<div class="mk" style="left:11px;background:#eab839"></div>
<div class="abs" style="left:32px;top:0;line-height:26px">Inbound: 172.16.116.213:9100</div>
<div class="abs" style="right:10px;top:0;line-height:26px;text-align:right">355 KiB</div>
</div>
<div class="leg" style="left:0px;top:70px;width:298px;height:26px">
<div class="lrow bg" style="width:298px"></div>
<div class="mk" style="left:11px;background:#6ed0e0"></div>
<div class="abs" style="left:32px;top:0;line-height:26px">Inbound: 172.16.117.177:9100</div>
<div class="abs" style="right:10px;top:0;line-height:26px;text-align:right">760 KiB</div>
</div>
<div class="leg" style="left:0px;top:96px;width:298px;height:26px">
<div class="lrow" style="width:298px"></div>
<div class="mk" style="left:11px;background:#ef843c"></div>
<div class="abs" style="left:32px;top:0;line-height:26px">Inbound: 172.16.116.206:9100</div>
<div class="abs" style="right:10px;top:0;line-height:26px;text-align:right">0 B</div>
</div>
<div class="leg" style="left:0px;top:122px;width:298px;height:26px">
<div class="lrow bg" style="width:298px"></div>
<div class="mk" style="left:11px;background:#e24d42"></div>
<div class="abs" style="left:32px;top:0;line-height:26px">Inbound: 172.16.116.213:9100</div>
<div class="abs" style="right:10px;top:0;line-height:26px;text-align:right">0 B</div>
</div>
<div class="leg" style="left:0px;top:148px;width:298px;height:26px">
<div class="lrow" style="width:298px"></div>
<div class="mk" style="left:11px;background:#1f78c1"></div>
<div class="abs" style="left:32px;top:0;line-height:26px">Inbound: 172.16.117.177:9100</div>
<div class="abs" style="right:10px;top:0;line-height:26px;text-align:right">0 B</div>
</div>
</div>
<div class="abs" style="left:878px;top:525px;width:6px;height:41px;background:#4a4b52;border-radius:3px"></div>
<div class="panel" style="left:914px;top:486px;width:904px;height:209px">
<div class="ptitle">TCP Retrans</div>
<div class="rz"></div></div>
<svg class="abs" style="left:0;top:0" width="1822" height="704"><line x1="969.4" y1="526.50" x2="1427.0" y2="526.50" stroke="#444446" stroke-width="1.6"/><line x1="969.4" y1="559.98" x2="1427.0" y2="559.98" stroke="#3b3b3e" stroke-width="1.6"/><line x1="969.4" y1="593.45" x2="1427.0" y2="593.45" stroke="#3b3b3e" stroke-width="1.6"/><line x1="969.4" y1="626.92" x2="1427.0" y2="626.92" stroke="#3b3b3e" stroke-width="1.6"/><line x1="969.4" y1="660.40" x2="1427.0" y2="660.40" stroke="#3b3b3e" stroke-width="1.6"/><line x1="994.40" y1="526.1" x2="994.40" y2="660.0" stroke="#3a3a3d" stroke-width="1.6"/><line x1="1070.30" y1="526.1" x2="1070.30" y2="660.0" stroke="#3a3a3d" stroke-width="1.6"/><line x1="1146.80" y1="526.1" x2="1146.80" y2="660.0" stroke="#3a3a3d" stroke-width="1.6"/><line x1="1223.50" y1="526.1" x2="1223.50" y2="660.0" stroke="#3a3a3d" stroke-width="1.6"/><line x1="1299.70" y1="526.1" x2="1299.70" y2="660.0" stroke="#3a3a3d" stroke-width="1.6"/><line x1="1375.30" y1="526.1" x2="1375.30" y2="660.0" stroke="#3a3a3d" stroke-width="1.6"/></svg>
<div class="lbl yl" style="left:882.9px;width:80px;top:519.6px">800.0</div>
<div class="lbl yl" style="left:882.9px;width:80px;top:552.6px">600.0</div>
<div class="lbl yl" style="left:882.9px;width:80px;top:585.6px">400.0</div>
<div class="lbl yl" style="left:882.9px;width:80px;top:618.7px">200.0</div>
<div class="lbl yl" style="left:882.9px;width:80px;top:651.7px">0</div>
<div class="lbl xl" style="left:963.6px;top:666.5px">21:00</div>
<div class="lbl xl" style="left:1039.5px;top:666.5px">21:30</div>
<div class="lbl xl" style="left:1116.0px;top:666.5px">22:00</div>
<div class="lbl xl" style="left:1192.7px;top:666.5px">22:30</div>
<div class="lbl xl" style="left:1268.9px;top:666.5px">23:00</div>
<div class="lbl xl" style="left:1344.5px;top:666.5px">23:30</div>
<svg class="abs" style="left:0;top:0" width="1822" height="704"><path d="M969.4,659.9 L970.5,659.9 L971.7,659.9 L972.8,659.4 L974.0,659.2 L975.1,659.6 L976.3,659.5 L977.4,659.9 L978.6,659.5 L979.7,659.6 L980.9,659.1 L982.0,658.8 L983.2,659.5 L984.3,659.7 L985.5,659.5 L986.6,659.7 L987.7,659.7 L988.9,659.3 L990.0,659.5 L991.2,659.4 L992.3,659.9 L993.5,659.5 L994.6,659.7 L995.8,659.2 L996.9,659.4 L998.1,659.5 L999.2,659.5 L1000.4,659.4 L1001.5,659.6 L1002.7,659.7 L1003.8,659.7 L1005.0,659.4 L1006.1,659.4 L1007.2,659.9 L1008.4,659.9 L1009.5,659.3 L1010.7,659.5 L1011.8,659.3 L1013.0,659.3 L1014.1,659.5 L1015.3,659.5 L1016.4,659.4 L1017.6,659.7 L1018.7,659.9 L1019.9,659.2 L1021.0,659.4 L1022.2,659.7 L1023.3,659.4 L1024.4,659.5 L1025.6,659.3 L1026.7,659.1 L1027.9,659.1 L1029.0,659.4 L1030.2,659.2 L1031.3,659.7 L1032.5,659.8 L1033.6,659.8 L1034.8,659.4 L1035.9,659.4 L1037.1,659.6 L1038.2,659.4 L1039.4,659.3 L1040.5,659.5 L1041.7,659.8 L1042.8,659.6 L1043.9,659.4 L1045.1,659.2 L1046.2,659.2 L1047.4,659.5 L1048.5,659.2 L1049.7,659.5 L1050.8,659.3 L1052.0,659.3 L1053.1,659.0 L1054.3,659.7 L1055.4,659.7 L1056.6,659.4 L1057.7,659.0 L1058.9,659.6 L1060.0,659.5 L1061.1,659.2 L1062.3,658.9 L1063.4,659.6 L1064.6,659.3 L1065.7,659.1 L1066.9,659.2 L1068.0,659.5 L1069.2,659.2 L1070.3,659.6 L1071.5,659.8 L1072.6,659.6 L1073.8,659.4 L1074.9,659.6 L1076.1,659.7 L1077.2,660.0 L1078.4,659.9 L1079.5,659.2 L1080.6,659.7 L1081.8,659.6 L1082.9,659.6 L1084.1,659.3 L1085.2,660.0 L1086.4,659.5 L1087.5,659.4 L1088.7,659.8 L1089.8,659.6 L1091.0,659.3 L1092.1,659.8 L1093.3,659.8 L1094.4,659.4 L1095.6,659.9 L1096.7,659.5 L1097.8,659.7 L1099.0,659.8 L1100.1,659.4 L1101.3,659.1 L1102.4,659.3 L1103.6,659.4 L1104.7,659.6 L1105.9,659.5 L1107.0,659.7 L1108.2,659.6 L1109.3,659.6 L1110.5,659.4 L1111.6,659.7 L1112.8,659.3 L1113.9,659.0 L1115.1,659.4 L1116.2,659.2 L1117.3,659.5 L1118.5,659.9 L1119.6,659.6 L1120.8,659.7 L1121.9,659.8 L1123.1,659.8 L1124.2,659.5 L1125.4,659.6 L1126.5,659.4 L1127.7,659.4 L1128.8,659.9 L1130.0,659.1 L1131.1,659.5 L1132.3,659.2 L1133.4,659.5 L1134.5,659.3 L1135.7,659.6 L1136.8,659.8 L1138.0,659.8 L1139.1,659.7 L1140.3,659.4 L1141.4,659.3 L1142.6,659.3 L1143.7,659.6 L1144.9,659.2 L1146.0,659.6 L1147.2,659.6 L1148.3,659.6 L1149.5,659.5 L1150.6,659.7 L1151.8,659.8 L1152.9,659.5 L1154.0,659.3 L1155.2,659.7 L1156.3,659.7 L1157.5,659.3 L1158.6,659.9 L1159.8,659.8 L1160.9,659.4 L1162.1,659.8 L1163.2,659.7 L1164.4,659.8 L1165.5,659.5 L1166.7,659.8 L1167.8,659.2 L1169.0,659.6 L1170.1,659.5 L1171.2,659.6 L1172.4,659.7 L1173.5,659.7 L1174.7,659.2 L1175.8,659.3 L1177.0,659.7 L1178.1,659.8 L1179.3,659.3 L1180.4,659.2 L1181.6,659.9 L1182.7,659.4 L1183.9,659.5 L1185.0,659.7 L1186.2,659.5 L1187.3,659.6 L1188.5,659.3 L1189.6,659.9 L1190.7,659.7 L1191.9,659.6 L1193.0,659.6 L1194.2,660.0 L1195.3,659.4 L1196.5,659.7 L1197.6,659.4 L1198.8,659.7 L1199.9,659.2 L1201.1,659.5 L1202.2,659.4 L1203.4,659.4 L1204.5,659.5 L1205.7,659.5 L1206.8,659.6 L1207.9,659.6 L1209.1,659.3 L1210.2,659.3 L1211.4,659.9 L1212.5,659.4 L1213.7,659.5 L1214.8,659.5 L1216.0,659.4 L1217.1,660.0 L1218.3,659.4 L1219.4,659.8 L1220.6,659.3 L1221.7,660.0 L1222.9,659.5 L1224.0,659.8 L1225.2,659.3 L1226.3,659.3 L1227.4,659.3 L1228.6,659.2 L1229.7,659.4 L1230.9,659.6 L1232.0,659.6 L1233.2,659.9 L1234.3,659.5 L1235.5,659.8 L1236.6,659.0 L1237.8,659.3 L1238.9,659.4 L1240.1,658.8 L1241.2,659.6 L1242.4,659.7 L1243.5,659.5 L1244.6,659.6 L1245.8,659.3 L1246.9,659.7 L1248.1,659.3 L1249.2,659.8 L1250.4,659.1 L1251.5,659.0 L1252.7,659.4 L1253.8,660.0 L1255.0,659.0 L1256.1,659.1 L1257.3,659.8 L1258.4,660.0 L1259.6,659.6 L1260.7,659.4 L1261.9,659.3 L1263.0,659.4 L1264.1,659.4 L1265.3,659.3 L1266.4,659.6 L1267.6,659.4 L1268.7,659.0 L1269.9,659.4 L1271.0,659.8 L1272.2,659.5 L1273.3,659.4 L1274.5,659.3 L1275.6,659.3 L1276.8,659.2 L1277.9,659.7 L1279.1,659.5 L1280.2,659.3 L1281.3,659.3 L1282.5,659.9 L1283.6,659.8 L1284.8,659.5 L1285.9,659.4 L1287.1,659.5 L1288.2,659.4 L1289.4,659.5 L1290.5,659.4 L1291.7,659.6 L1292.8,659.5 L1294.0,659.6 L1295.1,659.2 L1296.3,659.3 L1297.4,659.2 L1298.6,659.6 L1299.7,659.2 L1300.8,659.7 L1302.0,659.3 L1303.1,659.7 L1304.3,659.2 L1305.4,659.7 L1306.6,659.7 L1307.7,659.4 L1308.9,659.5 L1310.0,659.6 L1311.2,659.6 L1312.3,659.5 L1313.5,659.3 L1314.6,659.8 L1315.8,659.4 L1316.9,659.7 L1318.0,659.8 L1319.2,659.4 L1320.3,659.6 L1321.5,659.6 L1322.6,659.2 L1323.8,659.4 L1324.9,659.3 L1326.1,659.3 L1327.2,659.3 L1328.4,659.2 L1329.5,659.6 L1330.7,659.5 L1331.8,659.4 L1333.0,659.8 L1334.1,659.3 L1335.3,659.6 L1336.4,659.7 L1337.5,659.5 L1338.7,659.6 L1339.8,659.7 L1341.0,659.8 L1342.1,659.6 L1343.3,659.3 L1344.4,658.9 L1345.6,659.7 L1346.7,659.0 L1347.9,659.7 L1349.0,659.6 L1350.2,659.6 L1351.3,659.4 L1352.5,659.3 L1353.6,659.3 L1354.7,659.4 L1355.9,659.6 L1357.0,659.8 L1358.2,659.5 L1359.3,659.5 L1360.5,659.5 L1361.6,659.5 L1362.8,659.8 L1363.9,659.7 L1365.1,659.7 L1366.2,659.2 L1367.4,659.7 L1368.5,659.6 L1369.7,659.7 L1370.8,659.8 L1372.0,659.3 L1373.1,659.1 L1374.2,659.7 L1375.4,659.4 L1376.5,659.8 L1377.7,659.5 L1378.8,659.9 L1380.0,659.5 L1381.1,659.6 L1382.3,659.5 L1383.4,660.0 L1384.6,659.4 L1385.7,659.9 L1386.9,659.3 L1388.0,659.5 L1389.2,659.1 L1390.3,659.4 L1391.4,659.9 L1392.6,659.9 L1393.7,659.2 L1394.9,659.3 L1396.0,659.0 L1397.2,659.6 L1398.3,659.3 L1399.5,659.3 L1400.6,659.3 L1401.8,659.5 L1402.9,659.6 L1404.1,659.5 L1405.2,659.0 L1406.4,659.8 L1407.5,659.6 L1408.7,659.4 L1409.8,659.7 L1410.9,659.2 L1412.1,659.2 L1413.2,659.7 L1414.4,659.6 L1415.5,659.4 L1416.7,659.6 L1417.8,659.3 L1419.0,659.4 L1420.1,659.7 L1421.3,659.5 L1422.4,659.7 L1423.6,659.4 L1424.7,659.4 L1425.9,659.2 L1427.0,659.0" fill="none" stroke="#7eb26d" stroke-width="1.5" stroke-linejoin="round"/><path d="M969.4,659.5 L970.5,659.0 L971.7,659.1 L972.8,658.8 L974.0,659.4 L975.1,659.0 L976.3,659.1 L977.4,659.7 L978.6,658.8 L979.7,659.6 L980.9,660.0 L982.0,659.7 L983.2,659.8 L984.3,659.7 L985.5,659.1 L986.6,659.5 L987.7,658.7 L988.9,659.6 L990.0,655.3 L991.2,646.1 L992.3,642.7 L993.5,582.5 L994.6,550.9 L995.8,547.2 L996.9,556.6 L998.1,605.3 L999.2,658.7 L1000.4,659.6 L1001.5,659.1 L1002.7,658.7 L1003.8,660.0 L1005.0,659.0 L1006.1,660.0 L1007.2,659.2 L1008.4,658.6 L1009.5,659.4 L1010.7,659.0 L1011.8,660.0 L1013.0,659.6 L1014.1,659.5 L1015.3,658.9 L1016.4,659.4 L1017.6,658.9 L1018.7,659.3 L1019.9,659.6 L1021.0,659.2 L1022.2,659.1 L1023.3,659.4 L1024.4,658.9 L1025.6,658.8 L1026.6,656.7 L1026.7,656.7 L1027.9,659.2 L1029.0,659.3 L1030.2,659.3 L1031.3,659.9 L1032.5,658.6 L1033.6,659.4 L1034.8,659.0 L1035.9,660.0 L1037.1,658.1 L1038.0,657.6 L1038.2,658.1 L1039.4,659.2 L1040.5,659.0 L1041.7,660.0 L1042.8,659.0 L1043.9,660.0 L1045.1,658.9 L1046.2,659.3 L1047.4,658.9 L1048.5,659.1 L1049.7,659.8 L1050.8,659.6 L1052.0,659.2 L1053.1,659.6 L1054.3,659.4 L1055.4,659.9 L1056.6,659.1 L1057.7,658.2 L1058.9,658.9 L1060.0,659.2 L1061.1,659.9 L1062.3,659.5 L1063.4,658.8 L1064.6,659.4 L1065.7,659.1 L1066.9,659.6 L1068.0,659.6 L1069.2,659.3 L1070.3,659.6 L1071.5,659.7 L1072.6,659.3 L1073.8,659.6 L1074.9,660.0 L1076.1,659.1 L1077.2,658.7 L1078.4,659.3 L1079.5,659.7 L1080.6,660.0 L1081.8,659.8 L1082.9,659.5 L1084.1,659.0 L1085.2,659.5 L1086.4,659.5 L1087.5,660.0 L1088.7,659.4 L1089.8,659.8 L1091.0,658.6 L1092.1,659.3 L1093.3,659.5 L1094.4,658.6 L1095.6,658.6 L1096.7,659.4 L1097.8,660.0 L1099.0,658.9 L1100.1,659.6 L1101.3,659.1 L1102.4,659.9 L1103.6,659.6 L1104.7,659.6 L1105.9,659.9 L1107.0,660.0 L1108.2,659.0 L1109.3,659.6 L1110.5,658.9 L1111.6,659.2 L1112.8,659.4 L1113.9,659.2 L1115.1,659.6 L1116.2,659.5 L1117.3,659.3 L1118.5,659.3 L1119.6,659.7 L1120.8,659.1 L1121.9,659.3 L1123.1,658.7 L1124.2,659.7 L1125.4,658.3 L1126.5,659.4 L1127.7,658.9 L1128.8,659.2 L1130.0,660.0 L1131.1,659.5 L1132.3,658.9 L1133.4,658.8 L1134.5,659.5 L1135.7,658.7 L1136.8,658.9 L1138.0,659.6 L1139.1,658.8 L1140.3,659.4 L1141.4,660.0 L1142.6,659.1 L1143.7,659.3 L1144.9,659.6 L1146.0,659.8 L1147.2,658.5 L1147.4,657.5 L1148.3,659.1 L1149.5,659.9 L1150.6,659.9 L1151.8,658.9 L1152.9,658.7 L1154.0,659.9 L1155.2,659.7 L1156.3,659.1 L1157.5,659.0 L1158.6,659.6 L1159.8,659.2 L1160.9,658.6 L1162.1,659.7 L1163.2,659.6 L1164.4,659.4 L1165.5,659.2 L1166.7,659.4 L1167.8,659.9 L1169.0,659.4 L1170.1,659.0 L1171.2,659.9 L1172.4,659.8 L1173.5,659.7 L1174.7,658.6 L1175.8,659.5 L1177.0,659.9 L1178.1,658.8 L1179.3,658.9 L1180.4,659.6 L1181.6,659.3 L1182.7,659.3 L1183.9,659.1 L1185.0,659.5 L1186.2,659.3 L1187.3,659.7 L1188.5,659.4 L1189.6,659.2 L1190.7,659.3 L1191.9,659.6 L1193.0,660.0 L1194.2,659.3 L1195.3,659.5 L1196.5,659.4 L1197.6,658.6 L1198.8,659.3 L1199.9,659.5 L1201.1,659.2 L1202.2,660.0 L1203.4,659.5 L1204.5,659.5 L1205.7,659.2 L1206.8,659.2 L1207.9,659.0 L1209.1,659.4 L1210.2,659.6 L1211.4,659.4 L1212.5,660.0 L1213.7,659.8 L1214.8,659.6 L1216.0,658.9 L1217.1,659.3 L1218.3,660.0 L1219.4,659.1 L1220.6,659.2 L1221.7,659.3 L1222.9,658.9 L1224.0,659.4 L1225.2,658.9 L1226.3,659.2 L1227.4,659.8 L1228.6,659.3 L1229.7,659.1 L1230.9,658.5 L1232.0,659.6 L1233.2,659.4 L1234.3,660.0 L1235.5,659.8 L1236.6,660.0 L1237.8,659.4 L1238.9,659.1 L1240.1,660.0 L1241.2,659.0 L1242.4,659.4 L1243.5,659.7 L1244.6,659.4 L1245.8,660.0 L1246.9,659.4 L1248.1,659.4 L1249.2,660.0 L1250.4,659.4 L1251.5,659.8 L1252.7,659.8 L1253.8,659.7 L1255.0,659.4 L1256.1,659.6 L1257.3,659.1 L1258.4,658.8 L1259.6,659.5 L1260.7,659.7 L1261.9,659.4 L1263.0,660.0 L1264.1,659.7 L1265.3,659.8 L1266.4,658.2 L1266.8,658.0 L1267.6,658.7 L1268.7,660.0 L1269.9,659.4 L1271.0,659.3 L1272.2,660.0 L1273.3,658.6 L1274.5,659.2 L1275.6,658.5 L1276.8,659.3 L1277.9,660.0 L1279.1,658.8 L1280.2,659.5 L1281.3,659.3 L1282.5,659.0 L1283.6,659.9 L1284.8,659.1 L1285.9,659.9 L1287.1,658.9 L1288.2,659.2 L1289.4,659.4 L1290.5,659.4 L1291.7,659.2 L1292.8,659.4 L1294.0,660.0 L1295.1,659.1 L1296.3,659.2 L1297.4,659.1 L1298.6,659.4 L1299.7,659.1 L1300.8,658.9 L1302.0,659.0 L1303.1,660.0 L1304.3,659.5 L1305.4,659.0 L1306.6,659.4 L1307.7,658.8 L1308.9,659.4 L1310.0,658.7 L1311.2,660.0 L1312.3,659.4 L1313.5,658.8 L1314.6,660.0 L1315.8,659.5 L1316.9,658.8 L1318.0,659.5 L1319.2,659.4 L1320.3,659.3 L1321.5,659.7 L1322.6,659.6 L1323.8,658.8 L1324.9,659.2 L1326.1,659.8 L1327.2,659.5 L1328.4,659.9 L1329.5,658.9 L1330.7,659.4 L1331.8,659.3 L1333.0,659.2 L1334.1,660.0 L1335.3,659.1 L1336.4,659.4 L1337.5,659.2 L1338.7,659.8 L1339.8,659.6 L1341.0,660.0 L1342.1,659.7 L1343.3,659.8 L1344.4,658.6 L1345.6,659.4 L1346.7,659.5 L1347.9,659.3 L1349.0,659.4 L1350.2,659.8 L1351.3,659.4 L1352.5,659.6 L1353.6,660.0 L1354.7,659.8 L1355.9,659.4 L1357.0,659.3 L1358.2,658.6 L1359.3,659.1 L1360.5,660.0 L1361.6,659.0 L1362.8,659.5 L1363.9,659.5 L1365.1,659.9 L1366.2,659.1 L1367.4,659.0 L1368.5,659.8 L1369.7,659.1 L1370.8,659.8 L1372.0,659.6 L1373.1,658.8 L1374.2,659.4 L1375.4,659.4 L1376.5,660.0 L1377.7,659.7 L1378.8,659.1 L1380.0,659.8 L1381.1,659.8 L1382.3,659.5 L1383.4,660.0 L1384.6,660.0 L1385.7,659.6 L1386.9,659.3 L1388.0,659.3 L1389.2,660.0 L1390.3,659.6 L1391.4,658.7 L1392.6,659.9 L1393.7,659.4 L1394.9,659.1 L1396.0,659.5 L1397.2,659.2 L1398.3,659.4 L1399.5,659.3 L1400.6,659.3 L1401.8,660.0 L1402.9,658.9 L1404.1,659.6 L1405.2,659.4 L1406.4,660.0 L1407.5,659.8 L1408.7,659.6 L1409.8,659.9 L1410.9,659.2 L1412.1,659.2 L1413.2,659.0 L1414.4,659.4 L1415.5,659.9 L1416.7,659.3 L1417.8,659.5 L1419.0,659.7 L1420.1,659.3 L1421.3,660.0 L1422.4,659.3 L1423.6,659.5 L1424.7,659.1 L1425.9,659.7 L1427.0,659.6" fill="none" stroke="#eab839" stroke-width="2.0" stroke-linejoin="round"/><path d="M969.4,658.9 L970.5,659.0 L971.7,659.1 L972.8,659.5 L974.0,658.6 L975.1,659.2 L976.3,658.8 L977.4,659.1 L978.6,658.6 L979.7,659.0 L980.9,658.8 L982.0,658.6 L983.2,659.1 L984.3,659.1 L985.5,659.0 L986.6,659.0 L987.7,658.8 L988.9,658.9 L990.0,659.0 L991.2,658.7 L992.3,658.9 L993.5,657.8 L994.6,655.3 L994.8,656.4 L995.8,656.1 L996.9,659.0 L998.1,659.6 L999.2,659.3 L1000.4,658.6 L1001.5,659.4 L1002.7,658.7 L1003.8,658.6 L1005.0,659.3 L1006.1,659.1 L1007.2,658.8 L1008.4,658.9 L1009.5,659.3 L1010.7,659.7 L1011.8,659.3 L1013.0,659.4 L1014.1,659.0 L1015.3,659.0 L1016.4,659.3 L1017.6,659.4 L1018.7,659.3 L1019.9,658.9 L1021.0,658.8 L1022.2,658.8 L1023.3,658.6 L1024.4,658.6 L1025.6,658.4 L1026.6,656.8 L1026.7,657.9 L1027.9,658.2 L1029.0,659.0 L1030.2,659.7 L1031.3,658.4 L1032.5,658.2 L1033.6,658.6 L1034.8,659.6 L1035.9,659.8 L1037.1,658.7 L1038.2,658.9 L1039.4,659.3 L1040.5,659.3 L1041.7,659.8 L1042.8,658.5 L1043.9,658.0 L1044.4,657.1 L1045.1,657.5 L1046.2,658.2 L1047.4,658.7 L1048.5,658.6 L1049.7,658.5 L1050.8,658.7 L1052.0,659.3 L1053.1,658.9 L1054.3,659.0 L1055.4,659.3 L1056.6,659.1 L1057.7,659.1 L1058.9,659.6 L1060.0,659.7 L1061.1,659.0 L1062.3,658.8 L1063.4,658.7 L1064.6,658.5 L1065.7,658.9 L1066.9,659.0 L1068.0,659.3 L1069.2,659.5 L1070.3,659.8 L1071.5,659.2 L1072.6,658.8 L1073.8,659.0 L1074.9,658.2 L1076.1,658.4 L1077.2,658.7 L1078.4,659.1 L1079.5,658.3 L1080.6,658.4 L1081.8,659.6 L1082.9,658.8 L1084.1,658.5 L1085.2,659.4 L1086.4,658.3 L1087.5,659.1 L1088.7,658.8 L1089.8,659.2 L1091.0,658.9 L1092.1,658.9 L1093.3,658.4 L1094.4,659.2 L1095.6,657.7 L1096.5,656.7 L1096.7,657.4 L1097.8,658.2 L1099.0,659.7 L1100.1,659.6 L1101.3,659.3 L1102.4,659.7 L1103.6,659.4 L1104.7,659.2 L1105.9,659.4 L1107.0,659.3 L1108.2,659.5 L1109.3,658.9 L1110.5,659.1 L1111.6,659.8 L1112.8,658.7 L1113.9,658.4 L1115.1,658.8 L1116.2,658.6 L1117.3,659.4 L1118.5,658.4 L1119.6,658.8 L1120.8,659.1 L1121.9,658.5 L1123.1,658.9 L1124.2,659.4 L1125.4,659.0 L1126.5,658.3 L1127.7,657.9 L1128.8,656.9 L1129.6,656.8 L1130.0,657.5 L1131.1,657.1 L1132.3,658.1 L1133.4,658.9 L1134.5,659.8 L1135.7,659.1 L1136.8,658.5 L1138.0,659.3 L1139.1,659.5 L1140.3,658.1 L1141.4,659.1 L1142.6,658.8 L1143.7,659.1 L1144.9,658.5 L1146.0,659.0 L1147.2,659.4 L1148.3,659.2 L1149.5,659.0 L1150.6,658.3 L1151.8,659.0 L1152.9,659.1 L1154.0,658.6 L1155.2,658.6 L1156.3,659.3 L1157.5,659.0 L1158.6,658.7 L1159.8,659.2 L1160.9,658.7 L1162.1,658.9 L1163.2,659.6 L1164.4,658.7 L1165.5,659.1 L1166.7,659.2 L1167.8,659.8 L1169.0,658.9 L1170.1,659.8 L1171.2,659.0 L1172.4,658.5 L1173.5,659.5 L1174.7,659.2 L1175.8,659.2 L1177.0,658.7 L1178.1,659.1 L1179.3,659.2 L1180.4,658.6 L1181.6,659.8 L1182.7,659.2 L1183.9,659.8 L1185.0,659.3 L1186.2,658.9 L1187.3,659.7 L1188.5,659.2 L1189.6,658.5 L1190.7,659.8 L1191.9,659.1 L1193.0,659.2 L1194.2,658.3 L1195.3,659.1 L1196.5,659.3 L1197.6,658.6 L1198.8,659.3 L1199.9,659.4 L1201.1,658.9 L1202.2,659.7 L1203.4,658.6 L1204.5,658.7 L1205.7,659.3 L1206.8,659.5 L1207.9,659.2 L1209.1,658.5 L1210.2,658.5 L1211.4,659.2 L1212.5,659.0 L1213.7,659.0 L1214.8,658.7 L1216.0,659.0 L1217.1,659.3 L1218.3,658.6 L1219.4,658.3 L1220.6,659.4 L1221.7,658.2 L1222.9,658.9 L1224.0,659.1 L1225.2,659.0 L1226.3,658.7 L1227.4,659.5 L1228.6,659.2 L1229.7,658.1 L1230.9,659.3 L1232.0,659.8 L1233.2,659.6 L1234.3,658.4 L1235.5,659.8 L1236.6,659.3 L1237.8,659.2 L1238.9,659.2 L1240.1,659.1 L1241.2,659.8 L1242.4,658.4 L1243.5,659.6 L1244.6,658.7 L1245.8,658.5 L1246.9,659.3 L1248.1,658.9 L1249.0,657.8 L1249.2,657.7 L1250.4,658.2 L1251.5,659.3 L1252.7,659.4 L1253.8,659.8 L1255.0,658.8 L1256.1,658.8 L1257.3,659.0 L1258.4,659.6 L1259.6,659.6 L1260.7,659.7 L1261.9,659.3 L1263.0,658.6 L1264.1,659.1 L1265.3,659.3 L1266.4,659.2 L1267.6,659.4 L1268.7,659.2 L1269.9,659.5 L1271.0,658.5 L1272.2,659.1 L1273.3,659.2 L1274.5,658.6 L1275.6,658.8 L1276.8,658.6 L1277.9,659.4 L1279.1,659.5 L1280.2,658.5 L1281.3,659.0 L1282.5,659.2 L1283.6,658.7 L1284.8,659.0 L1285.9,659.2 L1287.1,659.6 L1288.2,659.4 L1289.4,659.1 L1290.5,659.0 L1291.7,659.0 L1292.8,659.4 L1294.0,659.0 L1295.1,659.5 L1296.3,659.3 L1297.4,659.4 L1298.6,658.5 L1299.7,659.4 L1300.8,658.7 L1302.0,659.7 L1303.1,658.9 L1304.3,658.4 L1305.4,659.2 L1306.6,658.4 L1307.7,659.1 L1308.9,659.7 L1310.0,659.2 L1311.2,659.0 L1312.3,659.1 L1313.5,658.9 L1314.6,659.1 L1315.8,658.6 L1316.9,658.7 L1318.0,659.1 L1319.2,659.6 L1320.3,659.0 L1321.5,658.7 L1322.6,658.9 L1323.8,658.9 L1324.9,659.8 L1326.1,658.8 L1327.2,659.2 L1328.4,659.3 L1329.5,658.8 L1330.7,659.8 L1331.8,658.9 L1333.0,659.3 L1334.1,659.8 L1335.3,659.7 L1336.4,659.1 L1337.5,658.6 L1338.7,659.8 L1339.8,659.8 L1341.0,658.9 L1342.1,659.5 L1343.3,659.4 L1344.4,659.3 L1345.6,659.0 L1346.7,659.4 L1347.9,659.3 L1349.0,659.3 L1350.2,659.3 L1351.3,659.8 L1352.5,658.8 L1353.6,658.9 L1354.7,658.9 L1355.9,658.7 L1357.0,659.0 L1358.2,658.2 L1359.3,659.1 L1360.5,659.3 L1361.6,659.1 L1362.8,658.8 L1363.9,658.8 L1365.1,658.7 L1366.2,659.2 L1367.4,659.6 L1368.5,659.4 L1369.7,659.2 L1370.8,659.8 L1372.0,658.9 L1373.1,658.9 L1374.2,659.0 L1375.4,659.6 L1376.5,659.2 L1377.7,658.9 L1378.8,658.5 L1380.0,658.7 L1381.1,659.2 L1382.3,658.2 L1383.4,659.2 L1384.6,659.1 L1385.7,659.5 L1386.9,659.8 L1388.0,659.5 L1389.2,658.9 L1390.3,659.5 L1391.4,659.1 L1392.6,658.8 L1393.7,659.7 L1394.9,658.7 L1396.0,659.6 L1397.2,658.9 L1398.3,659.0 L1399.5,658.7 L1400.6,659.1 L1401.8,659.0 L1402.9,659.0 L1404.1,658.6 L1405.2,659.6 L1406.4,659.7 L1407.5,659.7 L1408.7,658.8 L1409.8,659.0 L1410.9,659.2 L1412.1,659.4 L1413.2,659.3 L1414.4,658.9 L1415.5,659.2 L1416.7,659.3 L1417.8,658.8 L1419.0,659.1 L1420.1,659.8 L1421.3,658.7 L1422.4,659.0 L1423.6,659.3 L1424.7,659.0 L1425.9,658.7 L1427.0,659.1" fill="none" stroke="#6ed0e0" stroke-width="2.0" stroke-linejoin="round"/></svg>
<svg class="abs" style="left:0;top:0" width="1822" height="704"><line x1="1170.6" y1="526" x2="1170.6" y2="660" stroke="#6c1a1c" stroke-width="2"/></svg>
<div class="cur" style="left:1450.0px;top:524.5px;width:333.5px;text-align:right">current</div>
<div class="leg" style="left:1450px;top:542px;width:345px;height:26px">
<div class="lrow bg" style="width:345px"></div>
<div class="mk" style="left:11px;background:#7eb26d"></div>
<div class="abs" style="left:31px;top:0;line-height:26px">172.16.116.206:9100 - TCPSlowStartRetrans</div>
<div class="abs" style="right:11px;top:0;line-height:26px;text-align:right">0</div>
</div>
<div class="leg" style="left:1450px;top:568px;width:345px;height:26px">
<div class="lrow" style="width:345px"></div>
<div class="mk" style="left:11px;background:#eab839"></div>
<div class="abs" style="left:31px;top:0;line-height:26px">172.16.116.213:9100 - TCPSlowStartRetrans</div>
<div class="abs" style="right:11px;top:0;line-height:26px;text-align:right">0.4</div>
</div>
<div class="leg" style="left:1450px;top:594px;width:345px;height:26px">
<div class="lrow bg" style="width:345px"></div>
<div class="mk" style="left:11px;background:#6ed0e0"></div>
<div class="abs" style="left:31px;top:0;line-height:26px">172.16.117.177:9100 - TCPSlowStartRetrans</div>
<div class="abs" style="right:11px;top:0;line-height:26px;text-align:right">0.2</div>
</div>
</body></html>
